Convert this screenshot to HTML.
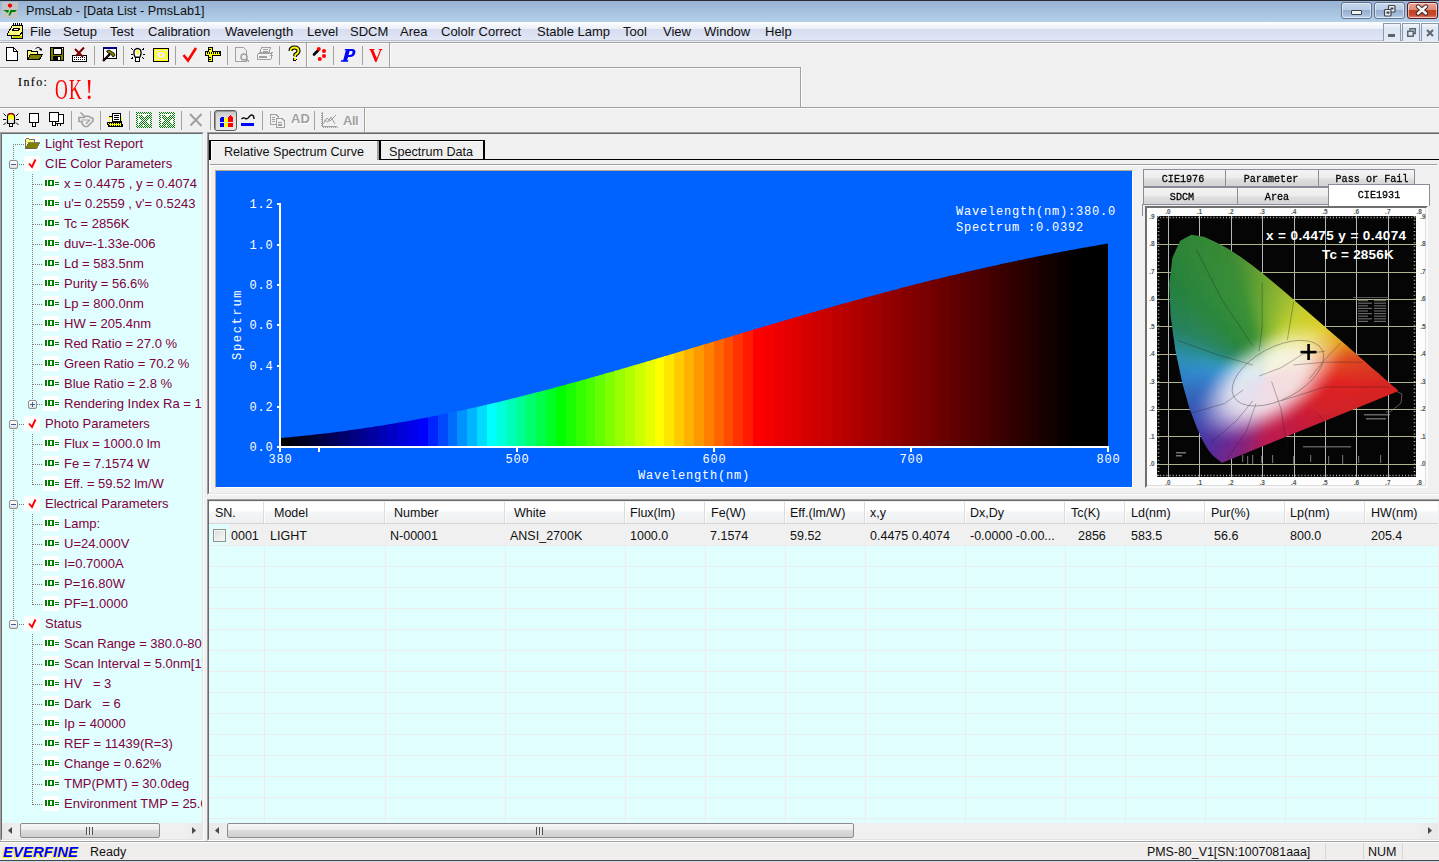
<!DOCTYPE html><html><head><meta charset="utf-8"><title>PmsLab</title><style>
*{box-sizing:border-box}
html,body{margin:0;padding:0}
body{width:1439px;height:862px;position:relative;overflow:hidden;background:#f0f0f0;font-family:"Liberation Sans",sans-serif;color:#000}
.ab{position:absolute}
.t{position:absolute;white-space:pre;line-height:1}
svg{position:absolute;overflow:visible}
</style></head><body>
<div class="ab" style="left:0;top:0;width:1439px;height:1px;background:#2a2e36"></div>
<div class="ab" style="left:0;top:1px;width:1439px;height:21px;background:linear-gradient(#97b2d3,#b5d0e9)"></div>
<svg style="left:2px;top:2px" width="16" height="16" viewBox="0 0 16 16">
<rect x="0" y="0" width="16" height="16" fill="#c4c4c4"/>
<circle cx="8" cy="3.6" r="2.1" fill="#f00000"/>
<path d="M1 8 L7 8 L6 11 Z" fill="#008000"/><path d="M8.5 8 L15 8 L13 10 L10 10 L8 13.5 L6.5 13.5 Z" fill="#008000"/>
</svg>
<div class="t" style="left:26px;top:5px;font-size:12.6px;color:#101010">PmsLab - [Data List - PmsLab1]</div>
<div class="ab" style="left:1341px;top:2px;width:31px;height:17px;border:1px solid #5f7391;border-radius:3px;background:linear-gradient(#c6d7ec 0%,#b9cde6 45%,#95aed0 50%,#a9c0df 85%,#c4d8ef 100%);box-shadow:inset 0 0 0 1px rgba(255,255,255,.55)"></div>
<div class="ab" style="left:1374px;top:2px;width:31px;height:17px;border:1px solid #5f7391;border-radius:3px;background:linear-gradient(#c6d7ec 0%,#b9cde6 45%,#95aed0 50%,#a9c0df 85%,#c4d8ef 100%);box-shadow:inset 0 0 0 1px rgba(255,255,255,.55)"></div>
<div class="ab" style="left:1407px;top:2px;width:31px;height:17px;border:1px solid #5a1a20;border-radius:3px;background:linear-gradient(#eba797 0%,#d98a78 45%,#c2411f 50%,#c94a2b 80%,#e0887a 100%);box-shadow:inset 0 0 0 1px rgba(255,255,255,.55)"></div>
<div class="ab" style="left:1351px;top:10px;width:11px;height:5px;background:#f4f4f0;border:1px solid #3a4250;border-radius:1px"></div>
<svg style="left:1383px;top:5px" width="14" height="12" viewBox="0 0 14 12">
<rect x="5.5" y="0.5" width="6.5" height="6.5" fill="#f4f4f0" stroke="#3a4250" stroke-width="1.2" rx="1"/>
<rect x="7.5" y="2.5" width="3" height="2" fill="#3a4250"/>
<rect x="1.5" y="4.5" width="6.5" height="6.5" fill="#f4f4f0" stroke="#3a4250" stroke-width="1.2" rx="1"/>
<rect x="3.5" y="6.5" width="3" height="2.2" fill="#3a4250"/>
</svg>
<svg style="left:1415px;top:4px" width="14" height="12" viewBox="0 0 14 12">
<path d="M3 2.5 L11 9.5 M11 2.5 L3 9.5" stroke="#40282a" stroke-width="4.4" stroke-linecap="round"/>
<path d="M3 2.5 L11 9.5 M11 2.5 L3 9.5" stroke="#f6f6f6" stroke-width="2.4" stroke-linecap="round"/>
</svg>
<div class="ab" style="left:0;top:22px;width:1439px;height:18px;background:linear-gradient(#ffffff 0%,#f3f5fa 20%,#eceff8 37%,#d6dcef 39%,#e2e7f6 100%)"></div>
<div class="ab" style="left:0;top:40px;width:1439px;height:1px;background:#bcc3d6"></div>
<div class="ab" style="left:0;top:41px;width:1439px;height:1px;background:#ececec"></div>
<div class="ab" style="left:0;top:42px;width:1439px;height:1px;background:#a0a0a0"></div>
<div class="ab" style="left:0;top:43px;width:1439px;height:1px;background:#fdfdfd"></div>
<svg style="left:7px;top:23px" width="17" height="17" viewBox="0 0 17 17" shape-rendering="crispEdges">
<defs><pattern id="mdy" width="2" height="2" patternUnits="userSpaceOnUse"><rect width="2" height="2" fill="#ffff00"/><rect width="1" height="1" fill="#ffffff"/><rect x="1" y="1" width="1" height="1" fill="#ffffff"/></pattern></defs>
<path d="M4.5 10.5 V15.5 H15.5 V8.5 Z" fill="url(#mdy)" stroke="#000"/>
<path d="M0.5 10.5 L5.5 2.5 H15.5 V8.5 L12.5 12.5 H0.5 Z" fill="url(#mdy)" stroke="#000"/>
<path d="M6.5 5.5 H12.5 L11.5 7.5 H5.5 Z" fill="#fff" stroke="#000"/>
<path d="M6 0 V2 M8 0 V2 M10 0 V2 M12 0 V2 M14 0 V2" stroke="#000"/>
<path d="M6 13.5 H15 M6 14.5 H15" stroke="#c8c800"/>
</svg>
<div class="t" style="left:30px;top:25px;font-size:13px;color:#101010">File</div>
<div class="t" style="left:63px;top:25px;font-size:13px;color:#101010">Setup</div>
<div class="t" style="left:110px;top:25px;font-size:13px;color:#101010">Test</div>
<div class="t" style="left:148px;top:25px;font-size:13px;color:#101010">Calibration</div>
<div class="t" style="left:225px;top:25px;font-size:13px;color:#101010">Wavelength</div>
<div class="t" style="left:307px;top:25px;font-size:13px;color:#101010">Level</div>
<div class="t" style="left:350px;top:25px;font-size:13px;color:#101010">SDCM</div>
<div class="t" style="left:400px;top:25px;font-size:13px;color:#101010">Area</div>
<div class="t" style="left:441px;top:25px;font-size:13px;color:#101010">Cololr Correct</div>
<div class="t" style="left:537px;top:25px;font-size:13px;color:#101010">Stable Lamp</div>
<div class="t" style="left:623px;top:25px;font-size:13px;color:#101010">Tool</div>
<div class="t" style="left:663px;top:25px;font-size:13px;color:#101010">View</div>
<div class="t" style="left:704px;top:25px;font-size:13px;color:#101010">Window</div>
<div class="t" style="left:765px;top:25px;font-size:13px;color:#101010">Help</div>
<div class="ab" style="left:1383px;top:23px;width:18px;height:18px;border:1px solid #8a9bb0;border-bottom:none;background:linear-gradient(#f2f6fb 0%,#e8eef7 18%,#dde6f2 22%,#e3ebf6 100%)"></div>
<div class="ab" style="left:1402px;top:23px;width:18px;height:18px;border:1px solid #8a9bb0;border-bottom:none;background:linear-gradient(#f2f6fb 0%,#e8eef7 18%,#dde6f2 22%,#e3ebf6 100%)"></div>
<div class="ab" style="left:1421px;top:23px;width:18px;height:18px;border:1px solid #8a9bb0;border-bottom:none;background:linear-gradient(#f2f6fb 0%,#e8eef7 18%,#dde6f2 22%,#e3ebf6 100%)"></div>
<div class="ab" style="left:1388px;top:34px;width:7px;height:2.5px;background:#5c6470"></div>
<svg style="left:1407px;top:28px" width="9" height="9" viewBox="0 0 9 9">
<path d="M3 2.5 V0.75 H8.25 V5.5 H6.5" fill="none" stroke="#5c6470" stroke-width="1.5"/>
<rect x="0.75" y="3.25" width="5.5" height="5" fill="none" stroke="#5c6470" stroke-width="1.5"/>
</svg>
<svg style="left:1426px;top:29px" width="8" height="8" viewBox="0 0 8 8">
<path d="M1 1 L7 7 M7 1 L1 7" stroke="#5c6470" stroke-width="2"/>
</svg>
<svg style="left:6px;top:47px" width="12" height="14" viewBox="0 0 12 14" shape-rendering="crispEdges"><path d="M0.5 0.5 H7.5 L11.5 4.5 V13.5 H0.5 Z" fill="#fff" stroke="#000"/><path d="M7.5 0.5 V4.5 H11.5" fill="none" stroke="#000"/></svg>
<svg style="left:27px;top:47px" width="16" height="14" viewBox="0 0 16 14" shape-rendering="crispEdges"><defs><pattern id="dy" width="2" height="2" patternUnits="userSpaceOnUse"><rect width="2" height="2" fill="#ffff00"/><rect width="1" height="1" fill="#fff"/><rect x="1" y="1" width="1" height="1" fill="#fff"/></pattern></defs><path d="M0.5 3.5 H4 L5 4.5 H10.5 V7 H4 L0.5 12 Z" fill="url(#dy)" stroke="#000"/><path d="M0.5 12.5 L3.5 7.5 H15.5 L12.5 12.5 Z" fill="#808000" stroke="#000"/><path d="M8.5 1.5 Q10.5 -0.5 13 1 L14 3" fill="none" stroke="#000" shape-rendering="auto"/><path d="M12 2.5 L14.5 4 L15 1.5 Z" fill="#000" shape-rendering="auto"/></svg>
<svg style="left:50px;top:47px" width="15" height="14" viewBox="0 0 15 14" shape-rendering="crispEdges"><rect x="0.5" y="0.5" width="13" height="13" fill="#808000" stroke="#000"/><rect x="3" y="1" width="8" height="6" fill="#fff" stroke="#000" stroke-width="1"/><rect x="3" y="9" width="8" height="4.5" fill="#000"/><rect x="8" y="10" width="2" height="3" fill="#fff"/><rect x="12" y="1" width="1" height="1" fill="#fff"/></svg>
<svg style="left:72px;top:47px" width="16" height="15" viewBox="0 0 16 15" shape-rendering="crispEdges"><rect x="0.5" y="8.5" width="14" height="6" fill="#fff" stroke="#000"/><rect x="2" y="10" width="1" height="1" fill="#000"/><rect x="2" y="12" width="1" height="1" fill="#000"/><rect x="4" y="10" width="1" height="1" fill="#000"/><rect x="4" y="12" width="1" height="1" fill="#000"/><rect x="6" y="10" width="1" height="1" fill="#000"/><rect x="6" y="12" width="1" height="1" fill="#000"/><rect x="8" y="10" width="1" height="1" fill="#000"/><rect x="8" y="12" width="1" height="1" fill="#000"/><rect x="10" y="10" width="1" height="1" fill="#000"/><rect x="10" y="12" width="1" height="1" fill="#000"/><rect x="12" y="10" width="1" height="1" fill="#000"/><rect x="12" y="12" width="1" height="1" fill="#000"/><path d="M3 2 L11 10 M12 0.5 L4 9" stroke="#800000" stroke-width="2" shape-rendering="auto"/></svg>
<div class="ab" style="left:94px;top:46px;width:1px;height:19px;background:#a0a0a0"></div>
<svg style="left:102px;top:47px" width="16" height="15" viewBox="0 0 16 15" shape-rendering="crispEdges"><rect x="1.5" y="0.5" width="13" height="11" fill="#fff" stroke="#000"/><rect x="1" y="0" width="14" height="2" fill="#000080"/><path d="M1 14 L8 7" stroke="#000" stroke-width="2.4" shape-rendering="auto"/><path d="M1 14 L8 7" stroke="#800000" stroke-width="1" stroke-dasharray="1 1" shape-rendering="auto"/><path d="M4.5 4 L7 3 L12 6 L13 8.5 L11 10 L9 7 L6 6 Z" fill="#808000" stroke="#000" stroke-width="0.8" shape-rendering="auto"/></svg>
<div class="ab" style="left:123px;top:46px;width:1px;height:19px;background:#a0a0a0"></div>
<svg style="left:130px;top:47px" width="16" height="15" viewBox="0 0 16 15" shape-rendering="crispEdges"><path d="M5 10 Q3 6 4.5 3 Q7.5 0 10.5 3 Q12 6 10 10 Z" fill="#fff" stroke="#000" stroke-width="1.2" shape-rendering="auto"/><path d="M6.5 4 Q7.5 2 9 4 L8.5 8 L7 8 Z" fill="#ffff00" shape-rendering="auto"/><rect x="5.5" y="10" width="4" height="4" fill="#fff" stroke="#000" stroke-width="1"/><path d="M1 7 H2.5 M13 7 H14.5 M1.5 1.5 L3 3 M14 1.5 L12.5 3 M1.5 12 L3 10.5 M14 12 L12.5 10.5" stroke="#000" stroke-width="1"/></svg>
<svg style="left:153px;top:48px" width="16" height="14" viewBox="0 0 16 14" shape-rendering="crispEdges"><rect x="0" y="0" width="16" height="14" fill="#000"/><rect x="1" y="1" width="14" height="12" fill="#ffff00"/><rect x="2" y="2" width="12" height="10" fill="#ececf4"/><path d="M5 3.5 H11 L13 5.5 V8.5 L11 10.5 H5 L3 8.5 V5.5 Z" fill="none" stroke="#ffff00" stroke-width="1.6" shape-rendering="auto"/><rect x="7" y="6" width="2" height="2" fill="#ffff00"/></svg>
<div class="ab" style="left:175px;top:46px;width:1px;height:19px;background:#a0a0a0"></div>
<svg style="left:183px;top:47px" width="14" height="15" viewBox="0 0 14 15" shape-rendering="crispEdges"><path d="M0.5 8 L5 13.5 L13 1" fill="none" stroke="#ff0000" stroke-width="2.6" shape-rendering="auto"/></svg>
<svg style="left:205px;top:47px" width="16" height="15" viewBox="0 0 16 15" shape-rendering="crispEdges"><path d="M3.5 0.5 H7.5 V4.5 H15.5 V8.5 H7.5 V14.5 H3.5 V8.5 H0.5 V4.5 H3.5 Z" fill="#ffff00" stroke="#000"/><rect x="2" y="5" width="1" height="1.5" fill="#000"/><rect x="4" y="5" width="1" height="1.5" fill="#000"/><rect x="6" y="5" width="1" height="1.5" fill="#000"/><rect x="8" y="5" width="1" height="1.5" fill="#000"/><rect x="10" y="5" width="1" height="1.5" fill="#000"/><rect x="12" y="5" width="1" height="1.5" fill="#000"/><rect x="14" y="5" width="1" height="1.5" fill="#000"/><path d="M4 2 H6 M4 10 H6 M4 12 H6" stroke="#000"/></svg>
<div class="ab" style="left:227px;top:46px;width:1px;height:19px;background:#a0a0a0"></div>
<svg style="left:235px;top:47px" width="15" height="15" viewBox="0 0 15 15" shape-rendering="crispEdges"><path d="M0.5 0.5 H8.5 L11.5 3.5 V14.5 H0.5 Z" fill="none" stroke="#a0a0a0"/><circle cx="9" cy="10" r="3" fill="none" stroke="#a0a0a0" stroke-width="1.5" shape-rendering="auto"/><path d="M11 12 L14 14.5" stroke="#a0a0a0" stroke-width="1.5"/></svg>
<svg style="left:257px;top:47px" width="16" height="14" viewBox="0 0 16 14" shape-rendering="crispEdges"><path d="M4.5 0.5 H13.5 L12 5.5 H3 Z" fill="none" stroke="#a0a0a0"/><path d="M6 2.5 H11 M5.5 4 H10.5" stroke="#a0a0a0"/><rect x="0.5" y="6.5" width="14" height="6" rx="1.5" fill="none" stroke="#a0a0a0"/><rect x="1.5" y="8.5" width="8" height="2" fill="#a0a0a0"/><path d="M13 7 L15.5 5 M13 9 L15.5 8" stroke="#a0a0a0"/></svg>
<div class="ab" style="left:279px;top:46px;width:1px;height:19px;background:#a0a0a0"></div>
<svg style="left:288px;top:46px" width="13" height="16" viewBox="0 0 13 16" shape-rendering="crispEdges"><path d="M2.5 5 Q2.5 1.5 6.5 1.5 Q10.5 1.5 10.5 5 Q10.5 7 7.5 8.5 L7 10.5" fill="none" stroke="#000" stroke-width="4" shape-rendering="auto"/><path d="M2.5 5 Q2.5 1.5 6.5 1.5 Q10.5 1.5 10.5 5 Q10.5 7 7.5 8.5 L7 10.5" fill="none" stroke="#ffff00" stroke-width="1.8" shape-rendering="auto"/><rect x="4.5" y="11.5" width="4" height="3.5" rx="1" fill="#000"/><rect x="5.5" y="12.3" width="2" height="2" fill="#ffff00"/></svg>
<div class="ab" style="left:306px;top:43px;width:1px;height:24px;background:#a0a0a0"></div><div class="ab" style="left:307px;top:43px;width:1px;height:24px;background:#fcfcfc"></div>
<svg style="left:312px;top:46px" width="16" height="16" viewBox="0 0 16 16" shape-rendering="crispEdges"><path d="M2 8.5 L6 4.5" stroke="#000" stroke-width="2.6" stroke-linecap="round" shape-rendering="auto"/><circle cx="6.8" cy="3" r="2" fill="#ff0000" shape-rendering="auto"/><circle cx="12" cy="5" r="2" fill="#ff0000" shape-rendering="auto"/><circle cx="12" cy="10" r="2" fill="#ff0000" shape-rendering="auto"/><circle cx="7.8" cy="13" r="2" fill="#ff0000" shape-rendering="auto"/></svg>
<div class="ab" style="left:333px;top:46px;width:1px;height:19px;background:#a0a0a0"></div>
<svg style="left:340px;top:48px" width="17" height="15" viewBox="0 0 17 15" shape-rendering="crispEdges"><path fill-rule="evenodd" d="M0.8 13.7 H8 L8.4 12.3 H7 L8.1 9 H10 Q14.2 9 15.3 5 Q16 1 12 1 H5 L4.6 2.3 H5.9 L3.2 12.3 H1.2 Z M9.6 3 H11.6 Q13 3 12.5 5 Q11.9 7 9.9 7 H8.5 Z" fill="#0000ff" shape-rendering="auto"/></svg>
<div class="ab" style="left:362px;top:46px;width:1px;height:19px;background:#a0a0a0"></div>
<div class="t" style="left:369px;top:47px;font-family:'Liberation Serif';font-size:18.5px;font-weight:bold;color:#ff0000;transform:scaleX(1.02);transform-origin:0 0">V</div>
<div class="ab" style="left:389px;top:43px;width:1px;height:24px;background:#a0a0a0"></div><div class="ab" style="left:390px;top:43px;width:1px;height:24px;background:#fcfcfc"></div>
<div class="ab" style="left:0;top:67px;width:801px;height:1px;background:#a0a0a0"></div>
<div class="ab" style="left:0;top:68px;width:800px;height:1px;background:#fbfbfb"></div>
<div class="ab" style="left:800px;top:67px;width:1px;height:40px;background:#a0a0a0"></div>
<div class="ab" style="left:801px;top:68px;width:1px;height:39px;background:#fbfbfb"></div>
<div class="t" style="left:18px;top:76px;font-family:'Liberation Serif';font-size:12px;font-weight:normal;letter-spacing:1.4px;color:#000;-webkit-text-stroke:0.15px #000">Info:</div>
<div class="t" style="left:55px;top:75px;font-family:'Liberation Serif';font-size:29.5px;color:#ff0000;transform:scaleX(0.6);transform-origin:0 0;letter-spacing:2px">OK</div>
<div class="t" style="left:85px;top:75px;font-family:'Liberation Serif';font-size:29.5px;color:#ff0000;transform:scaleX(0.85);transform-origin:0 0">!</div>
<div class="ab" style="left:0;top:107px;width:1439px;height:1px;background:#a0a0a0"></div>
<div class="ab" style="left:0;top:108px;width:1439px;height:1px;background:#fbfbfb"></div>
<svg style="left:3px;top:112px" width="17" height="16" viewBox="0 0 17 16" shape-rendering="crispEdges"><path d="M4.5 11.5 V5 Q4.5 1.5 8 1.5 Q11.5 1.5 11.5 5 V11.5 Z" fill="#e8e8f0" stroke="#000" stroke-width="1.2" shape-rendering="auto"/><path d="M5.2 8.5 V5 Q5.2 2.2 8 2.2 Q10.8 2.2 10.8 5 V8.5 L8 6.5 Z" fill="#ffff00" shape-rendering="auto"/><path d="M5 3 Q8 0 11 3" stroke="#a00000" stroke-width="1.2" fill="none" shape-rendering="auto"/><rect x="6.5" y="11.5" width="3" height="3" fill="#fff" stroke="#000"/><path d="M0.5 1.5 L3 4 M15.5 1.5 L13 4 M0 7.5 H3 M13 7.5 H16 M0.5 13 L3 10.5 M15.5 13 L13 10.5" stroke="#000" stroke-width="1" shape-rendering="auto"/></svg>
<svg style="left:29px;top:112px" width="11" height="15" viewBox="0 0 11 15" shape-rendering="crispEdges"><rect x="0.5" y="1.5" width="9" height="9" fill="#fff" stroke="#000"/><rect x="3.5" y="10.5" width="3" height="3.5" fill="#fff" stroke="#000"/></svg>
<svg style="left:49px;top:112px" width="16" height="16" viewBox="0 0 16 16" shape-rendering="crispEdges"><rect x="6.5" y="2.5" width="8" height="9" fill="#fff" stroke="#000"/><rect x="0.5" y="0.5" width="9" height="9" fill="#fff" stroke="#000"/><rect x="3.5" y="9.5" width="3" height="3.5" fill="#fff" stroke="#000"/><rect x="8" y="12" width="1" height="2" fill="#000"/><rect x="11" y="12" width="1" height="2" fill="#000"/></svg>
<div class="ab" style="left:71px;top:111px;width:1px;height:19px;background:#a0a0a0"></div>
<svg style="left:76px;top:110px" width="20" height="20" viewBox="0 0 20 20" shape-rendering="crispEdges"><path d="M4.5 2.5 L9 7" stroke="#a0a0a0" stroke-width="1.6" shape-rendering="auto"/><path d="M3 7.5 H8 L10 6 L13 6.5 L17 8.5 V11 L11.5 16.5 H8.5 L6 13.5 V11.5 H3 Z" fill="none" stroke="#a0a0a0" stroke-width="1.6" shape-rendering="auto"/><path d="M6 10 H13.5 L10 14" fill="none" stroke="#a0a0a0" stroke-width="1.2" shape-rendering="auto"/></svg>
<div class="ab" style="left:100px;top:111px;width:1px;height:19px;background:#a0a0a0"></div>
<svg style="left:107px;top:113px" width="16" height="14" viewBox="0 0 16 14" shape-rendering="crispEdges"><defs><pattern id="dy2" width="2" height="2" patternUnits="userSpaceOnUse"><rect width="2" height="2" fill="#ffff00"/><rect width="1" height="1" fill="#000"/></pattern></defs><rect x="5.5" y="0.5" width="8" height="8" fill="#fff" stroke="#000"/><path d="M7 2.5 H12 M7 4.5 H12 M7 6.5 H12" stroke="#000"/><path d="M1.5 3.5 H5 V8.5 H14.5 V3.5" fill="none" stroke="#000"/><rect x="2" y="4" width="3" height="4.5" fill="#ffff00"/><rect x="3" y="5" width="2" height="3.5" fill="#fff"/><rect x="13.5" y="4" width="1" height="4" fill="#ffff00"/><path d="M0.5 9.5 H14.5 L15.5 13.5 H1.5 Z" fill="url(#dy2)" stroke="#000"/></svg>
<div class="ab" style="left:129px;top:111px;width:1px;height:19px;background:#a0a0a0"></div>
<svg style="left:136px;top:112px" width="16" height="16" viewBox="0 0 16 16" shape-rendering="crispEdges"><defs><pattern id="dgp" width="2" height="2" patternUnits="userSpaceOnUse"><rect width="2" height="2" fill="#ffffff"/><rect width="1" height="1" fill="#008000"/><rect x="1" y="1" width="1" height="1" fill="#008000"/></pattern></defs><rect x="0" y="0" width="16" height="16" fill="url(#dgp)"/><rect x="2" y="2" width="12" height="12" fill="#fff"/><path d="M2.5 3 H6.5 L13 12 V14 H9.5 L2.5 5 Z M10 3 H14 V5 L6 14 H2.5 V12 Z" fill="url(#dgp)"/><rect x="12" y="12" width="2" height="2" fill="url(#dgp)"/></svg>
<svg style="left:159px;top:112px" width="16" height="16" viewBox="0 0 16 16" shape-rendering="crispEdges"><defs><pattern id="dgp" width="2" height="2" patternUnits="userSpaceOnUse"><rect width="2" height="2" fill="#ffffff"/><rect width="1" height="1" fill="#008000"/><rect x="1" y="1" width="1" height="1" fill="#008000"/></pattern></defs><rect x="0" y="0" width="16" height="16" fill="url(#dgp)"/><rect x="2" y="2" width="12" height="12" fill="#fff"/><path d="M2.5 3 H6.5 L13 12 V14 H9.5 L2.5 5 Z M10 3 H14 V5 L6 14 H2.5 V12 Z" fill="url(#dgp)"/><rect x="12" y="12" width="2" height="2" fill="url(#dgp)"/></svg>
<div class="ab" style="left:181px;top:111px;width:1px;height:19px;background:#a0a0a0"></div>
<svg style="left:189px;top:113px" width="14" height="14" viewBox="0 0 14 14" shape-rendering="crispEdges"><path d="M1 1 L12.5 13 M12.5 1 L1.5 12.5" stroke="#a0a0a0" stroke-width="2" shape-rendering="auto"/></svg>
<div class="ab" style="left:210px;top:111px;width:1px;height:19px;background:#a0a0a0"></div>
<div class="ab" style="left:214px;top:110px;width:23px;height:21px;border:1px solid #5c5c5c;border-radius:3px;background:linear-gradient(#c8c8c8,#dedede 40%,#e6e6e6);box-shadow:inset 1px 1px 0 #9a9a9a"></div>
<svg style="left:220px;top:115px" width="13" height="12" viewBox="0 0 13 12" shape-rendering="crispEdges"><path d="M0 3 Q0.5 2 2 2 H4 V7 H0 Z" fill="#0000ff"/><rect x="4" y="3" width="4" height="4" fill="#ffff00"/><path d="M8 2 L10.5 0 L13 2 V7 H8 Z" fill="#ff0000"/><rect x="0" y="8" width="4" height="4" fill="#0000ff"/><rect x="4" y="8" width="4" height="4" fill="#ffff00"/><rect x="8" y="8" width="5" height="4" fill="#ff0000"/></svg>
<svg style="left:241px;top:114px" width="14" height="13" viewBox="0 0 14 13" shape-rendering="crispEdges"><path d="M0.5 5 Q2.5 3 4.5 4.5 Q6.5 5.5 8 3 Q10 0 12 1.5 Q13 2.5 13 5" fill="none" stroke="#000" stroke-width="1.4" shape-rendering="auto"/><rect x="0" y="9" width="13" height="3" fill="#0000ff"/></svg>
<div class="ab" style="left:262px;top:111px;width:1px;height:19px;background:#a0a0a0"></div>
<svg style="left:270px;top:114px" width="16" height="14" viewBox="0 0 16 14" shape-rendering="crispEdges"><path d="M0.5 0.5 H6 L8 2.5 V10.5 H0.5 Z" fill="none" stroke="#a0a0a0"/><path d="M6.5 4.5 H12 L14.5 7 V13.5 H6.5 Z" fill="#f0f0f0" stroke="#a0a0a0"/><path d="M2 3.5 H5 M2 5.5 H5 M2 7.5 H5 M8 8.5 H12 M8 10 H12 M8 11.5 H12" stroke="#a0a0a0"/></svg>
<div class="t" style="left:291px;top:112px;font-size:13px;font-weight:bold;color:#a0a0a0;text-shadow:1px 1px 0 #fff">AD</div>
<div class="ab" style="left:314px;top:111px;width:1px;height:19px;background:#a0a0a0"></div>
<svg style="left:321px;top:112px" width="17" height="16" viewBox="0 0 17 16" shape-rendering="crispEdges"><path d="M1.5 0 V14.5 H16" fill="none" stroke="#a0a0a0"/><rect x="2" y="15" width="1" height="1" fill="#a0a0a0"/><rect x="4" y="15" width="1" height="1" fill="#a0a0a0"/><rect x="6" y="15" width="1" height="1" fill="#a0a0a0"/><rect x="8" y="15" width="1" height="1" fill="#a0a0a0"/><rect x="10" y="15" width="1" height="1" fill="#a0a0a0"/><rect x="12" y="15" width="1" height="1" fill="#a0a0a0"/><rect x="14" y="15" width="1" height="1" fill="#a0a0a0"/><rect x="16" y="15" width="1" height="1" fill="#a0a0a0"/><rect x="0" y="1" width="1" height="1" fill="#a0a0a0"/><rect x="0" y="3" width="1" height="1" fill="#a0a0a0"/><rect x="0" y="5" width="1" height="1" fill="#a0a0a0"/><rect x="0" y="7" width="1" height="1" fill="#a0a0a0"/><rect x="0" y="9" width="1" height="1" fill="#a0a0a0"/><rect x="0" y="11" width="1" height="1" fill="#a0a0a0"/><rect x="0" y="13" width="1" height="1" fill="#a0a0a0"/><path d="M2 12 L6 6 L9 9 L15 3 M3 8 L7 10 L10 5 L14 12" fill="none" stroke="#a0a0a0" shape-rendering="auto"/></svg>
<div class="t" style="left:343px;top:114px;font-size:13px;font-weight:bold;color:#a0a0a0;letter-spacing:-0.5px;text-shadow:1px 1px 0 #fff">All</div>
<div class="ab" style="left:364px;top:108px;width:1px;height:24px;background:#a0a0a0"></div><div class="ab" style="left:365px;top:108px;width:1px;height:24px;background:#fcfcfc"></div>
<div class="ab" style="left:0;top:132px;width:204px;height:709px;border-top:1px solid #a0a0a0;border-left:1px solid #a0a0a0;border-right:1px solid #fdfdfd;border-bottom:1px solid #fdfdfd"></div>
<div class="ab" style="left:1px;top:133px;width:202px;height:707px;border-top:1px solid #696969;border-left:1px solid #696969;border-right:1px solid #e3e3e3;border-bottom:1px solid #e3e3e3"></div>
<div class="ab" style="left:2px;top:134px;width:200px;height:689px;background:#e1fefe;overflow:hidden">
<svg style="left:0;top:0" width="200" height="689" viewBox="2 134 200 689" shape-rendering="crispEdges"><defs><pattern id="fdy" width="2" height="2" patternUnits="userSpaceOnUse"><rect width="2" height="2" fill="#ffff00"/><rect width="1" height="1" fill="#ffffff"/><rect x="1" y="1" width="1" height="1" fill="#ffffff"/></pattern><linearGradient id="expg" x1="0" y1="0" x2="0" y2="1"><stop offset="0" stop-color="#ffffff"/><stop offset="0.5" stop-color="#f4f4f4"/><stop offset="1" stop-color="#d8d8d8"/></linearGradient></defs><rect x="13" y="146" width="1" height="1" fill="#7d7d7d"/><rect x="13" y="148" width="1" height="1" fill="#7d7d7d"/><rect x="13" y="150" width="1" height="1" fill="#7d7d7d"/><rect x="13" y="152" width="1" height="1" fill="#7d7d7d"/><rect x="13" y="154" width="1" height="1" fill="#7d7d7d"/><rect x="13" y="156" width="1" height="1" fill="#7d7d7d"/><rect x="13" y="158" width="1" height="1" fill="#7d7d7d"/><rect x="13" y="170" width="1" height="1" fill="#7d7d7d"/><rect x="13" y="172" width="1" height="1" fill="#7d7d7d"/><rect x="13" y="174" width="1" height="1" fill="#7d7d7d"/><rect x="13" y="176" width="1" height="1" fill="#7d7d7d"/><rect x="13" y="178" width="1" height="1" fill="#7d7d7d"/><rect x="13" y="180" width="1" height="1" fill="#7d7d7d"/><rect x="13" y="182" width="1" height="1" fill="#7d7d7d"/><rect x="13" y="184" width="1" height="1" fill="#7d7d7d"/><rect x="13" y="186" width="1" height="1" fill="#7d7d7d"/><rect x="13" y="188" width="1" height="1" fill="#7d7d7d"/><rect x="13" y="190" width="1" height="1" fill="#7d7d7d"/><rect x="13" y="192" width="1" height="1" fill="#7d7d7d"/><rect x="13" y="194" width="1" height="1" fill="#7d7d7d"/><rect x="13" y="196" width="1" height="1" fill="#7d7d7d"/><rect x="13" y="198" width="1" height="1" fill="#7d7d7d"/><rect x="13" y="200" width="1" height="1" fill="#7d7d7d"/><rect x="13" y="202" width="1" height="1" fill="#7d7d7d"/><rect x="13" y="204" width="1" height="1" fill="#7d7d7d"/><rect x="13" y="206" width="1" height="1" fill="#7d7d7d"/><rect x="13" y="208" width="1" height="1" fill="#7d7d7d"/><rect x="13" y="210" width="1" height="1" fill="#7d7d7d"/><rect x="13" y="212" width="1" height="1" fill="#7d7d7d"/><rect x="13" y="214" width="1" height="1" fill="#7d7d7d"/><rect x="13" y="216" width="1" height="1" fill="#7d7d7d"/><rect x="13" y="218" width="1" height="1" fill="#7d7d7d"/><rect x="13" y="220" width="1" height="1" fill="#7d7d7d"/><rect x="13" y="222" width="1" height="1" fill="#7d7d7d"/><rect x="13" y="224" width="1" height="1" fill="#7d7d7d"/><rect x="13" y="226" width="1" height="1" fill="#7d7d7d"/><rect x="13" y="228" width="1" height="1" fill="#7d7d7d"/><rect x="13" y="230" width="1" height="1" fill="#7d7d7d"/><rect x="13" y="232" width="1" height="1" fill="#7d7d7d"/><rect x="13" y="234" width="1" height="1" fill="#7d7d7d"/><rect x="13" y="236" width="1" height="1" fill="#7d7d7d"/><rect x="13" y="238" width="1" height="1" fill="#7d7d7d"/><rect x="13" y="240" width="1" height="1" fill="#7d7d7d"/><rect x="13" y="242" width="1" height="1" fill="#7d7d7d"/><rect x="13" y="244" width="1" height="1" fill="#7d7d7d"/><rect x="13" y="246" width="1" height="1" fill="#7d7d7d"/><rect x="13" y="248" width="1" height="1" fill="#7d7d7d"/><rect x="13" y="250" width="1" height="1" fill="#7d7d7d"/><rect x="13" y="252" width="1" height="1" fill="#7d7d7d"/><rect x="13" y="254" width="1" height="1" fill="#7d7d7d"/><rect x="13" y="256" width="1" height="1" fill="#7d7d7d"/><rect x="13" y="258" width="1" height="1" fill="#7d7d7d"/><rect x="13" y="260" width="1" height="1" fill="#7d7d7d"/><rect x="13" y="262" width="1" height="1" fill="#7d7d7d"/><rect x="13" y="264" width="1" height="1" fill="#7d7d7d"/><rect x="13" y="266" width="1" height="1" fill="#7d7d7d"/><rect x="13" y="268" width="1" height="1" fill="#7d7d7d"/><rect x="13" y="270" width="1" height="1" fill="#7d7d7d"/><rect x="13" y="272" width="1" height="1" fill="#7d7d7d"/><rect x="13" y="274" width="1" height="1" fill="#7d7d7d"/><rect x="13" y="276" width="1" height="1" fill="#7d7d7d"/><rect x="13" y="278" width="1" height="1" fill="#7d7d7d"/><rect x="13" y="280" width="1" height="1" fill="#7d7d7d"/><rect x="13" y="282" width="1" height="1" fill="#7d7d7d"/><rect x="13" y="284" width="1" height="1" fill="#7d7d7d"/><rect x="13" y="286" width="1" height="1" fill="#7d7d7d"/><rect x="13" y="288" width="1" height="1" fill="#7d7d7d"/><rect x="13" y="290" width="1" height="1" fill="#7d7d7d"/><rect x="13" y="292" width="1" height="1" fill="#7d7d7d"/><rect x="13" y="294" width="1" height="1" fill="#7d7d7d"/><rect x="13" y="296" width="1" height="1" fill="#7d7d7d"/><rect x="13" y="298" width="1" height="1" fill="#7d7d7d"/><rect x="13" y="300" width="1" height="1" fill="#7d7d7d"/><rect x="13" y="302" width="1" height="1" fill="#7d7d7d"/><rect x="13" y="304" width="1" height="1" fill="#7d7d7d"/><rect x="13" y="306" width="1" height="1" fill="#7d7d7d"/><rect x="13" y="308" width="1" height="1" fill="#7d7d7d"/><rect x="13" y="310" width="1" height="1" fill="#7d7d7d"/><rect x="13" y="312" width="1" height="1" fill="#7d7d7d"/><rect x="13" y="314" width="1" height="1" fill="#7d7d7d"/><rect x="13" y="316" width="1" height="1" fill="#7d7d7d"/><rect x="13" y="318" width="1" height="1" fill="#7d7d7d"/><rect x="13" y="320" width="1" height="1" fill="#7d7d7d"/><rect x="13" y="322" width="1" height="1" fill="#7d7d7d"/><rect x="13" y="324" width="1" height="1" fill="#7d7d7d"/><rect x="13" y="326" width="1" height="1" fill="#7d7d7d"/><rect x="13" y="328" width="1" height="1" fill="#7d7d7d"/><rect x="13" y="330" width="1" height="1" fill="#7d7d7d"/><rect x="13" y="332" width="1" height="1" fill="#7d7d7d"/><rect x="13" y="334" width="1" height="1" fill="#7d7d7d"/><rect x="13" y="336" width="1" height="1" fill="#7d7d7d"/><rect x="13" y="338" width="1" height="1" fill="#7d7d7d"/><rect x="13" y="340" width="1" height="1" fill="#7d7d7d"/><rect x="13" y="342" width="1" height="1" fill="#7d7d7d"/><rect x="13" y="344" width="1" height="1" fill="#7d7d7d"/><rect x="13" y="346" width="1" height="1" fill="#7d7d7d"/><rect x="13" y="348" width="1" height="1" fill="#7d7d7d"/><rect x="13" y="350" width="1" height="1" fill="#7d7d7d"/><rect x="13" y="352" width="1" height="1" fill="#7d7d7d"/><rect x="13" y="354" width="1" height="1" fill="#7d7d7d"/><rect x="13" y="356" width="1" height="1" fill="#7d7d7d"/><rect x="13" y="358" width="1" height="1" fill="#7d7d7d"/><rect x="13" y="360" width="1" height="1" fill="#7d7d7d"/><rect x="13" y="362" width="1" height="1" fill="#7d7d7d"/><rect x="13" y="364" width="1" height="1" fill="#7d7d7d"/><rect x="13" y="366" width="1" height="1" fill="#7d7d7d"/><rect x="13" y="368" width="1" height="1" fill="#7d7d7d"/><rect x="13" y="370" width="1" height="1" fill="#7d7d7d"/><rect x="13" y="372" width="1" height="1" fill="#7d7d7d"/><rect x="13" y="374" width="1" height="1" fill="#7d7d7d"/><rect x="13" y="376" width="1" height="1" fill="#7d7d7d"/><rect x="13" y="378" width="1" height="1" fill="#7d7d7d"/><rect x="13" y="380" width="1" height="1" fill="#7d7d7d"/><rect x="13" y="382" width="1" height="1" fill="#7d7d7d"/><rect x="13" y="384" width="1" height="1" fill="#7d7d7d"/><rect x="13" y="386" width="1" height="1" fill="#7d7d7d"/><rect x="13" y="388" width="1" height="1" fill="#7d7d7d"/><rect x="13" y="390" width="1" height="1" fill="#7d7d7d"/><rect x="13" y="392" width="1" height="1" fill="#7d7d7d"/><rect x="13" y="394" width="1" height="1" fill="#7d7d7d"/><rect x="13" y="396" width="1" height="1" fill="#7d7d7d"/><rect x="13" y="398" width="1" height="1" fill="#7d7d7d"/><rect x="13" y="400" width="1" height="1" fill="#7d7d7d"/><rect x="13" y="402" width="1" height="1" fill="#7d7d7d"/><rect x="13" y="404" width="1" height="1" fill="#7d7d7d"/><rect x="13" y="406" width="1" height="1" fill="#7d7d7d"/><rect x="13" y="408" width="1" height="1" fill="#7d7d7d"/><rect x="13" y="410" width="1" height="1" fill="#7d7d7d"/><rect x="13" y="412" width="1" height="1" fill="#7d7d7d"/><rect x="13" y="414" width="1" height="1" fill="#7d7d7d"/><rect x="13" y="416" width="1" height="1" fill="#7d7d7d"/><rect x="13" y="418" width="1" height="1" fill="#7d7d7d"/><rect x="13" y="430" width="1" height="1" fill="#7d7d7d"/><rect x="13" y="432" width="1" height="1" fill="#7d7d7d"/><rect x="13" y="434" width="1" height="1" fill="#7d7d7d"/><rect x="13" y="436" width="1" height="1" fill="#7d7d7d"/><rect x="13" y="438" width="1" height="1" fill="#7d7d7d"/><rect x="13" y="440" width="1" height="1" fill="#7d7d7d"/><rect x="13" y="442" width="1" height="1" fill="#7d7d7d"/><rect x="13" y="444" width="1" height="1" fill="#7d7d7d"/><rect x="13" y="446" width="1" height="1" fill="#7d7d7d"/><rect x="13" y="448" width="1" height="1" fill="#7d7d7d"/><rect x="13" y="450" width="1" height="1" fill="#7d7d7d"/><rect x="13" y="452" width="1" height="1" fill="#7d7d7d"/><rect x="13" y="454" width="1" height="1" fill="#7d7d7d"/><rect x="13" y="456" width="1" height="1" fill="#7d7d7d"/><rect x="13" y="458" width="1" height="1" fill="#7d7d7d"/><rect x="13" y="460" width="1" height="1" fill="#7d7d7d"/><rect x="13" y="462" width="1" height="1" fill="#7d7d7d"/><rect x="13" y="464" width="1" height="1" fill="#7d7d7d"/><rect x="13" y="466" width="1" height="1" fill="#7d7d7d"/><rect x="13" y="468" width="1" height="1" fill="#7d7d7d"/><rect x="13" y="470" width="1" height="1" fill="#7d7d7d"/><rect x="13" y="472" width="1" height="1" fill="#7d7d7d"/><rect x="13" y="474" width="1" height="1" fill="#7d7d7d"/><rect x="13" y="476" width="1" height="1" fill="#7d7d7d"/><rect x="13" y="478" width="1" height="1" fill="#7d7d7d"/><rect x="13" y="480" width="1" height="1" fill="#7d7d7d"/><rect x="13" y="482" width="1" height="1" fill="#7d7d7d"/><rect x="13" y="484" width="1" height="1" fill="#7d7d7d"/><rect x="13" y="486" width="1" height="1" fill="#7d7d7d"/><rect x="13" y="488" width="1" height="1" fill="#7d7d7d"/><rect x="13" y="490" width="1" height="1" fill="#7d7d7d"/><rect x="13" y="492" width="1" height="1" fill="#7d7d7d"/><rect x="13" y="494" width="1" height="1" fill="#7d7d7d"/><rect x="13" y="496" width="1" height="1" fill="#7d7d7d"/><rect x="13" y="498" width="1" height="1" fill="#7d7d7d"/><rect x="13" y="510" width="1" height="1" fill="#7d7d7d"/><rect x="13" y="512" width="1" height="1" fill="#7d7d7d"/><rect x="13" y="514" width="1" height="1" fill="#7d7d7d"/><rect x="13" y="516" width="1" height="1" fill="#7d7d7d"/><rect x="13" y="518" width="1" height="1" fill="#7d7d7d"/><rect x="13" y="520" width="1" height="1" fill="#7d7d7d"/><rect x="13" y="522" width="1" height="1" fill="#7d7d7d"/><rect x="13" y="524" width="1" height="1" fill="#7d7d7d"/><rect x="13" y="526" width="1" height="1" fill="#7d7d7d"/><rect x="13" y="528" width="1" height="1" fill="#7d7d7d"/><rect x="13" y="530" width="1" height="1" fill="#7d7d7d"/><rect x="13" y="532" width="1" height="1" fill="#7d7d7d"/><rect x="13" y="534" width="1" height="1" fill="#7d7d7d"/><rect x="13" y="536" width="1" height="1" fill="#7d7d7d"/><rect x="13" y="538" width="1" height="1" fill="#7d7d7d"/><rect x="13" y="540" width="1" height="1" fill="#7d7d7d"/><rect x="13" y="542" width="1" height="1" fill="#7d7d7d"/><rect x="13" y="544" width="1" height="1" fill="#7d7d7d"/><rect x="13" y="546" width="1" height="1" fill="#7d7d7d"/><rect x="13" y="548" width="1" height="1" fill="#7d7d7d"/><rect x="13" y="550" width="1" height="1" fill="#7d7d7d"/><rect x="13" y="552" width="1" height="1" fill="#7d7d7d"/><rect x="13" y="554" width="1" height="1" fill="#7d7d7d"/><rect x="13" y="556" width="1" height="1" fill="#7d7d7d"/><rect x="13" y="558" width="1" height="1" fill="#7d7d7d"/><rect x="13" y="560" width="1" height="1" fill="#7d7d7d"/><rect x="13" y="562" width="1" height="1" fill="#7d7d7d"/><rect x="13" y="564" width="1" height="1" fill="#7d7d7d"/><rect x="13" y="566" width="1" height="1" fill="#7d7d7d"/><rect x="13" y="568" width="1" height="1" fill="#7d7d7d"/><rect x="13" y="570" width="1" height="1" fill="#7d7d7d"/><rect x="13" y="572" width="1" height="1" fill="#7d7d7d"/><rect x="13" y="574" width="1" height="1" fill="#7d7d7d"/><rect x="13" y="576" width="1" height="1" fill="#7d7d7d"/><rect x="13" y="578" width="1" height="1" fill="#7d7d7d"/><rect x="13" y="580" width="1" height="1" fill="#7d7d7d"/><rect x="13" y="582" width="1" height="1" fill="#7d7d7d"/><rect x="13" y="584" width="1" height="1" fill="#7d7d7d"/><rect x="13" y="586" width="1" height="1" fill="#7d7d7d"/><rect x="13" y="588" width="1" height="1" fill="#7d7d7d"/><rect x="13" y="590" width="1" height="1" fill="#7d7d7d"/><rect x="13" y="592" width="1" height="1" fill="#7d7d7d"/><rect x="13" y="594" width="1" height="1" fill="#7d7d7d"/><rect x="13" y="596" width="1" height="1" fill="#7d7d7d"/><rect x="13" y="598" width="1" height="1" fill="#7d7d7d"/><rect x="13" y="600" width="1" height="1" fill="#7d7d7d"/><rect x="13" y="602" width="1" height="1" fill="#7d7d7d"/><rect x="13" y="604" width="1" height="1" fill="#7d7d7d"/><rect x="13" y="606" width="1" height="1" fill="#7d7d7d"/><rect x="13" y="608" width="1" height="1" fill="#7d7d7d"/><rect x="13" y="610" width="1" height="1" fill="#7d7d7d"/><rect x="13" y="612" width="1" height="1" fill="#7d7d7d"/><rect x="13" y="614" width="1" height="1" fill="#7d7d7d"/><rect x="13" y="616" width="1" height="1" fill="#7d7d7d"/><rect x="13" y="618" width="1" height="1" fill="#7d7d7d"/><rect x="32" y="174" width="1" height="1" fill="#7d7d7d"/><rect x="32" y="176" width="1" height="1" fill="#7d7d7d"/><rect x="32" y="178" width="1" height="1" fill="#7d7d7d"/><rect x="32" y="180" width="1" height="1" fill="#7d7d7d"/><rect x="32" y="182" width="1" height="1" fill="#7d7d7d"/><rect x="32" y="184" width="1" height="1" fill="#7d7d7d"/><rect x="32" y="186" width="1" height="1" fill="#7d7d7d"/><rect x="32" y="188" width="1" height="1" fill="#7d7d7d"/><rect x="32" y="190" width="1" height="1" fill="#7d7d7d"/><rect x="32" y="192" width="1" height="1" fill="#7d7d7d"/><rect x="32" y="194" width="1" height="1" fill="#7d7d7d"/><rect x="32" y="196" width="1" height="1" fill="#7d7d7d"/><rect x="32" y="198" width="1" height="1" fill="#7d7d7d"/><rect x="32" y="200" width="1" height="1" fill="#7d7d7d"/><rect x="32" y="202" width="1" height="1" fill="#7d7d7d"/><rect x="32" y="204" width="1" height="1" fill="#7d7d7d"/><rect x="32" y="206" width="1" height="1" fill="#7d7d7d"/><rect x="32" y="208" width="1" height="1" fill="#7d7d7d"/><rect x="32" y="210" width="1" height="1" fill="#7d7d7d"/><rect x="32" y="212" width="1" height="1" fill="#7d7d7d"/><rect x="32" y="214" width="1" height="1" fill="#7d7d7d"/><rect x="32" y="216" width="1" height="1" fill="#7d7d7d"/><rect x="32" y="218" width="1" height="1" fill="#7d7d7d"/><rect x="32" y="220" width="1" height="1" fill="#7d7d7d"/><rect x="32" y="222" width="1" height="1" fill="#7d7d7d"/><rect x="32" y="224" width="1" height="1" fill="#7d7d7d"/><rect x="32" y="226" width="1" height="1" fill="#7d7d7d"/><rect x="32" y="228" width="1" height="1" fill="#7d7d7d"/><rect x="32" y="230" width="1" height="1" fill="#7d7d7d"/><rect x="32" y="232" width="1" height="1" fill="#7d7d7d"/><rect x="32" y="234" width="1" height="1" fill="#7d7d7d"/><rect x="32" y="236" width="1" height="1" fill="#7d7d7d"/><rect x="32" y="238" width="1" height="1" fill="#7d7d7d"/><rect x="32" y="240" width="1" height="1" fill="#7d7d7d"/><rect x="32" y="242" width="1" height="1" fill="#7d7d7d"/><rect x="32" y="244" width="1" height="1" fill="#7d7d7d"/><rect x="32" y="246" width="1" height="1" fill="#7d7d7d"/><rect x="32" y="248" width="1" height="1" fill="#7d7d7d"/><rect x="32" y="250" width="1" height="1" fill="#7d7d7d"/><rect x="32" y="252" width="1" height="1" fill="#7d7d7d"/><rect x="32" y="254" width="1" height="1" fill="#7d7d7d"/><rect x="32" y="256" width="1" height="1" fill="#7d7d7d"/><rect x="32" y="258" width="1" height="1" fill="#7d7d7d"/><rect x="32" y="260" width="1" height="1" fill="#7d7d7d"/><rect x="32" y="262" width="1" height="1" fill="#7d7d7d"/><rect x="32" y="264" width="1" height="1" fill="#7d7d7d"/><rect x="32" y="266" width="1" height="1" fill="#7d7d7d"/><rect x="32" y="268" width="1" height="1" fill="#7d7d7d"/><rect x="32" y="270" width="1" height="1" fill="#7d7d7d"/><rect x="32" y="272" width="1" height="1" fill="#7d7d7d"/><rect x="32" y="274" width="1" height="1" fill="#7d7d7d"/><rect x="32" y="276" width="1" height="1" fill="#7d7d7d"/><rect x="32" y="278" width="1" height="1" fill="#7d7d7d"/><rect x="32" y="280" width="1" height="1" fill="#7d7d7d"/><rect x="32" y="282" width="1" height="1" fill="#7d7d7d"/><rect x="32" y="284" width="1" height="1" fill="#7d7d7d"/><rect x="32" y="286" width="1" height="1" fill="#7d7d7d"/><rect x="32" y="288" width="1" height="1" fill="#7d7d7d"/><rect x="32" y="290" width="1" height="1" fill="#7d7d7d"/><rect x="32" y="292" width="1" height="1" fill="#7d7d7d"/><rect x="32" y="294" width="1" height="1" fill="#7d7d7d"/><rect x="32" y="296" width="1" height="1" fill="#7d7d7d"/><rect x="32" y="298" width="1" height="1" fill="#7d7d7d"/><rect x="32" y="300" width="1" height="1" fill="#7d7d7d"/><rect x="32" y="302" width="1" height="1" fill="#7d7d7d"/><rect x="32" y="304" width="1" height="1" fill="#7d7d7d"/><rect x="32" y="306" width="1" height="1" fill="#7d7d7d"/><rect x="32" y="308" width="1" height="1" fill="#7d7d7d"/><rect x="32" y="310" width="1" height="1" fill="#7d7d7d"/><rect x="32" y="312" width="1" height="1" fill="#7d7d7d"/><rect x="32" y="314" width="1" height="1" fill="#7d7d7d"/><rect x="32" y="316" width="1" height="1" fill="#7d7d7d"/><rect x="32" y="318" width="1" height="1" fill="#7d7d7d"/><rect x="32" y="320" width="1" height="1" fill="#7d7d7d"/><rect x="32" y="322" width="1" height="1" fill="#7d7d7d"/><rect x="32" y="324" width="1" height="1" fill="#7d7d7d"/><rect x="32" y="326" width="1" height="1" fill="#7d7d7d"/><rect x="32" y="328" width="1" height="1" fill="#7d7d7d"/><rect x="32" y="330" width="1" height="1" fill="#7d7d7d"/><rect x="32" y="332" width="1" height="1" fill="#7d7d7d"/><rect x="32" y="334" width="1" height="1" fill="#7d7d7d"/><rect x="32" y="336" width="1" height="1" fill="#7d7d7d"/><rect x="32" y="338" width="1" height="1" fill="#7d7d7d"/><rect x="32" y="340" width="1" height="1" fill="#7d7d7d"/><rect x="32" y="342" width="1" height="1" fill="#7d7d7d"/><rect x="32" y="344" width="1" height="1" fill="#7d7d7d"/><rect x="32" y="346" width="1" height="1" fill="#7d7d7d"/><rect x="32" y="348" width="1" height="1" fill="#7d7d7d"/><rect x="32" y="350" width="1" height="1" fill="#7d7d7d"/><rect x="32" y="352" width="1" height="1" fill="#7d7d7d"/><rect x="32" y="354" width="1" height="1" fill="#7d7d7d"/><rect x="32" y="356" width="1" height="1" fill="#7d7d7d"/><rect x="32" y="358" width="1" height="1" fill="#7d7d7d"/><rect x="32" y="360" width="1" height="1" fill="#7d7d7d"/><rect x="32" y="362" width="1" height="1" fill="#7d7d7d"/><rect x="32" y="364" width="1" height="1" fill="#7d7d7d"/><rect x="32" y="366" width="1" height="1" fill="#7d7d7d"/><rect x="32" y="368" width="1" height="1" fill="#7d7d7d"/><rect x="32" y="370" width="1" height="1" fill="#7d7d7d"/><rect x="32" y="372" width="1" height="1" fill="#7d7d7d"/><rect x="32" y="374" width="1" height="1" fill="#7d7d7d"/><rect x="32" y="376" width="1" height="1" fill="#7d7d7d"/><rect x="32" y="378" width="1" height="1" fill="#7d7d7d"/><rect x="32" y="380" width="1" height="1" fill="#7d7d7d"/><rect x="32" y="382" width="1" height="1" fill="#7d7d7d"/><rect x="32" y="384" width="1" height="1" fill="#7d7d7d"/><rect x="32" y="386" width="1" height="1" fill="#7d7d7d"/><rect x="32" y="388" width="1" height="1" fill="#7d7d7d"/><rect x="32" y="390" width="1" height="1" fill="#7d7d7d"/><rect x="32" y="392" width="1" height="1" fill="#7d7d7d"/><rect x="32" y="394" width="1" height="1" fill="#7d7d7d"/><rect x="32" y="396" width="1" height="1" fill="#7d7d7d"/><rect x="32" y="398" width="1" height="1" fill="#7d7d7d"/><rect x="32" y="434" width="1" height="1" fill="#7d7d7d"/><rect x="32" y="436" width="1" height="1" fill="#7d7d7d"/><rect x="32" y="438" width="1" height="1" fill="#7d7d7d"/><rect x="32" y="440" width="1" height="1" fill="#7d7d7d"/><rect x="32" y="442" width="1" height="1" fill="#7d7d7d"/><rect x="32" y="444" width="1" height="1" fill="#7d7d7d"/><rect x="32" y="446" width="1" height="1" fill="#7d7d7d"/><rect x="32" y="448" width="1" height="1" fill="#7d7d7d"/><rect x="32" y="450" width="1" height="1" fill="#7d7d7d"/><rect x="32" y="452" width="1" height="1" fill="#7d7d7d"/><rect x="32" y="454" width="1" height="1" fill="#7d7d7d"/><rect x="32" y="456" width="1" height="1" fill="#7d7d7d"/><rect x="32" y="458" width="1" height="1" fill="#7d7d7d"/><rect x="32" y="460" width="1" height="1" fill="#7d7d7d"/><rect x="32" y="462" width="1" height="1" fill="#7d7d7d"/><rect x="32" y="464" width="1" height="1" fill="#7d7d7d"/><rect x="32" y="466" width="1" height="1" fill="#7d7d7d"/><rect x="32" y="468" width="1" height="1" fill="#7d7d7d"/><rect x="32" y="470" width="1" height="1" fill="#7d7d7d"/><rect x="32" y="472" width="1" height="1" fill="#7d7d7d"/><rect x="32" y="474" width="1" height="1" fill="#7d7d7d"/><rect x="32" y="476" width="1" height="1" fill="#7d7d7d"/><rect x="32" y="478" width="1" height="1" fill="#7d7d7d"/><rect x="32" y="480" width="1" height="1" fill="#7d7d7d"/><rect x="32" y="482" width="1" height="1" fill="#7d7d7d"/><rect x="32" y="484" width="1" height="1" fill="#7d7d7d"/><rect x="32" y="514" width="1" height="1" fill="#7d7d7d"/><rect x="32" y="516" width="1" height="1" fill="#7d7d7d"/><rect x="32" y="518" width="1" height="1" fill="#7d7d7d"/><rect x="32" y="520" width="1" height="1" fill="#7d7d7d"/><rect x="32" y="522" width="1" height="1" fill="#7d7d7d"/><rect x="32" y="524" width="1" height="1" fill="#7d7d7d"/><rect x="32" y="526" width="1" height="1" fill="#7d7d7d"/><rect x="32" y="528" width="1" height="1" fill="#7d7d7d"/><rect x="32" y="530" width="1" height="1" fill="#7d7d7d"/><rect x="32" y="532" width="1" height="1" fill="#7d7d7d"/><rect x="32" y="534" width="1" height="1" fill="#7d7d7d"/><rect x="32" y="536" width="1" height="1" fill="#7d7d7d"/><rect x="32" y="538" width="1" height="1" fill="#7d7d7d"/><rect x="32" y="540" width="1" height="1" fill="#7d7d7d"/><rect x="32" y="542" width="1" height="1" fill="#7d7d7d"/><rect x="32" y="544" width="1" height="1" fill="#7d7d7d"/><rect x="32" y="546" width="1" height="1" fill="#7d7d7d"/><rect x="32" y="548" width="1" height="1" fill="#7d7d7d"/><rect x="32" y="550" width="1" height="1" fill="#7d7d7d"/><rect x="32" y="552" width="1" height="1" fill="#7d7d7d"/><rect x="32" y="554" width="1" height="1" fill="#7d7d7d"/><rect x="32" y="556" width="1" height="1" fill="#7d7d7d"/><rect x="32" y="558" width="1" height="1" fill="#7d7d7d"/><rect x="32" y="560" width="1" height="1" fill="#7d7d7d"/><rect x="32" y="562" width="1" height="1" fill="#7d7d7d"/><rect x="32" y="564" width="1" height="1" fill="#7d7d7d"/><rect x="32" y="566" width="1" height="1" fill="#7d7d7d"/><rect x="32" y="568" width="1" height="1" fill="#7d7d7d"/><rect x="32" y="570" width="1" height="1" fill="#7d7d7d"/><rect x="32" y="572" width="1" height="1" fill="#7d7d7d"/><rect x="32" y="574" width="1" height="1" fill="#7d7d7d"/><rect x="32" y="576" width="1" height="1" fill="#7d7d7d"/><rect x="32" y="578" width="1" height="1" fill="#7d7d7d"/><rect x="32" y="580" width="1" height="1" fill="#7d7d7d"/><rect x="32" y="582" width="1" height="1" fill="#7d7d7d"/><rect x="32" y="584" width="1" height="1" fill="#7d7d7d"/><rect x="32" y="586" width="1" height="1" fill="#7d7d7d"/><rect x="32" y="588" width="1" height="1" fill="#7d7d7d"/><rect x="32" y="590" width="1" height="1" fill="#7d7d7d"/><rect x="32" y="592" width="1" height="1" fill="#7d7d7d"/><rect x="32" y="594" width="1" height="1" fill="#7d7d7d"/><rect x="32" y="596" width="1" height="1" fill="#7d7d7d"/><rect x="32" y="598" width="1" height="1" fill="#7d7d7d"/><rect x="32" y="600" width="1" height="1" fill="#7d7d7d"/><rect x="32" y="602" width="1" height="1" fill="#7d7d7d"/><rect x="32" y="604" width="1" height="1" fill="#7d7d7d"/><rect x="32" y="634" width="1" height="1" fill="#7d7d7d"/><rect x="32" y="636" width="1" height="1" fill="#7d7d7d"/><rect x="32" y="638" width="1" height="1" fill="#7d7d7d"/><rect x="32" y="640" width="1" height="1" fill="#7d7d7d"/><rect x="32" y="642" width="1" height="1" fill="#7d7d7d"/><rect x="32" y="644" width="1" height="1" fill="#7d7d7d"/><rect x="32" y="646" width="1" height="1" fill="#7d7d7d"/><rect x="32" y="648" width="1" height="1" fill="#7d7d7d"/><rect x="32" y="650" width="1" height="1" fill="#7d7d7d"/><rect x="32" y="652" width="1" height="1" fill="#7d7d7d"/><rect x="32" y="654" width="1" height="1" fill="#7d7d7d"/><rect x="32" y="656" width="1" height="1" fill="#7d7d7d"/><rect x="32" y="658" width="1" height="1" fill="#7d7d7d"/><rect x="32" y="660" width="1" height="1" fill="#7d7d7d"/><rect x="32" y="662" width="1" height="1" fill="#7d7d7d"/><rect x="32" y="664" width="1" height="1" fill="#7d7d7d"/><rect x="32" y="666" width="1" height="1" fill="#7d7d7d"/><rect x="32" y="668" width="1" height="1" fill="#7d7d7d"/><rect x="32" y="670" width="1" height="1" fill="#7d7d7d"/><rect x="32" y="672" width="1" height="1" fill="#7d7d7d"/><rect x="32" y="674" width="1" height="1" fill="#7d7d7d"/><rect x="32" y="676" width="1" height="1" fill="#7d7d7d"/><rect x="32" y="678" width="1" height="1" fill="#7d7d7d"/><rect x="32" y="680" width="1" height="1" fill="#7d7d7d"/><rect x="32" y="682" width="1" height="1" fill="#7d7d7d"/><rect x="32" y="684" width="1" height="1" fill="#7d7d7d"/><rect x="32" y="686" width="1" height="1" fill="#7d7d7d"/><rect x="32" y="688" width="1" height="1" fill="#7d7d7d"/><rect x="32" y="690" width="1" height="1" fill="#7d7d7d"/><rect x="32" y="692" width="1" height="1" fill="#7d7d7d"/><rect x="32" y="694" width="1" height="1" fill="#7d7d7d"/><rect x="32" y="696" width="1" height="1" fill="#7d7d7d"/><rect x="32" y="698" width="1" height="1" fill="#7d7d7d"/><rect x="32" y="700" width="1" height="1" fill="#7d7d7d"/><rect x="32" y="702" width="1" height="1" fill="#7d7d7d"/><rect x="32" y="704" width="1" height="1" fill="#7d7d7d"/><rect x="32" y="706" width="1" height="1" fill="#7d7d7d"/><rect x="32" y="708" width="1" height="1" fill="#7d7d7d"/><rect x="32" y="710" width="1" height="1" fill="#7d7d7d"/><rect x="32" y="712" width="1" height="1" fill="#7d7d7d"/><rect x="32" y="714" width="1" height="1" fill="#7d7d7d"/><rect x="32" y="716" width="1" height="1" fill="#7d7d7d"/><rect x="32" y="718" width="1" height="1" fill="#7d7d7d"/><rect x="32" y="720" width="1" height="1" fill="#7d7d7d"/><rect x="32" y="722" width="1" height="1" fill="#7d7d7d"/><rect x="32" y="724" width="1" height="1" fill="#7d7d7d"/><rect x="32" y="726" width="1" height="1" fill="#7d7d7d"/><rect x="32" y="728" width="1" height="1" fill="#7d7d7d"/><rect x="32" y="730" width="1" height="1" fill="#7d7d7d"/><rect x="32" y="732" width="1" height="1" fill="#7d7d7d"/><rect x="32" y="734" width="1" height="1" fill="#7d7d7d"/><rect x="32" y="736" width="1" height="1" fill="#7d7d7d"/><rect x="32" y="738" width="1" height="1" fill="#7d7d7d"/><rect x="32" y="740" width="1" height="1" fill="#7d7d7d"/><rect x="32" y="742" width="1" height="1" fill="#7d7d7d"/><rect x="32" y="744" width="1" height="1" fill="#7d7d7d"/><rect x="32" y="746" width="1" height="1" fill="#7d7d7d"/><rect x="32" y="748" width="1" height="1" fill="#7d7d7d"/><rect x="32" y="750" width="1" height="1" fill="#7d7d7d"/><rect x="32" y="752" width="1" height="1" fill="#7d7d7d"/><rect x="32" y="754" width="1" height="1" fill="#7d7d7d"/><rect x="32" y="756" width="1" height="1" fill="#7d7d7d"/><rect x="32" y="758" width="1" height="1" fill="#7d7d7d"/><rect x="32" y="760" width="1" height="1" fill="#7d7d7d"/><rect x="32" y="762" width="1" height="1" fill="#7d7d7d"/><rect x="32" y="764" width="1" height="1" fill="#7d7d7d"/><rect x="32" y="766" width="1" height="1" fill="#7d7d7d"/><rect x="32" y="768" width="1" height="1" fill="#7d7d7d"/><rect x="32" y="770" width="1" height="1" fill="#7d7d7d"/><rect x="32" y="772" width="1" height="1" fill="#7d7d7d"/><rect x="32" y="774" width="1" height="1" fill="#7d7d7d"/><rect x="32" y="776" width="1" height="1" fill="#7d7d7d"/><rect x="32" y="778" width="1" height="1" fill="#7d7d7d"/><rect x="32" y="780" width="1" height="1" fill="#7d7d7d"/><rect x="32" y="782" width="1" height="1" fill="#7d7d7d"/><rect x="32" y="784" width="1" height="1" fill="#7d7d7d"/><rect x="32" y="786" width="1" height="1" fill="#7d7d7d"/><rect x="32" y="788" width="1" height="1" fill="#7d7d7d"/><rect x="32" y="790" width="1" height="1" fill="#7d7d7d"/><rect x="32" y="792" width="1" height="1" fill="#7d7d7d"/><rect x="32" y="794" width="1" height="1" fill="#7d7d7d"/><rect x="32" y="796" width="1" height="1" fill="#7d7d7d"/><rect x="32" y="798" width="1" height="1" fill="#7d7d7d"/><rect x="32" y="800" width="1" height="1" fill="#7d7d7d"/><rect x="32" y="802" width="1" height="1" fill="#7d7d7d"/><rect x="32" y="804" width="1" height="1" fill="#7d7d7d"/><rect x="13" y="144" width="1" height="1" fill="#7d7d7d"/><rect x="15" y="144" width="1" height="1" fill="#7d7d7d"/><rect x="17" y="144" width="1" height="1" fill="#7d7d7d"/><rect x="19" y="144" width="1" height="1" fill="#7d7d7d"/><rect x="21" y="144" width="1" height="1" fill="#7d7d7d"/><rect x="23" y="144" width="1" height="1" fill="#7d7d7d"/><rect x="24" y="136" width="16" height="15" fill="#ffffff"/><path d="M25.5 148 V139.5 L26.5 138.5 H28.5 L29.5 139.5 H34.5 V142" fill="url(#fdy)" stroke="#707070" stroke-width="1"/><path d="M25 148.5 L28 142.5 H39.5 L36 148.5 Z" fill="#808000" stroke="#606060" stroke-width="0.8"/><rect x="19" y="164" width="1" height="1" fill="#7d7d7d"/><rect x="21" y="164" width="1" height="1" fill="#7d7d7d"/><rect x="23" y="164" width="1" height="1" fill="#7d7d7d"/><rect x="9.5" y="160.5" width="8" height="8" rx="1.5" fill="url(#expg)" stroke="#8e8f8f" stroke-width="1" shape-rendering="auto"/><rect x="11" y="164" width="5" height="1" fill="#3d5f9c"/><rect x="24" y="156" width="16" height="15" fill="#ffffff"/><path d="M29 163.5 L32 167 L35.5 159.5" fill="none" stroke="#ff0000" stroke-width="1.9" shape-rendering="auto"/><rect x="33" y="184" width="1" height="1" fill="#7d7d7d"/><rect x="35" y="184" width="1" height="1" fill="#7d7d7d"/><rect x="37" y="184" width="1" height="1" fill="#7d7d7d"/><rect x="39" y="184" width="1" height="1" fill="#7d7d7d"/><rect x="41" y="184" width="1" height="1" fill="#7d7d7d"/><rect x="43" y="176" width="16" height="15" fill="#ffffff"/><path d="M45 180h2v6h-2z M48 180h5l1 1v4l-1 1h-5z M55 182h4v1h-4z M55 184h4v1h-4z" fill="#008000"/><rect x="50" y="181" width="2" height="4" fill="#fff"/><rect x="33" y="204" width="1" height="1" fill="#7d7d7d"/><rect x="35" y="204" width="1" height="1" fill="#7d7d7d"/><rect x="37" y="204" width="1" height="1" fill="#7d7d7d"/><rect x="39" y="204" width="1" height="1" fill="#7d7d7d"/><rect x="41" y="204" width="1" height="1" fill="#7d7d7d"/><rect x="43" y="196" width="16" height="15" fill="#ffffff"/><path d="M45 200h2v6h-2z M48 200h5l1 1v4l-1 1h-5z M55 202h4v1h-4z M55 204h4v1h-4z" fill="#008000"/><rect x="50" y="201" width="2" height="4" fill="#fff"/><rect x="33" y="224" width="1" height="1" fill="#7d7d7d"/><rect x="35" y="224" width="1" height="1" fill="#7d7d7d"/><rect x="37" y="224" width="1" height="1" fill="#7d7d7d"/><rect x="39" y="224" width="1" height="1" fill="#7d7d7d"/><rect x="41" y="224" width="1" height="1" fill="#7d7d7d"/><rect x="43" y="216" width="16" height="15" fill="#ffffff"/><path d="M45 220h2v6h-2z M48 220h5l1 1v4l-1 1h-5z M55 222h4v1h-4z M55 224h4v1h-4z" fill="#008000"/><rect x="50" y="221" width="2" height="4" fill="#fff"/><rect x="33" y="244" width="1" height="1" fill="#7d7d7d"/><rect x="35" y="244" width="1" height="1" fill="#7d7d7d"/><rect x="37" y="244" width="1" height="1" fill="#7d7d7d"/><rect x="39" y="244" width="1" height="1" fill="#7d7d7d"/><rect x="41" y="244" width="1" height="1" fill="#7d7d7d"/><rect x="43" y="236" width="16" height="15" fill="#ffffff"/><path d="M45 240h2v6h-2z M48 240h5l1 1v4l-1 1h-5z M55 242h4v1h-4z M55 244h4v1h-4z" fill="#008000"/><rect x="50" y="241" width="2" height="4" fill="#fff"/><rect x="33" y="264" width="1" height="1" fill="#7d7d7d"/><rect x="35" y="264" width="1" height="1" fill="#7d7d7d"/><rect x="37" y="264" width="1" height="1" fill="#7d7d7d"/><rect x="39" y="264" width="1" height="1" fill="#7d7d7d"/><rect x="41" y="264" width="1" height="1" fill="#7d7d7d"/><rect x="43" y="256" width="16" height="15" fill="#ffffff"/><path d="M45 260h2v6h-2z M48 260h5l1 1v4l-1 1h-5z M55 262h4v1h-4z M55 264h4v1h-4z" fill="#008000"/><rect x="50" y="261" width="2" height="4" fill="#fff"/><rect x="33" y="284" width="1" height="1" fill="#7d7d7d"/><rect x="35" y="284" width="1" height="1" fill="#7d7d7d"/><rect x="37" y="284" width="1" height="1" fill="#7d7d7d"/><rect x="39" y="284" width="1" height="1" fill="#7d7d7d"/><rect x="41" y="284" width="1" height="1" fill="#7d7d7d"/><rect x="43" y="276" width="16" height="15" fill="#ffffff"/><path d="M45 280h2v6h-2z M48 280h5l1 1v4l-1 1h-5z M55 282h4v1h-4z M55 284h4v1h-4z" fill="#008000"/><rect x="50" y="281" width="2" height="4" fill="#fff"/><rect x="33" y="304" width="1" height="1" fill="#7d7d7d"/><rect x="35" y="304" width="1" height="1" fill="#7d7d7d"/><rect x="37" y="304" width="1" height="1" fill="#7d7d7d"/><rect x="39" y="304" width="1" height="1" fill="#7d7d7d"/><rect x="41" y="304" width="1" height="1" fill="#7d7d7d"/><rect x="43" y="296" width="16" height="15" fill="#ffffff"/><path d="M45 300h2v6h-2z M48 300h5l1 1v4l-1 1h-5z M55 302h4v1h-4z M55 304h4v1h-4z" fill="#008000"/><rect x="50" y="301" width="2" height="4" fill="#fff"/><rect x="33" y="324" width="1" height="1" fill="#7d7d7d"/><rect x="35" y="324" width="1" height="1" fill="#7d7d7d"/><rect x="37" y="324" width="1" height="1" fill="#7d7d7d"/><rect x="39" y="324" width="1" height="1" fill="#7d7d7d"/><rect x="41" y="324" width="1" height="1" fill="#7d7d7d"/><rect x="43" y="316" width="16" height="15" fill="#ffffff"/><path d="M45 320h2v6h-2z M48 320h5l1 1v4l-1 1h-5z M55 322h4v1h-4z M55 324h4v1h-4z" fill="#008000"/><rect x="50" y="321" width="2" height="4" fill="#fff"/><rect x="33" y="344" width="1" height="1" fill="#7d7d7d"/><rect x="35" y="344" width="1" height="1" fill="#7d7d7d"/><rect x="37" y="344" width="1" height="1" fill="#7d7d7d"/><rect x="39" y="344" width="1" height="1" fill="#7d7d7d"/><rect x="41" y="344" width="1" height="1" fill="#7d7d7d"/><rect x="43" y="336" width="16" height="15" fill="#ffffff"/><path d="M45 340h2v6h-2z M48 340h5l1 1v4l-1 1h-5z M55 342h4v1h-4z M55 344h4v1h-4z" fill="#008000"/><rect x="50" y="341" width="2" height="4" fill="#fff"/><rect x="33" y="364" width="1" height="1" fill="#7d7d7d"/><rect x="35" y="364" width="1" height="1" fill="#7d7d7d"/><rect x="37" y="364" width="1" height="1" fill="#7d7d7d"/><rect x="39" y="364" width="1" height="1" fill="#7d7d7d"/><rect x="41" y="364" width="1" height="1" fill="#7d7d7d"/><rect x="43" y="356" width="16" height="15" fill="#ffffff"/><path d="M45 360h2v6h-2z M48 360h5l1 1v4l-1 1h-5z M55 362h4v1h-4z M55 364h4v1h-4z" fill="#008000"/><rect x="50" y="361" width="2" height="4" fill="#fff"/><rect x="33" y="384" width="1" height="1" fill="#7d7d7d"/><rect x="35" y="384" width="1" height="1" fill="#7d7d7d"/><rect x="37" y="384" width="1" height="1" fill="#7d7d7d"/><rect x="39" y="384" width="1" height="1" fill="#7d7d7d"/><rect x="41" y="384" width="1" height="1" fill="#7d7d7d"/><rect x="43" y="376" width="16" height="15" fill="#ffffff"/><path d="M45 380h2v6h-2z M48 380h5l1 1v4l-1 1h-5z M55 382h4v1h-4z M55 384h4v1h-4z" fill="#008000"/><rect x="50" y="381" width="2" height="4" fill="#fff"/><rect x="37" y="404" width="1" height="1" fill="#7d7d7d"/><rect x="39" y="404" width="1" height="1" fill="#7d7d7d"/><rect x="41" y="404" width="1" height="1" fill="#7d7d7d"/><rect x="28.5" y="400.5" width="8" height="8" rx="1.5" fill="url(#expg)" stroke="#8e8f8f" stroke-width="1" shape-rendering="auto"/><rect x="30" y="404" width="5" height="1" fill="#3d5f9c"/><rect x="32" y="402" width="1" height="5" fill="#3d5f9c"/><rect x="43" y="396" width="16" height="15" fill="#ffffff"/><path d="M45 400h2v6h-2z M48 400h5l1 1v4l-1 1h-5z M55 402h4v1h-4z M55 404h4v1h-4z" fill="#008000"/><rect x="50" y="401" width="2" height="4" fill="#fff"/><rect x="19" y="424" width="1" height="1" fill="#7d7d7d"/><rect x="21" y="424" width="1" height="1" fill="#7d7d7d"/><rect x="23" y="424" width="1" height="1" fill="#7d7d7d"/><rect x="9.5" y="420.5" width="8" height="8" rx="1.5" fill="url(#expg)" stroke="#8e8f8f" stroke-width="1" shape-rendering="auto"/><rect x="11" y="424" width="5" height="1" fill="#3d5f9c"/><rect x="24" y="416" width="16" height="15" fill="#ffffff"/><path d="M29 423.5 L32 427 L35.5 419.5" fill="none" stroke="#ff0000" stroke-width="1.9" shape-rendering="auto"/><rect x="33" y="444" width="1" height="1" fill="#7d7d7d"/><rect x="35" y="444" width="1" height="1" fill="#7d7d7d"/><rect x="37" y="444" width="1" height="1" fill="#7d7d7d"/><rect x="39" y="444" width="1" height="1" fill="#7d7d7d"/><rect x="41" y="444" width="1" height="1" fill="#7d7d7d"/><rect x="43" y="436" width="16" height="15" fill="#ffffff"/><path d="M45 440h2v6h-2z M48 440h5l1 1v4l-1 1h-5z M55 442h4v1h-4z M55 444h4v1h-4z" fill="#008000"/><rect x="50" y="441" width="2" height="4" fill="#fff"/><rect x="33" y="464" width="1" height="1" fill="#7d7d7d"/><rect x="35" y="464" width="1" height="1" fill="#7d7d7d"/><rect x="37" y="464" width="1" height="1" fill="#7d7d7d"/><rect x="39" y="464" width="1" height="1" fill="#7d7d7d"/><rect x="41" y="464" width="1" height="1" fill="#7d7d7d"/><rect x="43" y="456" width="16" height="15" fill="#ffffff"/><path d="M45 460h2v6h-2z M48 460h5l1 1v4l-1 1h-5z M55 462h4v1h-4z M55 464h4v1h-4z" fill="#008000"/><rect x="50" y="461" width="2" height="4" fill="#fff"/><rect x="33" y="484" width="1" height="1" fill="#7d7d7d"/><rect x="35" y="484" width="1" height="1" fill="#7d7d7d"/><rect x="37" y="484" width="1" height="1" fill="#7d7d7d"/><rect x="39" y="484" width="1" height="1" fill="#7d7d7d"/><rect x="41" y="484" width="1" height="1" fill="#7d7d7d"/><rect x="43" y="476" width="16" height="15" fill="#ffffff"/><path d="M45 480h2v6h-2z M48 480h5l1 1v4l-1 1h-5z M55 482h4v1h-4z M55 484h4v1h-4z" fill="#008000"/><rect x="50" y="481" width="2" height="4" fill="#fff"/><rect x="19" y="504" width="1" height="1" fill="#7d7d7d"/><rect x="21" y="504" width="1" height="1" fill="#7d7d7d"/><rect x="23" y="504" width="1" height="1" fill="#7d7d7d"/><rect x="9.5" y="500.5" width="8" height="8" rx="1.5" fill="url(#expg)" stroke="#8e8f8f" stroke-width="1" shape-rendering="auto"/><rect x="11" y="504" width="5" height="1" fill="#3d5f9c"/><rect x="24" y="496" width="16" height="15" fill="#ffffff"/><path d="M29 503.5 L32 507 L35.5 499.5" fill="none" stroke="#ff0000" stroke-width="1.9" shape-rendering="auto"/><rect x="33" y="524" width="1" height="1" fill="#7d7d7d"/><rect x="35" y="524" width="1" height="1" fill="#7d7d7d"/><rect x="37" y="524" width="1" height="1" fill="#7d7d7d"/><rect x="39" y="524" width="1" height="1" fill="#7d7d7d"/><rect x="41" y="524" width="1" height="1" fill="#7d7d7d"/><rect x="43" y="516" width="16" height="15" fill="#ffffff"/><path d="M45 520h2v6h-2z M48 520h5l1 1v4l-1 1h-5z M55 522h4v1h-4z M55 524h4v1h-4z" fill="#008000"/><rect x="50" y="521" width="2" height="4" fill="#fff"/><rect x="33" y="544" width="1" height="1" fill="#7d7d7d"/><rect x="35" y="544" width="1" height="1" fill="#7d7d7d"/><rect x="37" y="544" width="1" height="1" fill="#7d7d7d"/><rect x="39" y="544" width="1" height="1" fill="#7d7d7d"/><rect x="41" y="544" width="1" height="1" fill="#7d7d7d"/><rect x="43" y="536" width="16" height="15" fill="#ffffff"/><path d="M45 540h2v6h-2z M48 540h5l1 1v4l-1 1h-5z M55 542h4v1h-4z M55 544h4v1h-4z" fill="#008000"/><rect x="50" y="541" width="2" height="4" fill="#fff"/><rect x="33" y="564" width="1" height="1" fill="#7d7d7d"/><rect x="35" y="564" width="1" height="1" fill="#7d7d7d"/><rect x="37" y="564" width="1" height="1" fill="#7d7d7d"/><rect x="39" y="564" width="1" height="1" fill="#7d7d7d"/><rect x="41" y="564" width="1" height="1" fill="#7d7d7d"/><rect x="43" y="556" width="16" height="15" fill="#ffffff"/><path d="M45 560h2v6h-2z M48 560h5l1 1v4l-1 1h-5z M55 562h4v1h-4z M55 564h4v1h-4z" fill="#008000"/><rect x="50" y="561" width="2" height="4" fill="#fff"/><rect x="33" y="584" width="1" height="1" fill="#7d7d7d"/><rect x="35" y="584" width="1" height="1" fill="#7d7d7d"/><rect x="37" y="584" width="1" height="1" fill="#7d7d7d"/><rect x="39" y="584" width="1" height="1" fill="#7d7d7d"/><rect x="41" y="584" width="1" height="1" fill="#7d7d7d"/><rect x="43" y="576" width="16" height="15" fill="#ffffff"/><path d="M45 580h2v6h-2z M48 580h5l1 1v4l-1 1h-5z M55 582h4v1h-4z M55 584h4v1h-4z" fill="#008000"/><rect x="50" y="581" width="2" height="4" fill="#fff"/><rect x="33" y="604" width="1" height="1" fill="#7d7d7d"/><rect x="35" y="604" width="1" height="1" fill="#7d7d7d"/><rect x="37" y="604" width="1" height="1" fill="#7d7d7d"/><rect x="39" y="604" width="1" height="1" fill="#7d7d7d"/><rect x="41" y="604" width="1" height="1" fill="#7d7d7d"/><rect x="43" y="596" width="16" height="15" fill="#ffffff"/><path d="M45 600h2v6h-2z M48 600h5l1 1v4l-1 1h-5z M55 602h4v1h-4z M55 604h4v1h-4z" fill="#008000"/><rect x="50" y="601" width="2" height="4" fill="#fff"/><rect x="19" y="624" width="1" height="1" fill="#7d7d7d"/><rect x="21" y="624" width="1" height="1" fill="#7d7d7d"/><rect x="23" y="624" width="1" height="1" fill="#7d7d7d"/><rect x="9.5" y="620.5" width="8" height="8" rx="1.5" fill="url(#expg)" stroke="#8e8f8f" stroke-width="1" shape-rendering="auto"/><rect x="11" y="624" width="5" height="1" fill="#3d5f9c"/><rect x="24" y="616" width="16" height="15" fill="#ffffff"/><path d="M29 623.5 L32 627 L35.5 619.5" fill="none" stroke="#ff0000" stroke-width="1.9" shape-rendering="auto"/><rect x="33" y="644" width="1" height="1" fill="#7d7d7d"/><rect x="35" y="644" width="1" height="1" fill="#7d7d7d"/><rect x="37" y="644" width="1" height="1" fill="#7d7d7d"/><rect x="39" y="644" width="1" height="1" fill="#7d7d7d"/><rect x="41" y="644" width="1" height="1" fill="#7d7d7d"/><rect x="43" y="636" width="16" height="15" fill="#ffffff"/><path d="M45 640h2v6h-2z M48 640h5l1 1v4l-1 1h-5z M55 642h4v1h-4z M55 644h4v1h-4z" fill="#008000"/><rect x="50" y="641" width="2" height="4" fill="#fff"/><rect x="33" y="664" width="1" height="1" fill="#7d7d7d"/><rect x="35" y="664" width="1" height="1" fill="#7d7d7d"/><rect x="37" y="664" width="1" height="1" fill="#7d7d7d"/><rect x="39" y="664" width="1" height="1" fill="#7d7d7d"/><rect x="41" y="664" width="1" height="1" fill="#7d7d7d"/><rect x="43" y="656" width="16" height="15" fill="#ffffff"/><path d="M45 660h2v6h-2z M48 660h5l1 1v4l-1 1h-5z M55 662h4v1h-4z M55 664h4v1h-4z" fill="#008000"/><rect x="50" y="661" width="2" height="4" fill="#fff"/><rect x="33" y="684" width="1" height="1" fill="#7d7d7d"/><rect x="35" y="684" width="1" height="1" fill="#7d7d7d"/><rect x="37" y="684" width="1" height="1" fill="#7d7d7d"/><rect x="39" y="684" width="1" height="1" fill="#7d7d7d"/><rect x="41" y="684" width="1" height="1" fill="#7d7d7d"/><rect x="43" y="676" width="16" height="15" fill="#ffffff"/><path d="M45 680h2v6h-2z M48 680h5l1 1v4l-1 1h-5z M55 682h4v1h-4z M55 684h4v1h-4z" fill="#008000"/><rect x="50" y="681" width="2" height="4" fill="#fff"/><rect x="33" y="704" width="1" height="1" fill="#7d7d7d"/><rect x="35" y="704" width="1" height="1" fill="#7d7d7d"/><rect x="37" y="704" width="1" height="1" fill="#7d7d7d"/><rect x="39" y="704" width="1" height="1" fill="#7d7d7d"/><rect x="41" y="704" width="1" height="1" fill="#7d7d7d"/><rect x="43" y="696" width="16" height="15" fill="#ffffff"/><path d="M45 700h2v6h-2z M48 700h5l1 1v4l-1 1h-5z M55 702h4v1h-4z M55 704h4v1h-4z" fill="#008000"/><rect x="50" y="701" width="2" height="4" fill="#fff"/><rect x="33" y="724" width="1" height="1" fill="#7d7d7d"/><rect x="35" y="724" width="1" height="1" fill="#7d7d7d"/><rect x="37" y="724" width="1" height="1" fill="#7d7d7d"/><rect x="39" y="724" width="1" height="1" fill="#7d7d7d"/><rect x="41" y="724" width="1" height="1" fill="#7d7d7d"/><rect x="43" y="716" width="16" height="15" fill="#ffffff"/><path d="M45 720h2v6h-2z M48 720h5l1 1v4l-1 1h-5z M55 722h4v1h-4z M55 724h4v1h-4z" fill="#008000"/><rect x="50" y="721" width="2" height="4" fill="#fff"/><rect x="33" y="744" width="1" height="1" fill="#7d7d7d"/><rect x="35" y="744" width="1" height="1" fill="#7d7d7d"/><rect x="37" y="744" width="1" height="1" fill="#7d7d7d"/><rect x="39" y="744" width="1" height="1" fill="#7d7d7d"/><rect x="41" y="744" width="1" height="1" fill="#7d7d7d"/><rect x="43" y="736" width="16" height="15" fill="#ffffff"/><path d="M45 740h2v6h-2z M48 740h5l1 1v4l-1 1h-5z M55 742h4v1h-4z M55 744h4v1h-4z" fill="#008000"/><rect x="50" y="741" width="2" height="4" fill="#fff"/><rect x="33" y="764" width="1" height="1" fill="#7d7d7d"/><rect x="35" y="764" width="1" height="1" fill="#7d7d7d"/><rect x="37" y="764" width="1" height="1" fill="#7d7d7d"/><rect x="39" y="764" width="1" height="1" fill="#7d7d7d"/><rect x="41" y="764" width="1" height="1" fill="#7d7d7d"/><rect x="43" y="756" width="16" height="15" fill="#ffffff"/><path d="M45 760h2v6h-2z M48 760h5l1 1v4l-1 1h-5z M55 762h4v1h-4z M55 764h4v1h-4z" fill="#008000"/><rect x="50" y="761" width="2" height="4" fill="#fff"/><rect x="33" y="784" width="1" height="1" fill="#7d7d7d"/><rect x="35" y="784" width="1" height="1" fill="#7d7d7d"/><rect x="37" y="784" width="1" height="1" fill="#7d7d7d"/><rect x="39" y="784" width="1" height="1" fill="#7d7d7d"/><rect x="41" y="784" width="1" height="1" fill="#7d7d7d"/><rect x="43" y="776" width="16" height="15" fill="#ffffff"/><path d="M45 780h2v6h-2z M48 780h5l1 1v4l-1 1h-5z M55 782h4v1h-4z M55 784h4v1h-4z" fill="#008000"/><rect x="50" y="781" width="2" height="4" fill="#fff"/><rect x="33" y="804" width="1" height="1" fill="#7d7d7d"/><rect x="35" y="804" width="1" height="1" fill="#7d7d7d"/><rect x="37" y="804" width="1" height="1" fill="#7d7d7d"/><rect x="39" y="804" width="1" height="1" fill="#7d7d7d"/><rect x="41" y="804" width="1" height="1" fill="#7d7d7d"/><rect x="43" y="796" width="16" height="15" fill="#ffffff"/><path d="M45 800h2v6h-2z M48 800h5l1 1v4l-1 1h-5z M55 802h4v1h-4z M55 804h4v1h-4z" fill="#008000"/><rect x="50" y="801" width="2" height="4" fill="#fff"/></svg>
<div class="t" style="left:43px;top:3px;font-size:13px;color:#800040">Light Test Report</div>
<div class="t" style="left:43px;top:23px;font-size:13px;color:#800040">CIE Color Parameters</div>
<div class="t" style="left:62px;top:43px;font-size:13px;color:#800040">x = 0.4475 , y = 0.4074</div>
<div class="t" style="left:62px;top:63px;font-size:13px;color:#800040">u'= 0.2559 , v'= 0.5243</div>
<div class="t" style="left:62px;top:83px;font-size:13px;color:#800040">Tc = 2856K</div>
<div class="t" style="left:62px;top:103px;font-size:13px;color:#800040">duv=-1.33e-006</div>
<div class="t" style="left:62px;top:123px;font-size:13px;color:#800040">Ld = 583.5nm</div>
<div class="t" style="left:62px;top:143px;font-size:13px;color:#800040">Purity = 56.6%</div>
<div class="t" style="left:62px;top:163px;font-size:13px;color:#800040">Lp = 800.0nm</div>
<div class="t" style="left:62px;top:183px;font-size:13px;color:#800040">HW = 205.4nm</div>
<div class="t" style="left:62px;top:203px;font-size:13px;color:#800040">Red Ratio = 27.0 %</div>
<div class="t" style="left:62px;top:223px;font-size:13px;color:#800040">Green Ratio = 70.2 %</div>
<div class="t" style="left:62px;top:243px;font-size:13px;color:#800040">Blue Ratio = 2.8 %</div>
<div class="t" style="left:62px;top:263px;font-size:13px;color:#800040">Rendering Index Ra = 100</div>
<div class="t" style="left:43px;top:283px;font-size:13px;color:#800040">Photo Parameters</div>
<div class="t" style="left:62px;top:303px;font-size:13px;color:#800040">Flux = 1000.0 lm</div>
<div class="t" style="left:62px;top:323px;font-size:13px;color:#800040">Fe = 7.1574 W</div>
<div class="t" style="left:62px;top:343px;font-size:13px;color:#800040">Eff. = 59.52 lm/W</div>
<div class="t" style="left:43px;top:363px;font-size:13px;color:#800040">Electrical Parameters</div>
<div class="t" style="left:62px;top:383px;font-size:13px;color:#800040">Lamp:</div>
<div class="t" style="left:62px;top:403px;font-size:13px;color:#800040">U=24.000V</div>
<div class="t" style="left:62px;top:423px;font-size:13px;color:#800040">I=0.7000A</div>
<div class="t" style="left:62px;top:443px;font-size:13px;color:#800040">P=16.80W</div>
<div class="t" style="left:62px;top:463px;font-size:13px;color:#800040">PF=1.0000</div>
<div class="t" style="left:43px;top:483px;font-size:13px;color:#800040">Status</div>
<div class="t" style="left:62px;top:503px;font-size:13px;color:#800040">Scan Range = 380.0-800.0nm</div>
<div class="t" style="left:62px;top:523px;font-size:13px;color:#800040">Scan Interval = 5.0nm[1]</div>
<div class="t" style="left:62px;top:543px;font-size:13px;color:#800040">HV   = 3</div>
<div class="t" style="left:62px;top:563px;font-size:13px;color:#800040">Dark   = 6</div>
<div class="t" style="left:62px;top:583px;font-size:13px;color:#800040">Ip = 40000</div>
<div class="t" style="left:62px;top:603px;font-size:13px;color:#800040">REF = 11439(R=3)</div>
<div class="t" style="left:62px;top:623px;font-size:13px;color:#800040">Change = 0.62%</div>
<div class="t" style="left:62px;top:643px;font-size:13px;color:#800040">TMP(PMT) = 30.0deg</div>
<div class="t" style="left:62px;top:663px;font-size:13px;color:#800040">Environment TMP = 25.0deg</div>
</div>
<div class="ab" style="left:2px;top:823px;width:200px;height:16px;background:linear-gradient(90deg,#e8e8e8,#f0f0f0 10%,#f0f0f0 90%,#e8e8e8)"></div>
<svg style="left:8px;top:827px" width="4" height="7" viewBox="0 0 4 7"><path d="M4 0 L0 3.5 L4 7 Z" fill="#4a4a4a"/></svg>
<svg style="left:192px;top:827px" width="4" height="7" viewBox="0 0 4 7"><path d="M0 0 L4 3.5 L0 7 Z" fill="#4a4a4a"/></svg>
<div class="ab" style="left:20px;top:823px;width:140px;height:15px;border:1px solid #8c8c8c;border-radius:2px;background:linear-gradient(#f7f7f7 0%,#ececec 45%,#dcdcdc 50%,#cfcfcf 100%)"></div>
<div class="ab" style="left:86px;top:827px;width:7px;height:8px;background:repeating-linear-gradient(90deg,#505050 0 1px,#e8e8e8 1px 3px)"></div>
<div class="ab" style="left:207px;top:132px;width:1232px;height:363px;border-top:1px solid #a0a0a0;border-left:1px solid #a0a0a0;border-bottom:1px solid #fdfdfd"></div>
<div class="ab" style="left:208px;top:133px;width:1231px;height:361px;border-top:1px solid #696969;border-left:1px solid #696969;border-bottom:1px solid #e3e3e3"></div>
<div class="ab" style="left:209px;top:134px;width:1230px;height:358px;background:#f0f0f0"></div>
<div class="ab" style="left:209px;top:140px;width:170px;height:20px;border-top:1px solid #000;border-left:2px solid #000;background:#f0f0f0"></div>
<div class="ab" style="left:211px;top:141px;width:166px;height:1px;background:#fff"></div>
<div class="ab" style="left:211px;top:141px;width:1px;height:19px;background:#fff"></div>
<div class="ab" style="left:377px;top:141px;width:2px;height:19px;background:#a0a0a0"></div>
<div class="t" style="left:224px;top:146px;font-size:12.6px;color:#101010">Relative Spectrum Curve</div>
<div class="ab" style="left:379px;top:140px;width:106px;height:20px;border:1px solid #000;border-left:2px solid #000;border-right:2px solid #000;border-bottom:none;background:#f0f0f0"></div>
<div class="ab" style="left:381px;top:141px;width:102px;height:1px;background:#fff"></div>
<div class="t" style="left:389px;top:146px;font-size:12.6px;color:#101010">Spectrum Data</div>
<div class="ab" style="left:379px;top:159px;width:1060px;height:1px;background:#000"></div>
<div class="ab" style="left:209px;top:164px;width:1228px;height:1px;background:#a0a0a0"></div>
<div class="ab" style="left:210px;top:165px;width:1227px;height:1px;background:#fafafa"></div>
<div class="ab" style="left:209px;top:160px;width:1px;height:332px;background:#fcfcfc"></div>
<div class="ab" style="left:210px;top:165px;width:1px;height:327px;background:#fafafa"></div>
<div class="ab" style="left:215px;top:170px;width:918px;height:318px;border-left:1px solid #b4a890;border-top:1px solid #b4a890;border-right:1px solid #ffffff;border-bottom:1px solid #ffffff;background:#0062ff"></div>
<svg style="left:216px;top:171px" width="916" height="316" viewBox="216 171 916 316"><defs><clipPath id="spc"><path d="M281,446 L281.0,438.1 L282.0,437.9 L283.9,437.7 L285.9,437.5 L287.9,437.4 L289.9,437.2 L291.8,437.0 L293.8,436.8 L295.8,436.6 L297.7,436.4 L299.7,436.2 L301.7,436.0 L303.7,435.8 L305.6,435.6 L307.6,435.4 L309.6,435.2 L311.5,435.0 L313.5,434.8 L315.5,434.5 L317.5,434.3 L319.4,434.1 L321.4,433.9 L323.4,433.6 L325.3,433.4 L327.3,433.2 L329.3,432.9 L331.3,432.7 L333.2,432.4 L335.2,432.2 L337.2,431.9 L339.1,431.7 L341.1,431.4 L343.1,431.2 L345.1,430.9 L347.0,430.6 L349.0,430.4 L351.0,430.1 L352.9,429.8 L354.9,429.6 L356.9,429.3 L358.9,429.0 L360.8,428.7 L362.8,428.4 L364.8,428.1 L366.7,427.8 L368.7,427.5 L370.7,427.3 L372.7,426.9 L374.6,426.6 L376.6,426.3 L378.6,426.0 L380.5,425.7 L382.5,425.4 L384.5,425.1 L386.5,424.8 L388.4,424.4 L390.4,424.1 L392.4,423.8 L394.3,423.4 L396.3,423.1 L398.3,422.8 L400.3,422.4 L402.2,422.1 L404.2,421.7 L406.2,421.4 L408.1,421.0 L410.1,420.7 L412.1,420.3 L414.1,419.9 L416.0,419.6 L418.0,419.2 L420.0,418.8 L421.9,418.5 L423.9,418.1 L425.9,417.7 L427.9,417.3 L429.8,417.0 L431.8,416.6 L433.8,416.2 L435.7,415.8 L437.7,415.4 L439.7,415.0 L441.7,414.6 L443.6,414.2 L445.6,413.8 L447.6,413.4 L449.5,413.0 L451.5,412.6 L453.5,412.1 L455.5,411.7 L457.4,411.3 L459.4,410.9 L461.4,410.4 L463.3,410.0 L465.3,409.6 L467.3,409.2 L469.3,408.7 L471.2,408.3 L473.2,407.8 L475.2,407.4 L477.1,406.9 L479.1,406.5 L481.1,406.0 L483.1,405.6 L485.0,405.1 L487.0,404.7 L489.0,404.2 L490.9,403.8 L492.9,403.3 L494.9,402.8 L496.9,402.4 L498.8,401.9 L500.8,401.4 L502.8,400.9 L504.7,400.5 L506.7,400.0 L508.7,399.5 L510.7,399.0 L512.6,398.5 L514.6,398.0 L516.6,397.5 L518.5,397.1 L520.5,396.6 L522.5,396.1 L524.5,395.6 L526.4,395.1 L528.4,394.6 L530.4,394.1 L532.3,393.5 L534.3,393.0 L536.3,392.5 L538.3,392.0 L540.2,391.5 L542.2,391.0 L544.2,390.5 L546.1,389.9 L548.1,389.4 L550.1,388.9 L552.1,388.4 L554.0,387.9 L556.0,387.3 L558.0,386.8 L559.9,386.3 L561.9,385.7 L563.9,385.2 L565.9,384.7 L567.8,384.1 L569.8,383.6 L571.8,383.0 L573.7,382.5 L575.7,382.0 L577.7,381.4 L579.7,380.9 L581.6,380.3 L583.6,379.8 L585.6,379.2 L587.5,378.7 L589.5,378.1 L591.5,377.6 L593.5,377.0 L595.4,376.4 L597.4,375.9 L599.4,375.3 L601.3,374.8 L603.3,374.2 L605.3,373.6 L607.3,373.1 L609.2,372.5 L611.2,371.9 L613.2,371.4 L615.1,370.8 L617.1,370.2 L619.1,369.7 L621.1,369.1 L623.0,368.5 L625.0,367.9 L627.0,367.4 L628.9,366.8 L630.9,366.2 L632.9,365.6 L634.9,365.1 L636.8,364.5 L638.8,363.9 L640.8,363.3 L642.7,362.8 L644.7,362.2 L646.7,361.6 L648.7,361.0 L650.6,360.4 L652.6,359.8 L654.6,359.3 L656.5,358.7 L658.5,358.1 L660.5,357.5 L662.5,356.9 L664.4,356.3 L666.4,355.7 L668.4,355.2 L670.3,354.6 L672.3,354.0 L674.3,353.4 L676.3,352.8 L678.2,352.2 L680.2,351.6 L682.2,351.0 L684.1,350.4 L686.1,349.9 L688.1,349.3 L690.1,348.7 L692.0,348.1 L694.0,347.5 L696.0,346.9 L697.9,346.3 L699.9,345.7 L701.9,345.1 L703.9,344.5 L705.8,343.9 L707.8,343.4 L709.8,342.8 L711.7,342.2 L713.7,341.6 L715.7,341.0 L717.7,340.4 L719.6,339.8 L721.6,339.2 L723.6,338.6 L725.5,338.0 L727.5,337.4 L729.5,336.9 L731.5,336.3 L733.4,335.7 L735.4,335.1 L737.4,334.5 L739.3,333.9 L741.3,333.3 L743.3,332.7 L745.3,332.1 L747.2,331.5 L749.2,331.0 L751.2,330.4 L753.1,329.8 L755.1,329.2 L757.1,328.6 L759.1,328.0 L761.0,327.4 L763.0,326.9 L765.0,326.3 L766.9,325.7 L768.9,325.1 L770.9,324.5 L772.9,324.0 L774.8,323.4 L776.8,322.8 L778.8,322.2 L780.7,321.6 L782.7,321.1 L784.7,320.5 L786.7,319.9 L788.6,319.3 L790.6,318.7 L792.6,318.2 L794.5,317.6 L796.5,317.0 L798.5,316.5 L800.5,315.9 L802.4,315.3 L804.4,314.7 L806.4,314.2 L808.3,313.6 L810.3,313.0 L812.3,312.5 L814.3,311.9 L816.2,311.3 L818.2,310.8 L820.2,310.2 L822.1,309.7 L824.1,309.1 L826.1,308.5 L828.1,308.0 L830.0,307.4 L832.0,306.9 L834.0,306.3 L835.9,305.8 L837.9,305.2 L839.9,304.6 L841.9,304.1 L843.8,303.5 L845.8,303.0 L847.8,302.5 L849.7,301.9 L851.7,301.4 L853.7,300.8 L855.7,300.3 L857.6,299.7 L859.6,299.2 L861.6,298.7 L863.5,298.1 L865.5,297.6 L867.5,297.0 L869.5,296.5 L871.4,296.0 L873.4,295.4 L875.4,294.9 L877.3,294.4 L879.3,293.9 L881.3,293.3 L883.3,292.8 L885.2,292.3 L887.2,291.8 L889.2,291.2 L891.1,290.7 L893.1,290.2 L895.1,289.7 L897.1,289.2 L899.0,288.7 L901.0,288.1 L903.0,287.6 L904.9,287.1 L906.9,286.6 L908.9,286.1 L910.9,285.6 L912.8,285.1 L914.8,284.6 L916.8,284.1 L918.7,283.6 L920.7,283.1 L922.7,282.6 L924.7,282.1 L926.6,281.6 L928.6,281.1 L930.6,280.6 L932.5,280.1 L934.5,279.6 L936.5,279.2 L938.5,278.7 L940.4,278.2 L942.4,277.7 L944.4,277.2 L946.3,276.8 L948.3,276.3 L950.3,275.8 L952.3,275.3 L954.2,274.9 L956.2,274.4 L958.2,273.9 L960.1,273.5 L962.1,273.0 L964.1,272.5 L966.1,272.1 L968.0,271.6 L970.0,271.2 L972.0,270.7 L973.9,270.2 L975.9,269.8 L977.9,269.3 L979.9,268.9 L981.8,268.4 L983.8,268.0 L985.8,267.6 L987.7,267.1 L989.7,266.7 L991.7,266.2 L993.7,265.8 L995.6,265.4 L997.6,264.9 L999.6,264.5 L1001.5,264.1 L1003.5,263.6 L1005.5,263.2 L1007.5,262.8 L1009.4,262.4 L1011.4,261.9 L1013.4,261.5 L1015.3,261.1 L1017.3,260.7 L1019.3,260.3 L1021.3,259.9 L1023.2,259.4 L1025.2,259.0 L1027.2,258.6 L1029.1,258.2 L1031.1,257.8 L1033.1,257.4 L1035.1,257.0 L1037.0,256.6 L1039.0,256.2 L1041.0,255.8 L1042.9,255.4 L1044.9,255.0 L1046.9,254.7 L1048.9,254.3 L1050.8,253.9 L1052.8,253.5 L1054.8,253.1 L1056.7,252.7 L1058.7,252.4 L1060.7,252.0 L1062.7,251.6 L1064.6,251.2 L1066.6,250.9 L1068.6,250.5 L1070.5,250.1 L1072.5,249.8 L1074.5,249.4 L1076.5,249.0 L1078.4,248.7 L1080.4,248.3 L1082.4,248.0 L1084.3,247.6 L1086.3,247.3 L1088.3,246.9 L1090.3,246.6 L1092.2,246.2 L1094.2,245.9 L1096.2,245.5 L1098.1,245.2 L1100.1,244.8 L1102.1,244.5 L1104.1,244.2 L1106.0,243.8 L1108.0,243.5 L1108,446 Z"/></clipPath></defs><g clip-path="url(#spc)" shape-rendering="crispEdges"><rect x="280.00" y="240" width="10.46" height="207" fill="#000000"/><rect x="289.86" y="240" width="10.46" height="207" fill="#000012"/><rect x="299.71" y="240" width="10.46" height="207" fill="#000024"/><rect x="309.57" y="240" width="10.46" height="207" fill="#000037"/><rect x="319.43" y="240" width="10.46" height="207" fill="#000049"/><rect x="329.29" y="240" width="10.46" height="207" fill="#00005b"/><rect x="339.14" y="240" width="10.46" height="207" fill="#00006d"/><rect x="349.00" y="240" width="10.46" height="207" fill="#000080"/><rect x="358.86" y="240" width="10.46" height="207" fill="#000092"/><rect x="368.71" y="240" width="10.46" height="207" fill="#0000a4"/><rect x="378.57" y="240" width="10.46" height="207" fill="#0000b6"/><rect x="388.43" y="240" width="10.46" height="207" fill="#0000c8"/><rect x="398.29" y="240" width="10.46" height="207" fill="#0000db"/><rect x="408.14" y="240" width="10.46" height="207" fill="#0000ed"/><rect x="418.00" y="240" width="10.46" height="207" fill="#0000ff"/><rect x="427.86" y="240" width="10.46" height="207" fill="#0024ff"/><rect x="437.71" y="240" width="10.46" height="207" fill="#0049ff"/><rect x="447.57" y="240" width="10.46" height="207" fill="#006dff"/><rect x="457.43" y="240" width="10.46" height="207" fill="#0092ff"/><rect x="467.29" y="240" width="10.46" height="207" fill="#00b6ff"/><rect x="477.14" y="240" width="10.46" height="207" fill="#00dbff"/><rect x="487.00" y="240" width="10.46" height="207" fill="#00ffff"/><rect x="496.86" y="240" width="10.46" height="207" fill="#00ffdb"/><rect x="506.71" y="240" width="10.46" height="207" fill="#00ffb6"/><rect x="516.57" y="240" width="10.46" height="207" fill="#00ff92"/><rect x="526.43" y="240" width="10.46" height="207" fill="#00ff6d"/><rect x="536.29" y="240" width="10.46" height="207" fill="#00ff49"/><rect x="546.14" y="240" width="10.46" height="207" fill="#00ff24"/><rect x="556.00" y="240" width="10.46" height="207" fill="#00ff00"/><rect x="565.86" y="240" width="10.46" height="207" fill="#1aff00"/><rect x="575.71" y="240" width="10.46" height="207" fill="#33ff00"/><rect x="585.57" y="240" width="10.46" height="207" fill="#4cff00"/><rect x="595.43" y="240" width="10.46" height="207" fill="#66ff00"/><rect x="605.29" y="240" width="10.46" height="207" fill="#80ff00"/><rect x="615.14" y="240" width="10.46" height="207" fill="#99ff00"/><rect x="625.00" y="240" width="10.46" height="207" fill="#b2ff00"/><rect x="634.86" y="240" width="10.46" height="207" fill="#ccff00"/><rect x="644.71" y="240" width="10.46" height="207" fill="#e6ff00"/><rect x="654.57" y="240" width="10.46" height="207" fill="#ffff00"/><rect x="664.43" y="240" width="10.46" height="207" fill="#ffe600"/><rect x="674.29" y="240" width="10.46" height="207" fill="#ffcc00"/><rect x="684.14" y="240" width="10.46" height="207" fill="#ffb200"/><rect x="694.00" y="240" width="10.46" height="207" fill="#ff9900"/><rect x="703.86" y="240" width="10.46" height="207" fill="#ff8000"/><rect x="713.71" y="240" width="10.46" height="207" fill="#ff6600"/><rect x="723.57" y="240" width="10.46" height="207" fill="#ff4c00"/><rect x="733.43" y="240" width="10.46" height="207" fill="#ff3300"/><rect x="743.29" y="240" width="10.46" height="207" fill="#ff1a00"/><rect x="753.14" y="240" width="10.46" height="207" fill="#ff0000"/><rect x="763.00" y="240" width="10.46" height="207" fill="#f70000"/><rect x="772.86" y="240" width="10.46" height="207" fill="#ef0000"/><rect x="782.71" y="240" width="10.46" height="207" fill="#e70000"/><rect x="792.57" y="240" width="10.46" height="207" fill="#df0000"/><rect x="802.43" y="240" width="10.46" height="207" fill="#d70000"/><rect x="812.29" y="240" width="10.46" height="207" fill="#cf0000"/><rect x="822.14" y="240" width="10.46" height="207" fill="#c70000"/><rect x="832.00" y="240" width="10.46" height="207" fill="#bf0000"/><rect x="841.86" y="240" width="10.46" height="207" fill="#b70000"/><rect x="851.71" y="240" width="10.46" height="207" fill="#af0000"/><rect x="861.57" y="240" width="10.46" height="207" fill="#a70000"/><rect x="871.43" y="240" width="10.46" height="207" fill="#9f0000"/><rect x="881.29" y="240" width="10.46" height="207" fill="#970000"/><rect x="891.14" y="240" width="10.46" height="207" fill="#8f0000"/><rect x="901.00" y="240" width="10.46" height="207" fill="#870000"/><rect x="910.86" y="240" width="10.46" height="207" fill="#800000"/><rect x="920.71" y="240" width="10.46" height="207" fill="#780000"/><rect x="930.57" y="240" width="10.46" height="207" fill="#700000"/><rect x="940.43" y="240" width="10.46" height="207" fill="#680000"/><rect x="950.29" y="240" width="10.46" height="207" fill="#600000"/><rect x="960.14" y="240" width="10.46" height="207" fill="#580000"/><rect x="970.00" y="240" width="10.46" height="207" fill="#500000"/><rect x="979.86" y="240" width="10.46" height="207" fill="#480000"/><rect x="989.71" y="240" width="10.46" height="207" fill="#400000"/><rect x="999.57" y="240" width="10.46" height="207" fill="#380000"/><rect x="1009.43" y="240" width="10.46" height="207" fill="#300000"/><rect x="1019.29" y="240" width="10.46" height="207" fill="#280000"/><rect x="1029.14" y="240" width="10.46" height="207" fill="#200000"/><rect x="1039.00" y="240" width="10.46" height="207" fill="#180000"/><rect x="1048.86" y="240" width="10.46" height="207" fill="#100000"/><rect x="1058.71" y="240" width="10.46" height="207" fill="#080000"/><rect x="1068.57" y="240" width="10.46" height="207" fill="#000000"/><rect x="1078.43" y="240" width="10.46" height="207" fill="#000000"/><rect x="1088.29" y="240" width="10.46" height="207" fill="#000000"/><rect x="1098.14" y="240" width="10.46" height="207" fill="#000000"/></g><rect x="279" y="203" width="2" height="245" fill="#ffffff"/><rect x="279" y="446" width="830" height="2" fill="#ffffff"/><rect x="277" y="203" width="2" height="2" fill="#ffffff"/><text x="273.5" y="208" text-anchor="end" font-family="Liberation Mono" font-size="12" letter-spacing="0.8" fill="#ffffff">1.2</text><rect x="277" y="244" width="2" height="2" fill="#ffffff"/><text x="273.5" y="249" text-anchor="end" font-family="Liberation Mono" font-size="12" letter-spacing="0.8" fill="#ffffff">1.0</text><rect x="277" y="284" width="2" height="2" fill="#ffffff"/><text x="273.5" y="289" text-anchor="end" font-family="Liberation Mono" font-size="12" letter-spacing="0.8" fill="#ffffff">0.8</text><rect x="277" y="324" width="2" height="2" fill="#ffffff"/><text x="273.5" y="329" text-anchor="end" font-family="Liberation Mono" font-size="12" letter-spacing="0.8" fill="#ffffff">0.6</text><rect x="277" y="365" width="2" height="2" fill="#ffffff"/><text x="273.5" y="370" text-anchor="end" font-family="Liberation Mono" font-size="12" letter-spacing="0.8" fill="#ffffff">0.4</text><rect x="277" y="406" width="2" height="2" fill="#ffffff"/><text x="273.5" y="411" text-anchor="end" font-family="Liberation Mono" font-size="12" letter-spacing="0.8" fill="#ffffff">0.2</text><rect x="277" y="446" width="2" height="2" fill="#ffffff"/><text x="273.5" y="451" text-anchor="end" font-family="Liberation Mono" font-size="12" letter-spacing="0.8" fill="#ffffff">0.0</text><rect x="279" y="448" width="2" height="4" fill="#ffffff"/><text x="280.5" y="463" text-anchor="middle" font-family="Liberation Mono" font-size="12" letter-spacing="0.8" fill="#ffffff">380</text><rect x="318" y="448" width="2" height="4" fill="#ffffff"/><rect x="516" y="448" width="2" height="4" fill="#ffffff"/><text x="517.5" y="463" text-anchor="middle" font-family="Liberation Mono" font-size="12" letter-spacing="0.8" fill="#ffffff">500</text><rect x="713" y="448" width="2" height="4" fill="#ffffff"/><text x="714.5" y="463" text-anchor="middle" font-family="Liberation Mono" font-size="12" letter-spacing="0.8" fill="#ffffff">600</text><rect x="910" y="448" width="2" height="4" fill="#ffffff"/><text x="911.5" y="463" text-anchor="middle" font-family="Liberation Mono" font-size="12" letter-spacing="0.8" fill="#ffffff">700</text><rect x="1107" y="448" width="2" height="4" fill="#ffffff"/><text x="1108.5" y="463" text-anchor="middle" font-family="Liberation Mono" font-size="12" letter-spacing="0.8" fill="#ffffff">800</text><text x="638" y="479" font-family="Liberation Mono" font-size="12" letter-spacing="0.8" fill="#ffffff">Wavelength(nm)</text><text x="0" y="0" transform="translate(240.5,360) rotate(-90)" font-family="Liberation Mono" font-size="12" letter-spacing="1.7" fill="#ffffff">Spectrum</text><text x="956" y="215" font-family="Liberation Mono" font-size="12" letter-spacing="0.8" fill="#ffffff">Wavelength(nm):380.0</text><text x="956" y="231" font-family="Liberation Mono" font-size="12" letter-spacing="0.8" fill="#ffffff">Spectrum :0.0392</text></svg>
<div class="ab" style="left:1143px;top:169px;width:83px;height:18px;border-left:1px solid #8a8d99;border-top:1px solid #8a8d99;border-right:1px solid #8a8d99;background:linear-gradient(#f4f4f4 0%,#ececec 45%,#dedede 55%,#d2d2d2 100%)"></div>
<div class="t" style="left:1122.5px;top:173px;width:120px;text-align:center;font-family:'Liberation Mono';font-size:11.5px;color:#000;-webkit-text-stroke:0.3px #000;transform:scaleX(0.88);transform-origin:50% 0">CIE1976</div>
<div class="ab" style="left:1225px;top:169px;width:94px;height:18px;border-left:1px solid #8a8d99;border-top:1px solid #8a8d99;border-right:1px solid #8a8d99;background:linear-gradient(#f4f4f4 0%,#ececec 45%,#dedede 55%,#d2d2d2 100%)"></div>
<div class="t" style="left:1210.5px;top:173px;width:120px;text-align:center;font-family:'Liberation Mono';font-size:11.5px;color:#000;-webkit-text-stroke:0.3px #000;transform:scaleX(0.88);transform-origin:50% 0">Parameter</div>
<div class="ab" style="left:1318px;top:169px;width:97px;height:18px;border-left:1px solid #8a8d99;border-top:1px solid #8a8d99;border-right:1px solid #8a8d99;background:linear-gradient(#f4f4f4 0%,#ececec 45%,#dedede 55%,#d2d2d2 100%)"></div>
<div class="t" style="left:1312px;top:173px;width:120px;text-align:center;font-family:'Liberation Mono';font-size:11.5px;color:#000;-webkit-text-stroke:0.3px #000;transform:scaleX(0.88);transform-origin:50% 0">Pass or Fail</div>
<div class="ab" style="left:1143px;top:186px;width:272px;height:1px;background:#8a8d99"></div>
<div class="ab" style="left:1143px;top:187px;width:95px;height:18px;border-left:1px solid #8a8d99;border-top:1px solid #8a8d99;border-right:1px solid #8a8d99;background:linear-gradient(#f4f4f4 0%,#ececec 45%,#dedede 55%,#d2d2d2 100%)"></div>
<div class="t" style="left:1122px;top:191px;width:120px;text-align:center;font-family:'Liberation Mono';font-size:11.5px;color:#000;-webkit-text-stroke:0.3px #000;transform:scaleX(0.88);transform-origin:50% 0">SDCM</div>
<div class="ab" style="left:1237px;top:187px;width:92px;height:18px;border-left:1px solid #8a8d99;border-top:1px solid #8a8d99;border-right:1px solid #8a8d99;background:linear-gradient(#f4f4f4 0%,#ececec 45%,#dedede 55%,#d2d2d2 100%)"></div>
<div class="t" style="left:1217px;top:191px;width:120px;text-align:center;font-family:'Liberation Mono';font-size:11.5px;color:#000;-webkit-text-stroke:0.3px #000;transform:scaleX(0.88);transform-origin:50% 0">Area</div>
<div class="ab" style="left:1142px;top:204px;width:187px;height:1px;background:#8a8d99"></div>
<div class="ab" style="left:1142px;top:204px;width:1px;height:12px;background:#8a8d99"></div>
<div class="ab" style="left:1328px;top:184px;width:102px;height:22px;border-left:1px solid #8a8d99;border-top:1px solid #8a8d99;border-right:1px solid #8a8d99;background:#ffffff"></div>
<div class="t" style="left:1318.5px;top:189px;width:120px;text-align:center;font-family:'Liberation Mono';font-size:11.5px;color:#000;-webkit-text-stroke:0.3px #000;transform:scaleX(0.88);transform-origin:50% 0">CIE1931</div>
<div class="ab" style="left:1145px;top:206px;width:283px;height:282px;border-left:2px solid #6f6f6f;border-top:2px solid #6f6f6f;border-right:2px solid #fafafa;border-bottom:2px solid #fafafa;background:#fdfdfd;box-shadow:inset -1px -1px 0 #dcdcdc"></div>
<svg style="left:1147px;top:208px" width="278" height="278" viewBox="1147 208 278 278"><rect x="1157" y="216" width="259" height="261" fill="#050505"/><rect x="1168" y="216" width="1" height="261" fill="#b4b8b8"/><rect x="1199" y="216" width="1" height="261" fill="#b4b8b8"/><rect x="1231" y="216" width="1" height="261" fill="#b4b8b8"/><rect x="1262" y="216" width="1" height="261" fill="#b4b8b8"/><rect x="1294" y="216" width="1" height="261" fill="#b4b8b8"/><rect x="1325" y="216" width="1" height="261" fill="#b4b8b8"/><rect x="1356" y="216" width="1" height="261" fill="#b4b8b8"/><rect x="1388" y="216" width="1" height="261" fill="#b4b8b8"/><rect x="1157" y="464" width="259" height="1" fill="#b0b48c"/><rect x="1157" y="436" width="259" height="1" fill="#b0b48c"/><rect x="1157" y="409" width="259" height="1" fill="#b0b48c"/><rect x="1157" y="382" width="259" height="1" fill="#b0b48c"/><rect x="1157" y="354" width="259" height="1" fill="#b0b48c"/><rect x="1157" y="326" width="259" height="1" fill="#b0b48c"/><rect x="1157" y="299" width="259" height="1" fill="#b0b48c"/><rect x="1157" y="272" width="259" height="1" fill="#b0b48c"/><rect x="1157" y="244" width="259" height="1" fill="#b0b48c"/><g opacity="0.65"><rect x="1358" y="300.0" width="10" height="1.2" fill="#9a9a9a"/><rect x="1374" y="300.0" width="12" height="1.2" fill="#9a9a9a"/><rect x="1358" y="302.6" width="14" height="1.2" fill="#9a9a9a"/><rect x="1374" y="302.6" width="12" height="1.2" fill="#9a9a9a"/><rect x="1358" y="305.2" width="10" height="1.2" fill="#9a9a9a"/><rect x="1374" y="305.2" width="12" height="1.2" fill="#9a9a9a"/><rect x="1358" y="307.8" width="14" height="1.2" fill="#9a9a9a"/><rect x="1374" y="307.8" width="12" height="1.2" fill="#9a9a9a"/><rect x="1358" y="310.4" width="10" height="1.2" fill="#9a9a9a"/><rect x="1374" y="310.4" width="12" height="1.2" fill="#9a9a9a"/><rect x="1358" y="313.0" width="14" height="1.2" fill="#9a9a9a"/><rect x="1374" y="313.0" width="12" height="1.2" fill="#9a9a9a"/><rect x="1358" y="315.6" width="10" height="1.2" fill="#9a9a9a"/><rect x="1374" y="315.6" width="12" height="1.2" fill="#9a9a9a"/><rect x="1358" y="318.2" width="14" height="1.2" fill="#9a9a9a"/><rect x="1374" y="318.2" width="12" height="1.2" fill="#9a9a9a"/><rect x="1358" y="320.8" width="10" height="1.2" fill="#9a9a9a"/><rect x="1374" y="320.8" width="12" height="1.2" fill="#9a9a9a"/><rect x="1353" y="297" width="36" height="1" fill="#808080"/><rect x="1364" y="414" width="26" height="1.5" fill="#9a9a9a"/><rect x="1366" y="418" width="20" height="1.5" fill="#9a9a9a"/><path d="M1393 390 L1402 394 L1401 403 L1390 412 L1386 412" fill="none" stroke="#a0a0a0" stroke-width="0.8"/><rect x="1303" y="446" width="48" height="1.5" fill="#8a8a8a"/><rect x="1242" y="455" width="1.2" height="7" fill="#9a9a9a"/><rect x="1247" y="456" width="1.2" height="8" fill="#9a9a9a"/><rect x="1252" y="455" width="1.2" height="9" fill="#9a9a9a"/><rect x="1261" y="456" width="1.2" height="7" fill="#9a9a9a"/><rect x="1272" y="455" width="1.2" height="8" fill="#9a9a9a"/><rect x="1293" y="456" width="1.2" height="9" fill="#9a9a9a"/><rect x="1310" y="455" width="1.2" height="7" fill="#9a9a9a"/><rect x="1328" y="456" width="1.2" height="8" fill="#9a9a9a"/><rect x="1342" y="455" width="1.2" height="9" fill="#9a9a9a"/><rect x="1358" y="456" width="1.2" height="7" fill="#9a9a9a"/><rect x="1380" y="455" width="1.2" height="8" fill="#9a9a9a"/><rect x="1176" y="452" width="10" height="1.5" fill="#b0b0b0"/><rect x="1176" y="455" width="6" height="1.5" fill="#b0b0b0"/><rect x="1355" y="248" width="0" height="0" fill="none"/></g><defs><clipPath id="loc"><path d="M1222.7,462.6 L1222.6,462.7 L1222.4,462.7 L1222.2,462.7 L1221.8,462.6 L1221.5,462.4 L1221.0,462.1 L1220.4,461.6 L1219.6,461.0 L1218.6,460.2 L1217.2,459.1 L1215.4,457.8 L1213.2,455.8 L1210.5,453.0 L1207.0,448.1 L1202.4,440.1 L1196.7,427.5 L1189.6,408.8 L1182.3,382.9 L1175.4,350.5 L1170.6,315.9 L1169.2,283.9 L1172.4,257.7 L1180.2,240.7 L1191.3,234.7 L1203.9,236.8 L1216.6,242.4 L1228.6,249.1 L1240.1,256.6 L1251.5,264.8 L1262.7,273.6 L1273.9,282.8 L1285.2,292.3 L1296.3,301.9 L1307.4,311.5 L1318.3,320.9 L1328.9,330.2 L1339.1,339.0 L1348.6,347.3 L1357.3,355.0 L1364.9,361.6 L1371.5,367.4 L1377.1,372.1 L1381.6,376.1 L1385.1,379.2 L1388.0,381.7 L1390.3,383.7 L1392.2,385.4 L1393.8,386.8 L1396.0,388.6 L1398.7,391.0 Z"/></clipPath><filter id="bl" x="-5%" y="-5%" width="110%" height="110%"><feGaussianBlur stdDeviation="2.2"/></filter></defs><g clip-path="url(#loc)"><g filter="url(#bl)"><rect x="1175" y="230" width="5" height="5" fill="#2f8337"/><rect x="1180" y="230" width="5" height="5" fill="#308437"/><rect x="1185" y="230" width="5" height="5" fill="#318537"/><rect x="1190" y="230" width="5" height="5" fill="#328636"/><rect x="1195" y="230" width="5" height="5" fill="#338636"/><rect x="1200" y="230" width="5" height="5" fill="#348635"/><rect x="1205" y="230" width="5" height="5" fill="#358735"/><rect x="1210" y="230" width="5" height="5" fill="#368734"/><rect x="1170" y="235" width="5" height="5" fill="#2d8238"/><rect x="1175" y="235" width="5" height="5" fill="#2e8338"/><rect x="1180" y="235" width="5" height="5" fill="#2f8437"/><rect x="1185" y="235" width="5" height="5" fill="#318537"/><rect x="1190" y="235" width="5" height="5" fill="#328637"/><rect x="1195" y="235" width="5" height="5" fill="#338636"/><rect x="1200" y="235" width="5" height="5" fill="#348736"/><rect x="1205" y="235" width="5" height="5" fill="#358735"/><rect x="1210" y="235" width="5" height="5" fill="#368835"/><rect x="1215" y="235" width="5" height="5" fill="#378834"/><rect x="1220" y="235" width="5" height="5" fill="#388834"/><rect x="1170" y="240" width="5" height="5" fill="#2d8238"/><rect x="1175" y="240" width="5" height="5" fill="#2e8338"/><rect x="1180" y="240" width="5" height="5" fill="#2f8438"/><rect x="1185" y="240" width="5" height="5" fill="#308537"/><rect x="1190" y="240" width="5" height="5" fill="#318637"/><rect x="1195" y="240" width="5" height="5" fill="#328737"/><rect x="1200" y="240" width="5" height="5" fill="#338736"/><rect x="1205" y="240" width="5" height="5" fill="#348836"/><rect x="1210" y="240" width="5" height="5" fill="#358835"/><rect x="1215" y="240" width="5" height="5" fill="#378835"/><rect x="1220" y="240" width="5" height="5" fill="#388934"/><rect x="1225" y="240" width="5" height="5" fill="#3a8933"/><rect x="1230" y="240" width="5" height="5" fill="#418c33"/><rect x="1170" y="245" width="5" height="5" fill="#2c8238"/><rect x="1175" y="245" width="5" height="5" fill="#2d8338"/><rect x="1180" y="245" width="5" height="5" fill="#2e8438"/><rect x="1185" y="245" width="5" height="5" fill="#308538"/><rect x="1190" y="245" width="5" height="5" fill="#318638"/><rect x="1195" y="245" width="5" height="5" fill="#328737"/><rect x="1200" y="245" width="5" height="5" fill="#338837"/><rect x="1205" y="245" width="5" height="5" fill="#348836"/><rect x="1210" y="245" width="5" height="5" fill="#358936"/><rect x="1215" y="245" width="5" height="5" fill="#368935"/><rect x="1220" y="245" width="5" height="5" fill="#378934"/><rect x="1225" y="245" width="5" height="5" fill="#398934"/><rect x="1230" y="245" width="5" height="5" fill="#3f8c33"/><rect x="1235" y="245" width="5" height="5" fill="#478f32"/><rect x="1240" y="245" width="5" height="5" fill="#4e9332"/><rect x="1165" y="250" width="5" height="5" fill="#2a8139"/><rect x="1170" y="250" width="5" height="5" fill="#2b8239"/><rect x="1175" y="250" width="5" height="5" fill="#2d8339"/><rect x="1180" y="250" width="5" height="5" fill="#2e8439"/><rect x="1185" y="250" width="5" height="5" fill="#2f8538"/><rect x="1190" y="250" width="5" height="5" fill="#308638"/><rect x="1195" y="250" width="5" height="5" fill="#328738"/><rect x="1200" y="250" width="5" height="5" fill="#338837"/><rect x="1205" y="250" width="5" height="5" fill="#348937"/><rect x="1210" y="250" width="5" height="5" fill="#358936"/><rect x="1215" y="250" width="5" height="5" fill="#368936"/><rect x="1220" y="250" width="5" height="5" fill="#378a35"/><rect x="1225" y="250" width="5" height="5" fill="#388a34"/><rect x="1230" y="250" width="5" height="5" fill="#3e8c34"/><rect x="1235" y="250" width="5" height="5" fill="#459033"/><rect x="1240" y="250" width="5" height="5" fill="#4d9332"/><rect x="1245" y="250" width="5" height="5" fill="#549631"/><rect x="1165" y="255" width="5" height="5" fill="#2a8139"/><rect x="1170" y="255" width="5" height="5" fill="#2b8239"/><rect x="1175" y="255" width="5" height="5" fill="#2c8339"/><rect x="1180" y="255" width="5" height="5" fill="#2d8439"/><rect x="1185" y="255" width="5" height="5" fill="#2e8539"/><rect x="1190" y="255" width="5" height="5" fill="#308639"/><rect x="1195" y="255" width="5" height="5" fill="#318738"/><rect x="1200" y="255" width="5" height="5" fill="#328838"/><rect x="1205" y="255" width="5" height="5" fill="#348937"/><rect x="1210" y="255" width="5" height="5" fill="#358937"/><rect x="1215" y="255" width="5" height="5" fill="#368a36"/><rect x="1220" y="255" width="5" height="5" fill="#378a35"/><rect x="1225" y="255" width="5" height="5" fill="#388b35"/><rect x="1230" y="255" width="5" height="5" fill="#3c8c34"/><rect x="1235" y="255" width="5" height="5" fill="#448f33"/><rect x="1240" y="255" width="5" height="5" fill="#4c9332"/><rect x="1245" y="255" width="5" height="5" fill="#539632"/><rect x="1250" y="255" width="5" height="5" fill="#5b9a31"/><rect x="1165" y="260" width="5" height="5" fill="#29803a"/><rect x="1170" y="260" width="5" height="5" fill="#2a813a"/><rect x="1175" y="260" width="5" height="5" fill="#2b833a"/><rect x="1180" y="260" width="5" height="5" fill="#2c8439"/><rect x="1185" y="260" width="5" height="5" fill="#2e8539"/><rect x="1190" y="260" width="5" height="5" fill="#2f8639"/><rect x="1195" y="260" width="5" height="5" fill="#308739"/><rect x="1200" y="260" width="5" height="5" fill="#328838"/><rect x="1205" y="260" width="5" height="5" fill="#338938"/><rect x="1210" y="260" width="5" height="5" fill="#348a37"/><rect x="1215" y="260" width="5" height="5" fill="#368a37"/><rect x="1220" y="260" width="5" height="5" fill="#378b36"/><rect x="1225" y="260" width="5" height="5" fill="#388b35"/><rect x="1230" y="260" width="5" height="5" fill="#3a8c35"/><rect x="1235" y="260" width="5" height="5" fill="#428f34"/><rect x="1240" y="260" width="5" height="5" fill="#4a9333"/><rect x="1245" y="260" width="5" height="5" fill="#539732"/><rect x="1250" y="260" width="5" height="5" fill="#5b9a31"/><rect x="1255" y="260" width="5" height="5" fill="#639e30"/><rect x="1260" y="260" width="5" height="5" fill="#6ba12f"/><rect x="1165" y="265" width="5" height="5" fill="#28803a"/><rect x="1170" y="265" width="5" height="5" fill="#29813a"/><rect x="1175" y="265" width="5" height="5" fill="#2a823a"/><rect x="1180" y="265" width="5" height="5" fill="#2c843a"/><rect x="1185" y="265" width="5" height="5" fill="#2d853a"/><rect x="1190" y="265" width="5" height="5" fill="#2e8639"/><rect x="1195" y="265" width="5" height="5" fill="#308739"/><rect x="1200" y="265" width="5" height="5" fill="#318839"/><rect x="1205" y="265" width="5" height="5" fill="#338938"/><rect x="1210" y="265" width="5" height="5" fill="#348a38"/><rect x="1215" y="265" width="5" height="5" fill="#358b37"/><rect x="1220" y="265" width="5" height="5" fill="#378b37"/><rect x="1225" y="265" width="5" height="5" fill="#388c36"/><rect x="1230" y="265" width="5" height="5" fill="#398c35"/><rect x="1235" y="265" width="5" height="5" fill="#408f34"/><rect x="1240" y="265" width="5" height="5" fill="#499333"/><rect x="1245" y="265" width="5" height="5" fill="#529732"/><rect x="1250" y="265" width="5" height="5" fill="#5a9b32"/><rect x="1255" y="265" width="5" height="5" fill="#639e31"/><rect x="1260" y="265" width="5" height="5" fill="#6ca230"/><rect x="1265" y="265" width="5" height="5" fill="#74a62f"/><rect x="1165" y="270" width="5" height="5" fill="#27803b"/><rect x="1170" y="270" width="5" height="5" fill="#28813a"/><rect x="1175" y="270" width="5" height="5" fill="#29823a"/><rect x="1180" y="270" width="5" height="5" fill="#2b833a"/><rect x="1185" y="270" width="5" height="5" fill="#2c853a"/><rect x="1190" y="270" width="5" height="5" fill="#2e863a"/><rect x="1195" y="270" width="5" height="5" fill="#2f873a"/><rect x="1200" y="270" width="5" height="5" fill="#318839"/><rect x="1205" y="270" width="5" height="5" fill="#328939"/><rect x="1210" y="270" width="5" height="5" fill="#348a38"/><rect x="1215" y="270" width="5" height="5" fill="#358b38"/><rect x="1220" y="270" width="5" height="5" fill="#368c37"/><rect x="1225" y="270" width="5" height="5" fill="#388c36"/><rect x="1230" y="270" width="5" height="5" fill="#398d36"/><rect x="1235" y="270" width="5" height="5" fill="#3e8f35"/><rect x="1240" y="270" width="5" height="5" fill="#479334"/><rect x="1245" y="270" width="5" height="5" fill="#509733"/><rect x="1250" y="270" width="5" height="5" fill="#5a9b32"/><rect x="1255" y="270" width="5" height="5" fill="#639f31"/><rect x="1260" y="270" width="5" height="5" fill="#6ca330"/><rect x="1265" y="270" width="5" height="5" fill="#75a72f"/><rect x="1270" y="270" width="5" height="5" fill="#7daa2f"/><rect x="1165" y="275" width="5" height="5" fill="#27803e"/><rect x="1170" y="275" width="5" height="5" fill="#28803c"/><rect x="1175" y="275" width="5" height="5" fill="#29823b"/><rect x="1180" y="275" width="5" height="5" fill="#2a833b"/><rect x="1185" y="275" width="5" height="5" fill="#2b843b"/><rect x="1190" y="275" width="5" height="5" fill="#2d863a"/><rect x="1195" y="275" width="5" height="5" fill="#2e873a"/><rect x="1200" y="275" width="5" height="5" fill="#30883a"/><rect x="1205" y="275" width="5" height="5" fill="#318939"/><rect x="1210" y="275" width="5" height="5" fill="#338a39"/><rect x="1215" y="275" width="5" height="5" fill="#348b38"/><rect x="1220" y="275" width="5" height="5" fill="#368c38"/><rect x="1225" y="275" width="5" height="5" fill="#378d37"/><rect x="1230" y="275" width="5" height="5" fill="#398d36"/><rect x="1235" y="275" width="5" height="5" fill="#3c8e35"/><rect x="1240" y="275" width="5" height="5" fill="#459334"/><rect x="1245" y="275" width="5" height="5" fill="#4f9733"/><rect x="1250" y="275" width="5" height="5" fill="#599b32"/><rect x="1255" y="275" width="5" height="5" fill="#63a031"/><rect x="1260" y="275" width="5" height="5" fill="#6ca430"/><rect x="1265" y="275" width="5" height="5" fill="#76a82f"/><rect x="1270" y="275" width="5" height="5" fill="#7fac2f"/><rect x="1275" y="275" width="5" height="5" fill="#86af2f"/><rect x="1165" y="280" width="5" height="5" fill="#278041"/><rect x="1170" y="280" width="5" height="5" fill="#28803e"/><rect x="1175" y="280" width="5" height="5" fill="#28813c"/><rect x="1180" y="280" width="5" height="5" fill="#29823b"/><rect x="1185" y="280" width="5" height="5" fill="#2a843b"/><rect x="1190" y="280" width="5" height="5" fill="#2c853b"/><rect x="1195" y="280" width="5" height="5" fill="#2d873b"/><rect x="1200" y="280" width="5" height="5" fill="#2f883a"/><rect x="1205" y="280" width="5" height="5" fill="#31893a"/><rect x="1210" y="280" width="5" height="5" fill="#328a39"/><rect x="1215" y="280" width="5" height="5" fill="#348c39"/><rect x="1220" y="280" width="5" height="5" fill="#358c38"/><rect x="1225" y="280" width="5" height="5" fill="#378d37"/><rect x="1230" y="280" width="5" height="5" fill="#398e37"/><rect x="1235" y="280" width="5" height="5" fill="#3a8e36"/><rect x="1240" y="280" width="5" height="5" fill="#439235"/><rect x="1245" y="280" width="5" height="5" fill="#4d9734"/><rect x="1250" y="280" width="5" height="5" fill="#589c33"/><rect x="1255" y="280" width="5" height="5" fill="#62a032"/><rect x="1260" y="280" width="5" height="5" fill="#6da531"/><rect x="1265" y="280" width="5" height="5" fill="#77a930"/><rect x="1270" y="280" width="5" height="5" fill="#80ad2f"/><rect x="1275" y="280" width="5" height="5" fill="#88b02f"/><rect x="1280" y="280" width="5" height="5" fill="#8fb32f"/><rect x="1285" y="280" width="5" height="5" fill="#97b62e"/><rect x="1165" y="285" width="5" height="5" fill="#278044"/><rect x="1170" y="285" width="5" height="5" fill="#288141"/><rect x="1175" y="285" width="5" height="5" fill="#28813f"/><rect x="1180" y="285" width="5" height="5" fill="#28823c"/><rect x="1185" y="285" width="5" height="5" fill="#29833b"/><rect x="1190" y="285" width="5" height="5" fill="#2b853b"/><rect x="1195" y="285" width="5" height="5" fill="#2c863b"/><rect x="1200" y="285" width="5" height="5" fill="#2e883b"/><rect x="1205" y="285" width="5" height="5" fill="#30893a"/><rect x="1210" y="285" width="5" height="5" fill="#318a3a"/><rect x="1215" y="285" width="5" height="5" fill="#338c39"/><rect x="1220" y="285" width="5" height="5" fill="#358d39"/><rect x="1225" y="285" width="5" height="5" fill="#378d38"/><rect x="1230" y="285" width="5" height="5" fill="#388e37"/><rect x="1235" y="285" width="5" height="5" fill="#3a8f36"/><rect x="1240" y="285" width="5" height="5" fill="#419235"/><rect x="1245" y="285" width="5" height="5" fill="#4c9734"/><rect x="1250" y="285" width="5" height="5" fill="#579c33"/><rect x="1255" y="285" width="5" height="5" fill="#62a132"/><rect x="1260" y="285" width="5" height="5" fill="#6da631"/><rect x="1265" y="285" width="5" height="5" fill="#78ab30"/><rect x="1270" y="285" width="5" height="5" fill="#81af2f"/><rect x="1275" y="285" width="5" height="5" fill="#8ab22f"/><rect x="1280" y="285" width="5" height="5" fill="#92b52f"/><rect x="1285" y="285" width="5" height="5" fill="#9ab82f"/><rect x="1290" y="285" width="5" height="5" fill="#a1bb2e"/><rect x="1165" y="290" width="5" height="5" fill="#278047"/><rect x="1170" y="290" width="5" height="5" fill="#288144"/><rect x="1175" y="290" width="5" height="5" fill="#288142"/><rect x="1180" y="290" width="5" height="5" fill="#28823f"/><rect x="1185" y="290" width="5" height="5" fill="#28833d"/><rect x="1190" y="290" width="5" height="5" fill="#2a843c"/><rect x="1195" y="290" width="5" height="5" fill="#2b863c"/><rect x="1200" y="290" width="5" height="5" fill="#2d873b"/><rect x="1205" y="290" width="5" height="5" fill="#2f893b"/><rect x="1210" y="290" width="5" height="5" fill="#308a3b"/><rect x="1215" y="290" width="5" height="5" fill="#328b3a"/><rect x="1220" y="290" width="5" height="5" fill="#348c39"/><rect x="1225" y="290" width="5" height="5" fill="#368d39"/><rect x="1230" y="290" width="5" height="5" fill="#388e38"/><rect x="1235" y="290" width="5" height="5" fill="#3a8f37"/><rect x="1240" y="290" width="5" height="5" fill="#3e9136"/><rect x="1245" y="290" width="5" height="5" fill="#499635"/><rect x="1250" y="290" width="5" height="5" fill="#559c34"/><rect x="1255" y="290" width="5" height="5" fill="#61a133"/><rect x="1260" y="290" width="5" height="5" fill="#6da632"/><rect x="1265" y="290" width="5" height="5" fill="#79ac30"/><rect x="1270" y="290" width="5" height="5" fill="#83b030"/><rect x="1275" y="290" width="5" height="5" fill="#8cb430"/><rect x="1280" y="290" width="5" height="5" fill="#95b72f"/><rect x="1285" y="290" width="5" height="5" fill="#9dba2f"/><rect x="1290" y="290" width="5" height="5" fill="#a5bd2f"/><rect x="1295" y="290" width="5" height="5" fill="#adc02e"/><rect x="1165" y="295" width="5" height="5" fill="#27804a"/><rect x="1170" y="295" width="5" height="5" fill="#288048"/><rect x="1175" y="295" width="5" height="5" fill="#288145"/><rect x="1180" y="295" width="5" height="5" fill="#288243"/><rect x="1185" y="295" width="5" height="5" fill="#288340"/><rect x="1190" y="295" width="5" height="5" fill="#29843d"/><rect x="1195" y="295" width="5" height="5" fill="#2a853c"/><rect x="1200" y="295" width="5" height="5" fill="#2c873c"/><rect x="1205" y="295" width="5" height="5" fill="#2e883c"/><rect x="1210" y="295" width="5" height="5" fill="#2f8a3b"/><rect x="1215" y="295" width="5" height="5" fill="#318b3b"/><rect x="1220" y="295" width="5" height="5" fill="#338c3a"/><rect x="1225" y="295" width="5" height="5" fill="#358d39"/><rect x="1230" y="295" width="5" height="5" fill="#378e38"/><rect x="1235" y="295" width="5" height="5" fill="#398f37"/><rect x="1240" y="295" width="5" height="5" fill="#3b9037"/><rect x="1245" y="295" width="5" height="5" fill="#479635"/><rect x="1250" y="295" width="5" height="5" fill="#549c34"/><rect x="1255" y="295" width="5" height="5" fill="#60a133"/><rect x="1260" y="295" width="5" height="5" fill="#6da732"/><rect x="1265" y="295" width="5" height="5" fill="#7aad31"/><rect x="1270" y="295" width="5" height="5" fill="#85b230"/><rect x="1275" y="295" width="5" height="5" fill="#8eb530"/><rect x="1280" y="295" width="5" height="5" fill="#98b930"/><rect x="1285" y="295" width="5" height="5" fill="#a1bd2f"/><rect x="1290" y="295" width="5" height="5" fill="#a9c02f"/><rect x="1295" y="295" width="5" height="5" fill="#b1c32f"/><rect x="1300" y="295" width="5" height="5" fill="#b9c62f"/><rect x="1165" y="300" width="5" height="5" fill="#27804d"/><rect x="1170" y="300" width="5" height="5" fill="#28804b"/><rect x="1175" y="300" width="5" height="5" fill="#288149"/><rect x="1180" y="300" width="5" height="5" fill="#288246"/><rect x="1185" y="300" width="5" height="5" fill="#288344"/><rect x="1190" y="300" width="5" height="5" fill="#298440"/><rect x="1195" y="300" width="5" height="5" fill="#29853d"/><rect x="1200" y="300" width="5" height="5" fill="#2a863c"/><rect x="1205" y="300" width="5" height="5" fill="#2c883c"/><rect x="1210" y="300" width="5" height="5" fill="#2e893c"/><rect x="1215" y="300" width="5" height="5" fill="#308a3b"/><rect x="1220" y="300" width="5" height="5" fill="#328b3a"/><rect x="1225" y="300" width="5" height="5" fill="#348c39"/><rect x="1230" y="300" width="5" height="5" fill="#368d39"/><rect x="1235" y="300" width="5" height="5" fill="#388f38"/><rect x="1240" y="300" width="5" height="5" fill="#3b9037"/><rect x="1245" y="300" width="5" height="5" fill="#449536"/><rect x="1250" y="300" width="5" height="5" fill="#529b35"/><rect x="1255" y="300" width="5" height="5" fill="#5fa234"/><rect x="1260" y="300" width="5" height="5" fill="#6da832"/><rect x="1265" y="300" width="5" height="5" fill="#7bae31"/><rect x="1270" y="300" width="5" height="5" fill="#86b330"/><rect x="1275" y="300" width="5" height="5" fill="#91b730"/><rect x="1280" y="300" width="5" height="5" fill="#9bbb30"/><rect x="1285" y="300" width="5" height="5" fill="#a4bf30"/><rect x="1290" y="300" width="5" height="5" fill="#aec32f"/><rect x="1295" y="300" width="5" height="5" fill="#b7c62f"/><rect x="1300" y="300" width="5" height="5" fill="#bfca2f"/><rect x="1305" y="300" width="5" height="5" fill="#c3ca2e"/><rect x="1165" y="305" width="5" height="5" fill="#278051"/><rect x="1170" y="305" width="5" height="5" fill="#28804f"/><rect x="1175" y="305" width="5" height="5" fill="#28814d"/><rect x="1180" y="305" width="5" height="5" fill="#28824a"/><rect x="1185" y="305" width="5" height="5" fill="#288347"/><rect x="1190" y="305" width="5" height="5" fill="#298444"/><rect x="1195" y="305" width="5" height="5" fill="#298541"/><rect x="1200" y="305" width="5" height="5" fill="#29853d"/><rect x="1205" y="305" width="5" height="5" fill="#2b873d"/><rect x="1210" y="305" width="5" height="5" fill="#2d883c"/><rect x="1215" y="305" width="5" height="5" fill="#2f893b"/><rect x="1220" y="305" width="5" height="5" fill="#318a3b"/><rect x="1225" y="305" width="5" height="5" fill="#338c3a"/><rect x="1230" y="305" width="5" height="5" fill="#358d39"/><rect x="1235" y="305" width="5" height="5" fill="#378e38"/><rect x="1240" y="305" width="5" height="5" fill="#3a9037"/><rect x="1245" y="305" width="5" height="5" fill="#409336"/><rect x="1250" y="305" width="5" height="5" fill="#4f9a35"/><rect x="1255" y="305" width="5" height="5" fill="#5ea234"/><rect x="1260" y="305" width="5" height="5" fill="#6da933"/><rect x="1265" y="305" width="5" height="5" fill="#7caf31"/><rect x="1270" y="305" width="5" height="5" fill="#88b531"/><rect x="1275" y="305" width="5" height="5" fill="#94b930"/><rect x="1280" y="305" width="5" height="5" fill="#9ebe30"/><rect x="1285" y="305" width="5" height="5" fill="#a9c230"/><rect x="1290" y="305" width="5" height="5" fill="#b3c630"/><rect x="1295" y="305" width="5" height="5" fill="#bcca2f"/><rect x="1300" y="305" width="5" height="5" fill="#c4cc2f"/><rect x="1305" y="305" width="5" height="5" fill="#c6cb2d"/><rect x="1310" y="305" width="5" height="5" fill="#c9ca2c"/><rect x="1165" y="310" width="5" height="5" fill="#278055"/><rect x="1170" y="310" width="5" height="5" fill="#288053"/><rect x="1175" y="310" width="5" height="5" fill="#288151"/><rect x="1180" y="310" width="5" height="5" fill="#28824e"/><rect x="1185" y="310" width="5" height="5" fill="#28834c"/><rect x="1190" y="310" width="5" height="5" fill="#298449"/><rect x="1195" y="310" width="5" height="5" fill="#298545"/><rect x="1200" y="310" width="5" height="5" fill="#298642"/><rect x="1205" y="310" width="5" height="5" fill="#29863e"/><rect x="1210" y="310" width="5" height="5" fill="#2b873d"/><rect x="1215" y="310" width="5" height="5" fill="#2d893c"/><rect x="1220" y="310" width="5" height="5" fill="#2f8a3b"/><rect x="1225" y="310" width="5" height="5" fill="#318b3a"/><rect x="1230" y="310" width="5" height="5" fill="#348c3a"/><rect x="1235" y="310" width="5" height="5" fill="#368e39"/><rect x="1240" y="310" width="5" height="5" fill="#398f38"/><rect x="1245" y="310" width="5" height="5" fill="#3b9037"/><rect x="1250" y="310" width="5" height="5" fill="#4c9935"/><rect x="1255" y="310" width="5" height="5" fill="#5ca134"/><rect x="1260" y="310" width="5" height="5" fill="#6da933"/><rect x="1265" y="310" width="5" height="5" fill="#7db132"/><rect x="1270" y="310" width="5" height="5" fill="#8ab731"/><rect x="1275" y="310" width="5" height="5" fill="#97bc31"/><rect x="1280" y="310" width="5" height="5" fill="#a3c130"/><rect x="1285" y="310" width="5" height="5" fill="#aec530"/><rect x="1290" y="310" width="5" height="5" fill="#b9ca30"/><rect x="1295" y="310" width="5" height="5" fill="#c3ce30"/><rect x="1300" y="310" width="5" height="5" fill="#c7ce2e"/><rect x="1305" y="310" width="5" height="5" fill="#cacc2d"/><rect x="1310" y="310" width="5" height="5" fill="#cccb2b"/><rect x="1315" y="310" width="5" height="5" fill="#cfca2a"/><rect x="1320" y="310" width="5" height="5" fill="#d1c929"/><rect x="1165" y="315" width="5" height="5" fill="#277f59"/><rect x="1170" y="315" width="5" height="5" fill="#288057"/><rect x="1175" y="315" width="5" height="5" fill="#288155"/><rect x="1180" y="315" width="5" height="5" fill="#288253"/><rect x="1185" y="315" width="5" height="5" fill="#288350"/><rect x="1190" y="315" width="5" height="5" fill="#29844d"/><rect x="1195" y="315" width="5" height="5" fill="#29854a"/><rect x="1200" y="315" width="5" height="5" fill="#298646"/><rect x="1205" y="315" width="5" height="5" fill="#298642"/><rect x="1210" y="315" width="5" height="5" fill="#2a873e"/><rect x="1215" y="315" width="5" height="5" fill="#2b883d"/><rect x="1220" y="315" width="5" height="5" fill="#2e893c"/><rect x="1225" y="315" width="5" height="5" fill="#308a3b"/><rect x="1230" y="315" width="5" height="5" fill="#328b3a"/><rect x="1235" y="315" width="5" height="5" fill="#358d39"/><rect x="1240" y="315" width="5" height="5" fill="#388e38"/><rect x="1245" y="315" width="5" height="5" fill="#3b9037"/><rect x="1250" y="315" width="5" height="5" fill="#489736"/><rect x="1255" y="315" width="5" height="5" fill="#599f34"/><rect x="1260" y="315" width="5" height="5" fill="#6ca933"/><rect x="1265" y="315" width="5" height="5" fill="#7eb232"/><rect x="1270" y="315" width="5" height="5" fill="#8db831"/><rect x="1275" y="315" width="5" height="5" fill="#9abe31"/><rect x="1280" y="315" width="5" height="5" fill="#a7c331"/><rect x="1285" y="315" width="5" height="5" fill="#b3c931"/><rect x="1290" y="315" width="5" height="5" fill="#bfcd30"/><rect x="1295" y="315" width="5" height="5" fill="#c8d030"/><rect x="1300" y="315" width="5" height="5" fill="#cbcf2e"/><rect x="1305" y="315" width="5" height="5" fill="#cece2c"/><rect x="1310" y="315" width="5" height="5" fill="#d1cd2b"/><rect x="1315" y="315" width="5" height="5" fill="#d3cb29"/><rect x="1320" y="315" width="5" height="5" fill="#d5ca28"/><rect x="1325" y="315" width="5" height="5" fill="#d7c927"/><rect x="1165" y="320" width="5" height="5" fill="#277f5d"/><rect x="1170" y="320" width="5" height="5" fill="#28805b"/><rect x="1175" y="320" width="5" height="5" fill="#288159"/><rect x="1180" y="320" width="5" height="5" fill="#288257"/><rect x="1185" y="320" width="5" height="5" fill="#288355"/><rect x="1190" y="320" width="5" height="5" fill="#298452"/><rect x="1195" y="320" width="5" height="5" fill="#29854f"/><rect x="1200" y="320" width="5" height="5" fill="#29864b"/><rect x="1205" y="320" width="5" height="5" fill="#298647"/><rect x="1210" y="320" width="5" height="5" fill="#2a8743"/><rect x="1215" y="320" width="5" height="5" fill="#2a873d"/><rect x="1220" y="320" width="5" height="5" fill="#2c883d"/><rect x="1225" y="320" width="5" height="5" fill="#2e893c"/><rect x="1230" y="320" width="5" height="5" fill="#318a3b"/><rect x="1235" y="320" width="5" height="5" fill="#338c3a"/><rect x="1240" y="320" width="5" height="5" fill="#368e38"/><rect x="1245" y="320" width="5" height="5" fill="#398f37"/><rect x="1250" y="320" width="5" height="5" fill="#439436"/><rect x="1255" y="320" width="5" height="5" fill="#569e35"/><rect x="1260" y="320" width="5" height="5" fill="#6aa833"/><rect x="1265" y="320" width="5" height="5" fill="#7fb232"/><rect x="1270" y="320" width="5" height="5" fill="#8fba32"/><rect x="1275" y="320" width="5" height="5" fill="#9ec131"/><rect x="1280" y="320" width="5" height="5" fill="#adc731"/><rect x="1285" y="320" width="5" height="5" fill="#bacc31"/><rect x="1290" y="320" width="5" height="5" fill="#c7d232"/><rect x="1295" y="320" width="5" height="5" fill="#ccd232"/><rect x="1300" y="320" width="5" height="5" fill="#d0d132"/><rect x="1305" y="320" width="5" height="5" fill="#d3d030"/><rect x="1310" y="320" width="5" height="5" fill="#d6cf2f"/><rect x="1315" y="320" width="5" height="5" fill="#d8cd2c"/><rect x="1320" y="320" width="5" height="5" fill="#dacc29"/><rect x="1325" y="320" width="5" height="5" fill="#dccb26"/><rect x="1330" y="320" width="5" height="5" fill="#dcc725"/><rect x="1165" y="325" width="5" height="5" fill="#288167"/><rect x="1170" y="325" width="5" height="5" fill="#288162"/><rect x="1175" y="325" width="5" height="5" fill="#28815e"/><rect x="1180" y="325" width="5" height="5" fill="#28825c"/><rect x="1185" y="325" width="5" height="5" fill="#28835a"/><rect x="1190" y="325" width="5" height="5" fill="#298457"/><rect x="1195" y="325" width="5" height="5" fill="#298554"/><rect x="1200" y="325" width="5" height="5" fill="#298551"/><rect x="1205" y="325" width="5" height="5" fill="#29864d"/><rect x="1210" y="325" width="5" height="5" fill="#2a8748"/><rect x="1215" y="325" width="5" height="5" fill="#2a8743"/><rect x="1220" y="325" width="5" height="5" fill="#2a873d"/><rect x="1225" y="325" width="5" height="5" fill="#2c883c"/><rect x="1230" y="325" width="5" height="5" fill="#2f893b"/><rect x="1235" y="325" width="5" height="5" fill="#328b3a"/><rect x="1240" y="325" width="5" height="5" fill="#358d39"/><rect x="1245" y="325" width="5" height="5" fill="#388f38"/><rect x="1250" y="325" width="5" height="5" fill="#3d9136"/><rect x="1255" y="325" width="5" height="5" fill="#539c35"/><rect x="1260" y="325" width="5" height="5" fill="#69a733"/><rect x="1265" y="325" width="5" height="5" fill="#7fb232"/><rect x="1270" y="325" width="5" height="5" fill="#91bb32"/><rect x="1275" y="325" width="5" height="5" fill="#a4c435"/><rect x="1280" y="325" width="5" height="5" fill="#b6cc39"/><rect x="1285" y="325" width="5" height="5" fill="#c5d33e"/><rect x="1290" y="325" width="5" height="5" fill="#d0d742"/><rect x="1295" y="325" width="5" height="5" fill="#d4d644"/><rect x="1300" y="325" width="5" height="5" fill="#d8d544"/><rect x="1305" y="325" width="5" height="5" fill="#dad442"/><rect x="1310" y="325" width="5" height="5" fill="#ddd33e"/><rect x="1315" y="325" width="5" height="5" fill="#ded139"/><rect x="1320" y="325" width="5" height="5" fill="#e0cf33"/><rect x="1325" y="325" width="5" height="5" fill="#e0c92c"/><rect x="1330" y="325" width="5" height="5" fill="#dfc126"/><rect x="1335" y="325" width="5" height="5" fill="#deba22"/><rect x="1165" y="330" width="5" height="5" fill="#298373"/><rect x="1170" y="330" width="5" height="5" fill="#29836e"/><rect x="1175" y="330" width="5" height="5" fill="#288369"/><rect x="1180" y="330" width="5" height="5" fill="#288263"/><rect x="1185" y="330" width="5" height="5" fill="#28835f"/><rect x="1190" y="330" width="5" height="5" fill="#29845d"/><rect x="1195" y="330" width="5" height="5" fill="#29855a"/><rect x="1200" y="330" width="5" height="5" fill="#298557"/><rect x="1205" y="330" width="5" height="5" fill="#298653"/><rect x="1210" y="330" width="5" height="5" fill="#2a874e"/><rect x="1215" y="330" width="5" height="5" fill="#2a8749"/><rect x="1220" y="330" width="5" height="5" fill="#2a8743"/><rect x="1225" y="330" width="5" height="5" fill="#2a873d"/><rect x="1230" y="330" width="5" height="5" fill="#2d883c"/><rect x="1235" y="330" width="5" height="5" fill="#308a3b"/><rect x="1240" y="330" width="5" height="5" fill="#338c3a"/><rect x="1245" y="330" width="5" height="5" fill="#378e38"/><rect x="1250" y="330" width="5" height="5" fill="#3b9037"/><rect x="1255" y="330" width="5" height="5" fill="#4e9a35"/><rect x="1260" y="330" width="5" height="5" fill="#67a634"/><rect x="1265" y="330" width="5" height="5" fill="#84b538"/><rect x="1270" y="330" width="5" height="5" fill="#9bc040"/><rect x="1275" y="330" width="5" height="5" fill="#b1cb49"/><rect x="1280" y="330" width="5" height="5" fill="#c4d552"/><rect x="1285" y="330" width="5" height="5" fill="#d4dc5a"/><rect x="1290" y="330" width="5" height="5" fill="#dadd5e"/><rect x="1295" y="330" width="5" height="5" fill="#dddc60"/><rect x="1300" y="330" width="5" height="5" fill="#e0db5f"/><rect x="1305" y="330" width="5" height="5" fill="#e2da5c"/><rect x="1310" y="330" width="5" height="5" fill="#e4d855"/><rect x="1315" y="330" width="5" height="5" fill="#e5d64d"/><rect x="1320" y="330" width="5" height="5" fill="#e4ce43"/><rect x="1325" y="330" width="5" height="5" fill="#e3c538"/><rect x="1330" y="330" width="5" height="5" fill="#e1bc2d"/><rect x="1335" y="330" width="5" height="5" fill="#e0b424"/><rect x="1340" y="330" width="5" height="5" fill="#dfad1f"/><rect x="1165" y="335" width="5" height="5" fill="#29857f"/><rect x="1170" y="335" width="5" height="5" fill="#29857b"/><rect x="1175" y="335" width="5" height="5" fill="#298576"/><rect x="1180" y="335" width="5" height="5" fill="#298571"/><rect x="1185" y="335" width="5" height="5" fill="#29856c"/><rect x="1190" y="335" width="5" height="5" fill="#298465"/><rect x="1195" y="335" width="5" height="5" fill="#298460"/><rect x="1200" y="335" width="5" height="5" fill="#29855d"/><rect x="1205" y="335" width="5" height="5" fill="#29865a"/><rect x="1210" y="335" width="5" height="5" fill="#2a8755"/><rect x="1215" y="335" width="5" height="5" fill="#2a8750"/><rect x="1220" y="335" width="5" height="5" fill="#2a874a"/><rect x="1225" y="335" width="5" height="5" fill="#2a8744"/><rect x="1230" y="335" width="5" height="5" fill="#2a873d"/><rect x="1235" y="335" width="5" height="5" fill="#2d893c"/><rect x="1240" y="335" width="5" height="5" fill="#318b3b"/><rect x="1245" y="335" width="5" height="5" fill="#358d39"/><rect x="1250" y="335" width="5" height="5" fill="#3a8f38"/><rect x="1255" y="335" width="5" height="5" fill="#4e9a3c"/><rect x="1260" y="335" width="5" height="5" fill="#71ac45"/><rect x="1265" y="335" width="5" height="5" fill="#93be50"/><rect x="1270" y="335" width="5" height="5" fill="#adcb5d"/><rect x="1275" y="335" width="5" height="5" fill="#c3d66a"/><rect x="1280" y="335" width="5" height="5" fill="#d4de76"/><rect x="1285" y="335" width="5" height="5" fill="#dfe37e"/><rect x="1290" y="335" width="5" height="5" fill="#e4e482"/><rect x="1295" y="335" width="5" height="5" fill="#e7e382"/><rect x="1300" y="335" width="5" height="5" fill="#e8e27f"/><rect x="1305" y="335" width="5" height="5" fill="#eae079"/><rect x="1310" y="335" width="5" height="5" fill="#eadd6f"/><rect x="1315" y="335" width="5" height="5" fill="#e9d463"/><rect x="1320" y="335" width="5" height="5" fill="#e7cb54"/><rect x="1325" y="335" width="5" height="5" fill="#e6c145"/><rect x="1330" y="335" width="5" height="5" fill="#e4b735"/><rect x="1335" y="335" width="5" height="5" fill="#e3ad28"/><rect x="1340" y="335" width="5" height="5" fill="#e2a61f"/><rect x="1345" y="335" width="5" height="5" fill="#e1a01d"/><rect x="1165" y="340" width="5" height="5" fill="#2a878b"/><rect x="1170" y="340" width="5" height="5" fill="#2a8788"/><rect x="1175" y="340" width="5" height="5" fill="#2a8784"/><rect x="1180" y="340" width="5" height="5" fill="#2a8780"/><rect x="1185" y="340" width="5" height="5" fill="#2a877b"/><rect x="1190" y="340" width="5" height="5" fill="#2a8775"/><rect x="1195" y="340" width="5" height="5" fill="#2a876f"/><rect x="1200" y="340" width="5" height="5" fill="#298667"/><rect x="1205" y="340" width="5" height="5" fill="#298661"/><rect x="1210" y="340" width="5" height="5" fill="#2a875d"/><rect x="1215" y="340" width="5" height="5" fill="#2a8758"/><rect x="1220" y="340" width="5" height="5" fill="#2a8752"/><rect x="1225" y="340" width="5" height="5" fill="#2a874c"/><rect x="1230" y="340" width="5" height="5" fill="#2a8744"/><rect x="1235" y="340" width="5" height="5" fill="#2a873d"/><rect x="1240" y="340" width="5" height="5" fill="#2e893c"/><rect x="1245" y="340" width="5" height="5" fill="#378e3e"/><rect x="1250" y="340" width="5" height="5" fill="#469647"/><rect x="1255" y="340" width="5" height="5" fill="#5da354"/><rect x="1260" y="340" width="5" height="5" fill="#86b864"/><rect x="1265" y="340" width="5" height="5" fill="#a9ca73"/><rect x="1270" y="340" width="5" height="5" fill="#c2d784"/><rect x="1275" y="340" width="5" height="5" fill="#d5e191"/><rect x="1280" y="340" width="5" height="5" fill="#e3e89c"/><rect x="1285" y="340" width="5" height="5" fill="#e9e9a2"/><rect x="1290" y="340" width="5" height="5" fill="#eceaa5"/><rect x="1295" y="340" width="5" height="5" fill="#efeaa4"/><rect x="1300" y="340" width="5" height="5" fill="#f0e89e"/><rect x="1305" y="340" width="5" height="5" fill="#efe495"/><rect x="1310" y="340" width="5" height="5" fill="#eedc88"/><rect x="1315" y="340" width="5" height="5" fill="#ecd378"/><rect x="1320" y="340" width="5" height="5" fill="#eac865"/><rect x="1325" y="340" width="5" height="5" fill="#e9bd51"/><rect x="1330" y="340" width="5" height="5" fill="#e7b23d"/><rect x="1335" y="340" width="5" height="5" fill="#e6a72c"/><rect x="1340" y="340" width="5" height="5" fill="#e49e20"/><rect x="1345" y="340" width="5" height="5" fill="#e2931c"/><rect x="1350" y="340" width="5" height="5" fill="#e08a1d"/><rect x="1170" y="345" width="5" height="5" fill="#2b8996"/><rect x="1175" y="345" width="5" height="5" fill="#2b8a93"/><rect x="1180" y="345" width="5" height="5" fill="#2b8a8f"/><rect x="1185" y="345" width="5" height="5" fill="#2b8a8b"/><rect x="1190" y="345" width="5" height="5" fill="#2b8a86"/><rect x="1195" y="345" width="5" height="5" fill="#2b8a80"/><rect x="1200" y="345" width="5" height="5" fill="#2b897a"/><rect x="1205" y="345" width="5" height="5" fill="#2a8972"/><rect x="1210" y="345" width="5" height="5" fill="#2a8768"/><rect x="1215" y="345" width="5" height="5" fill="#2a8761"/><rect x="1220" y="345" width="5" height="5" fill="#2a875b"/><rect x="1225" y="345" width="5" height="5" fill="#2a8755"/><rect x="1230" y="345" width="5" height="5" fill="#2a874e"/><rect x="1235" y="345" width="5" height="5" fill="#2b8746"/><rect x="1240" y="345" width="5" height="5" fill="#358d46"/><rect x="1245" y="345" width="5" height="5" fill="#499853"/><rect x="1250" y="345" width="5" height="5" fill="#61a564"/><rect x="1255" y="345" width="5" height="5" fill="#7ab377"/><rect x="1260" y="345" width="5" height="5" fill="#a0c78a"/><rect x="1265" y="345" width="5" height="5" fill="#c1d89b"/><rect x="1270" y="345" width="5" height="5" fill="#d6e3ab"/><rect x="1275" y="345" width="5" height="5" fill="#e5ebb7"/><rect x="1280" y="345" width="5" height="5" fill="#edeebe"/><rect x="1285" y="345" width="5" height="5" fill="#f0efc2"/><rect x="1290" y="345" width="5" height="5" fill="#f2efc2"/><rect x="1295" y="345" width="5" height="5" fill="#f3efbf"/><rect x="1300" y="345" width="5" height="5" fill="#f4ebb8"/><rect x="1305" y="345" width="5" height="5" fill="#f3e5ad"/><rect x="1310" y="345" width="5" height="5" fill="#f1dc9d"/><rect x="1315" y="345" width="5" height="5" fill="#efd289"/><rect x="1320" y="345" width="5" height="5" fill="#edc672"/><rect x="1325" y="345" width="5" height="5" fill="#ecb95a"/><rect x="1330" y="345" width="5" height="5" fill="#e9aa44"/><rect x="1335" y="345" width="5" height="5" fill="#e69830"/><rect x="1340" y="345" width="5" height="5" fill="#e48923"/><rect x="1345" y="345" width="5" height="5" fill="#e17e1e"/><rect x="1350" y="345" width="5" height="5" fill="#e0771e"/><rect x="1355" y="345" width="5" height="5" fill="#de701e"/><rect x="1360" y="345" width="5" height="5" fill="#dc6a1e"/><rect x="1170" y="350" width="5" height="5" fill="#2c8ca4"/><rect x="1175" y="350" width="5" height="5" fill="#2c8ca2"/><rect x="1180" y="350" width="5" height="5" fill="#2c8c9f"/><rect x="1185" y="350" width="5" height="5" fill="#2c8d9c"/><rect x="1190" y="350" width="5" height="5" fill="#2c8d98"/><rect x="1195" y="350" width="5" height="5" fill="#2c8d93"/><rect x="1200" y="350" width="5" height="5" fill="#2c8d8e"/><rect x="1205" y="350" width="5" height="5" fill="#2c8c88"/><rect x="1210" y="350" width="5" height="5" fill="#2b8b7f"/><rect x="1215" y="350" width="5" height="5" fill="#2b8a75"/><rect x="1220" y="350" width="5" height="5" fill="#2a8869"/><rect x="1225" y="350" width="5" height="5" fill="#2a8760"/><rect x="1230" y="350" width="5" height="5" fill="#2d885b"/><rect x="1235" y="350" width="5" height="5" fill="#398f5e"/><rect x="1240" y="350" width="5" height="5" fill="#4d9a65"/><rect x="1245" y="350" width="5" height="5" fill="#66a873"/><rect x="1250" y="350" width="5" height="5" fill="#83b889"/><rect x="1255" y="350" width="5" height="5" fill="#9dc69d"/><rect x="1260" y="350" width="5" height="5" fill="#bcd6b0"/><rect x="1265" y="350" width="5" height="5" fill="#d7e5bf"/><rect x="1270" y="350" width="5" height="5" fill="#e6edcb"/><rect x="1275" y="350" width="5" height="5" fill="#f0f1d3"/><rect x="1280" y="350" width="5" height="5" fill="#f2f2d6"/><rect x="1285" y="350" width="5" height="5" fill="#f4f2d7"/><rect x="1290" y="350" width="5" height="5" fill="#f5f2d6"/><rect x="1295" y="350" width="5" height="5" fill="#f5efd2"/><rect x="1300" y="350" width="5" height="5" fill="#f5ebca"/><rect x="1305" y="350" width="5" height="5" fill="#f5e5be"/><rect x="1310" y="350" width="5" height="5" fill="#f4ddac"/><rect x="1315" y="350" width="5" height="5" fill="#f2d195"/><rect x="1320" y="350" width="5" height="5" fill="#efbf7c"/><rect x="1325" y="350" width="5" height="5" fill="#ecab62"/><rect x="1330" y="350" width="5" height="5" fill="#e99749"/><rect x="1335" y="350" width="5" height="5" fill="#e68333"/><rect x="1340" y="350" width="5" height="5" fill="#e37224"/><rect x="1345" y="350" width="5" height="5" fill="#e1681f"/><rect x="1350" y="350" width="5" height="5" fill="#df6220"/><rect x="1355" y="350" width="5" height="5" fill="#dd5c20"/><rect x="1360" y="350" width="5" height="5" fill="#dc5720"/><rect x="1365" y="350" width="5" height="5" fill="#da5320"/><rect x="1170" y="355" width="5" height="5" fill="#2d8db0"/><rect x="1175" y="355" width="5" height="5" fill="#2d8eb0"/><rect x="1180" y="355" width="5" height="5" fill="#2d8fb0"/><rect x="1185" y="355" width="5" height="5" fill="#2e90ad"/><rect x="1190" y="355" width="5" height="5" fill="#2e90ab"/><rect x="1195" y="355" width="5" height="5" fill="#2e90a7"/><rect x="1200" y="355" width="5" height="5" fill="#2e90a3"/><rect x="1205" y="355" width="5" height="5" fill="#2d909f"/><rect x="1210" y="355" width="5" height="5" fill="#2d9098"/><rect x="1215" y="355" width="5" height="5" fill="#2d8e90"/><rect x="1220" y="355" width="5" height="5" fill="#2c8d86"/><rect x="1225" y="355" width="5" height="5" fill="#308d7d"/><rect x="1230" y="355" width="5" height="5" fill="#3e9379"/><rect x="1235" y="355" width="5" height="5" fill="#559e7f"/><rect x="1240" y="355" width="5" height="5" fill="#70ad8c"/><rect x="1245" y="355" width="5" height="5" fill="#8bbc9b"/><rect x="1250" y="355" width="5" height="5" fill="#a6cbad"/><rect x="1255" y="355" width="5" height="5" fill="#bfd8c0"/><rect x="1260" y="355" width="5" height="5" fill="#d3e3cf"/><rect x="1265" y="355" width="5" height="5" fill="#e6edd8"/><rect x="1270" y="355" width="5" height="5" fill="#eff2de"/><rect x="1275" y="355" width="5" height="5" fill="#f3f4df"/><rect x="1280" y="355" width="5" height="5" fill="#f5f4df"/><rect x="1285" y="355" width="5" height="5" fill="#f6f3de"/><rect x="1290" y="355" width="5" height="5" fill="#f6f1de"/><rect x="1295" y="355" width="5" height="5" fill="#f6efdb"/><rect x="1300" y="355" width="5" height="5" fill="#f6ebd4"/><rect x="1305" y="355" width="5" height="5" fill="#f6e4c8"/><rect x="1310" y="355" width="5" height="5" fill="#f4d8b6"/><rect x="1315" y="355" width="5" height="5" fill="#f2c69e"/><rect x="1320" y="355" width="5" height="5" fill="#efb082"/><rect x="1325" y="355" width="5" height="5" fill="#eb9865"/><rect x="1330" y="355" width="5" height="5" fill="#e8804a"/><rect x="1335" y="355" width="5" height="5" fill="#e56a33"/><rect x="1340" y="355" width="5" height="5" fill="#e25925"/><rect x="1345" y="355" width="5" height="5" fill="#e05121"/><rect x="1350" y="355" width="5" height="5" fill="#de4c21"/><rect x="1355" y="355" width="5" height="5" fill="#dd4a21"/><rect x="1360" y="355" width="5" height="5" fill="#db4921"/><rect x="1365" y="355" width="5" height="5" fill="#da4721"/><rect x="1370" y="355" width="5" height="5" fill="#d94620"/><rect x="1170" y="360" width="5" height="5" fill="#2e8ab7"/><rect x="1175" y="360" width="5" height="5" fill="#2e8bb7"/><rect x="1180" y="360" width="5" height="5" fill="#2e8db8"/><rect x="1185" y="360" width="5" height="5" fill="#2e8eb8"/><rect x="1190" y="360" width="5" height="5" fill="#2f8fb8"/><rect x="1195" y="360" width="5" height="5" fill="#2f91b8"/><rect x="1200" y="360" width="5" height="5" fill="#2f93b8"/><rect x="1205" y="360" width="5" height="5" fill="#2f94b7"/><rect x="1210" y="360" width="5" height="5" fill="#2f95b3"/><rect x="1215" y="360" width="5" height="5" fill="#2f93ad"/><rect x="1220" y="360" width="5" height="5" fill="#3495a8"/><rect x="1225" y="360" width="5" height="5" fill="#449ca6"/><rect x="1230" y="360" width="5" height="5" fill="#5ca7a8"/><rect x="1235" y="360" width="5" height="5" fill="#78b4ad"/><rect x="1240" y="360" width="5" height="5" fill="#94c2b5"/><rect x="1245" y="360" width="5" height="5" fill="#b0d0c1"/><rect x="1250" y="360" width="5" height="5" fill="#c6dcce"/><rect x="1255" y="360" width="5" height="5" fill="#d6e5d9"/><rect x="1260" y="360" width="5" height="5" fill="#e0ebdf"/><rect x="1265" y="360" width="5" height="5" fill="#ebf0e0"/><rect x="1270" y="360" width="5" height="5" fill="#f3f4e0"/><rect x="1275" y="360" width="5" height="5" fill="#f5f4df"/><rect x="1280" y="360" width="5" height="5" fill="#f6f2de"/><rect x="1285" y="360" width="5" height="5" fill="#f6f0de"/><rect x="1290" y="360" width="5" height="5" fill="#f7eedd"/><rect x="1295" y="360" width="5" height="5" fill="#f6ebdd"/><rect x="1300" y="360" width="5" height="5" fill="#f6e7da"/><rect x="1305" y="360" width="5" height="5" fill="#f5ddce"/><rect x="1310" y="360" width="5" height="5" fill="#f3cdba"/><rect x="1315" y="360" width="5" height="5" fill="#f1b7a0"/><rect x="1320" y="360" width="5" height="5" fill="#ef9d82"/><rect x="1325" y="360" width="5" height="5" fill="#eb8163"/><rect x="1330" y="360" width="5" height="5" fill="#e76946"/><rect x="1335" y="360" width="5" height="5" fill="#e45530"/><rect x="1340" y="360" width="5" height="5" fill="#e14923"/><rect x="1345" y="360" width="5" height="5" fill="#e04622"/><rect x="1350" y="360" width="5" height="5" fill="#de4521"/><rect x="1355" y="360" width="5" height="5" fill="#dd4321"/><rect x="1360" y="360" width="5" height="5" fill="#dc4221"/><rect x="1365" y="360" width="5" height="5" fill="#da4121"/><rect x="1370" y="360" width="5" height="5" fill="#d94021"/><rect x="1375" y="360" width="5" height="5" fill="#d83f20"/><rect x="1170" y="365" width="5" height="5" fill="#2e87bd"/><rect x="1175" y="365" width="5" height="5" fill="#2e88be"/><rect x="1180" y="365" width="5" height="5" fill="#2f89bf"/><rect x="1185" y="365" width="5" height="5" fill="#2f8ac0"/><rect x="1190" y="365" width="5" height="5" fill="#2f8cc1"/><rect x="1195" y="365" width="5" height="5" fill="#2f8dc1"/><rect x="1200" y="365" width="5" height="5" fill="#308ec2"/><rect x="1205" y="365" width="5" height="5" fill="#3090c2"/><rect x="1210" y="365" width="5" height="5" fill="#3091c2"/><rect x="1215" y="365" width="5" height="5" fill="#3695c2"/><rect x="1220" y="365" width="5" height="5" fill="#479ec5"/><rect x="1225" y="365" width="5" height="5" fill="#60accb"/><rect x="1230" y="365" width="5" height="5" fill="#7dbbd1"/><rect x="1235" y="365" width="5" height="5" fill="#9bcad7"/><rect x="1240" y="365" width="5" height="5" fill="#b6d7dd"/><rect x="1245" y="365" width="5" height="5" fill="#cde1e2"/><rect x="1250" y="365" width="5" height="5" fill="#dbe8e5"/><rect x="1255" y="365" width="5" height="5" fill="#dfeae4"/><rect x="1260" y="365" width="5" height="5" fill="#e0ebe1"/><rect x="1265" y="365" width="5" height="5" fill="#edf1e0"/><rect x="1270" y="365" width="5" height="5" fill="#f5f4df"/><rect x="1275" y="365" width="5" height="5" fill="#f6f0de"/><rect x="1280" y="365" width="5" height="5" fill="#f6ecdd"/><rect x="1285" y="365" width="5" height="5" fill="#f6e8de"/><rect x="1290" y="365" width="5" height="5" fill="#f6e5de"/><rect x="1295" y="365" width="5" height="5" fill="#f6e4de"/><rect x="1300" y="365" width="5" height="5" fill="#f5e1db"/><rect x="1305" y="365" width="5" height="5" fill="#f4d5ce"/><rect x="1310" y="365" width="5" height="5" fill="#f2c2b7"/><rect x="1315" y="365" width="5" height="5" fill="#f0aa9b"/><rect x="1320" y="365" width="5" height="5" fill="#ed8e7a"/><rect x="1325" y="365" width="5" height="5" fill="#ea735b"/><rect x="1330" y="365" width="5" height="5" fill="#e65a3f"/><rect x="1335" y="365" width="5" height="5" fill="#e3472a"/><rect x="1340" y="365" width="5" height="5" fill="#e13f22"/><rect x="1345" y="365" width="5" height="5" fill="#e03e22"/><rect x="1350" y="365" width="5" height="5" fill="#df3d22"/><rect x="1355" y="365" width="5" height="5" fill="#dd3c21"/><rect x="1360" y="365" width="5" height="5" fill="#dc3b21"/><rect x="1365" y="365" width="5" height="5" fill="#db3b21"/><rect x="1370" y="365" width="5" height="5" fill="#d93a21"/><rect x="1375" y="365" width="5" height="5" fill="#d83921"/><rect x="1380" y="365" width="5" height="5" fill="#d73920"/><rect x="1170" y="370" width="5" height="5" fill="#2e84c4"/><rect x="1175" y="370" width="5" height="5" fill="#2f85c5"/><rect x="1180" y="370" width="5" height="5" fill="#2f86c7"/><rect x="1185" y="370" width="5" height="5" fill="#2f87c8"/><rect x="1190" y="370" width="5" height="5" fill="#3088c9"/><rect x="1195" y="370" width="5" height="5" fill="#3089cb"/><rect x="1200" y="370" width="5" height="5" fill="#308acc"/><rect x="1205" y="370" width="5" height="5" fill="#318bcd"/><rect x="1210" y="370" width="5" height="5" fill="#358ecf"/><rect x="1215" y="370" width="5" height="5" fill="#4698d3"/><rect x="1220" y="370" width="5" height="5" fill="#5fa5d8"/><rect x="1225" y="370" width="5" height="5" fill="#7cb5de"/><rect x="1230" y="370" width="5" height="5" fill="#9bc6e4"/><rect x="1235" y="370" width="5" height="5" fill="#b8d6ea"/><rect x="1240" y="370" width="5" height="5" fill="#cfe2ef"/><rect x="1245" y="370" width="5" height="5" fill="#dde9f1"/><rect x="1250" y="370" width="5" height="5" fill="#e0ebf2"/><rect x="1255" y="370" width="5" height="5" fill="#e0ebf1"/><rect x="1260" y="370" width="5" height="5" fill="#dfebed"/><rect x="1265" y="370" width="5" height="5" fill="#f6f3df"/><rect x="1270" y="370" width="5" height="5" fill="#f6e3de"/><rect x="1275" y="370" width="5" height="5" fill="#f5e2de"/><rect x="1280" y="370" width="5" height="5" fill="#f5e1de"/><rect x="1285" y="370" width="5" height="5" fill="#f5e1de"/><rect x="1290" y="370" width="5" height="5" fill="#f5e1de"/><rect x="1295" y="370" width="5" height="5" fill="#f5e1de"/><rect x="1300" y="370" width="5" height="5" fill="#f5dcd9"/><rect x="1305" y="370" width="5" height="5" fill="#f3cdc8"/><rect x="1310" y="370" width="5" height="5" fill="#f1b6ae"/><rect x="1315" y="370" width="5" height="5" fill="#ee998f"/><rect x="1320" y="370" width="5" height="5" fill="#eb7b6d"/><rect x="1325" y="370" width="5" height="5" fill="#e85e4e"/><rect x="1330" y="370" width="5" height="5" fill="#e54735"/><rect x="1335" y="370" width="5" height="5" fill="#e33925"/><rect x="1340" y="370" width="5" height="5" fill="#e13622"/><rect x="1345" y="370" width="5" height="5" fill="#e03522"/><rect x="1350" y="370" width="5" height="5" fill="#df3522"/><rect x="1355" y="370" width="5" height="5" fill="#dd3522"/><rect x="1360" y="370" width="5" height="5" fill="#dc3421"/><rect x="1365" y="370" width="5" height="5" fill="#db3421"/><rect x="1370" y="370" width="5" height="5" fill="#da3421"/><rect x="1375" y="370" width="5" height="5" fill="#d93321"/><rect x="1380" y="370" width="5" height="5" fill="#d73321"/><rect x="1385" y="370" width="5" height="5" fill="#d63320"/><rect x="1175" y="375" width="5" height="5" fill="#307fc4"/><rect x="1180" y="375" width="5" height="5" fill="#3080c6"/><rect x="1185" y="375" width="5" height="5" fill="#3081c7"/><rect x="1190" y="375" width="5" height="5" fill="#3181c8"/><rect x="1195" y="375" width="5" height="5" fill="#3182ca"/><rect x="1200" y="375" width="5" height="5" fill="#3282cb"/><rect x="1205" y="375" width="5" height="5" fill="#3484cd"/><rect x="1210" y="375" width="5" height="5" fill="#438cd1"/><rect x="1215" y="375" width="5" height="5" fill="#5b9ad6"/><rect x="1220" y="375" width="5" height="5" fill="#78abdc"/><rect x="1225" y="375" width="5" height="5" fill="#98bde3"/><rect x="1230" y="375" width="5" height="5" fill="#b5cfe9"/><rect x="1235" y="375" width="5" height="5" fill="#ceddee"/><rect x="1240" y="375" width="5" height="5" fill="#dde6f1"/><rect x="1245" y="375" width="5" height="5" fill="#e0e8f2"/><rect x="1250" y="375" width="5" height="5" fill="#e0e7f1"/><rect x="1255" y="375" width="5" height="5" fill="#e1e5f1"/><rect x="1260" y="375" width="5" height="5" fill="#e3e0ee"/><rect x="1265" y="375" width="5" height="5" fill="#f2dde3"/><rect x="1270" y="375" width="5" height="5" fill="#f4dedf"/><rect x="1275" y="375" width="5" height="5" fill="#f4dede"/><rect x="1280" y="375" width="5" height="5" fill="#f4dede"/><rect x="1285" y="375" width="5" height="5" fill="#f5dede"/><rect x="1290" y="375" width="5" height="5" fill="#f5dede"/><rect x="1295" y="375" width="5" height="5" fill="#f5dede"/><rect x="1300" y="375" width="5" height="5" fill="#f4d3d3"/><rect x="1305" y="375" width="5" height="5" fill="#f1bebd"/><rect x="1310" y="375" width="5" height="5" fill="#eea19f"/><rect x="1315" y="375" width="5" height="5" fill="#eb817e"/><rect x="1320" y="375" width="5" height="5" fill="#e8625c"/><rect x="1325" y="375" width="5" height="5" fill="#e5473f"/><rect x="1330" y="375" width="5" height="5" fill="#e3342b"/><rect x="1335" y="375" width="5" height="5" fill="#e22c23"/><rect x="1340" y="375" width="5" height="5" fill="#e12d22"/><rect x="1345" y="375" width="5" height="5" fill="#e02d22"/><rect x="1350" y="375" width="5" height="5" fill="#df2d22"/><rect x="1355" y="375" width="5" height="5" fill="#de2d22"/><rect x="1360" y="375" width="5" height="5" fill="#dc2d22"/><rect x="1365" y="375" width="5" height="5" fill="#db2d21"/><rect x="1370" y="375" width="5" height="5" fill="#da2d21"/><rect x="1375" y="375" width="5" height="5" fill="#d92d21"/><rect x="1380" y="375" width="5" height="5" fill="#d82d21"/><rect x="1385" y="375" width="5" height="5" fill="#d72d21"/><rect x="1390" y="375" width="5" height="5" fill="#d52d20"/><rect x="1175" y="380" width="5" height="5" fill="#3179c2"/><rect x="1180" y="380" width="5" height="5" fill="#3179c3"/><rect x="1185" y="380" width="5" height="5" fill="#327ac4"/><rect x="1190" y="380" width="5" height="5" fill="#327ac5"/><rect x="1195" y="380" width="5" height="5" fill="#337ac6"/><rect x="1200" y="380" width="5" height="5" fill="#347ac7"/><rect x="1205" y="380" width="5" height="5" fill="#3e80ca"/><rect x="1210" y="380" width="5" height="5" fill="#548dd0"/><rect x="1215" y="380" width="5" height="5" fill="#719fd7"/><rect x="1220" y="380" width="5" height="5" fill="#90b2de"/><rect x="1225" y="380" width="5" height="5" fill="#aec5e5"/><rect x="1230" y="380" width="5" height="5" fill="#c8d6eb"/><rect x="1235" y="380" width="5" height="5" fill="#dae2f0"/><rect x="1240" y="380" width="5" height="5" fill="#e1e6f1"/><rect x="1245" y="380" width="5" height="5" fill="#e1e5f0"/><rect x="1250" y="380" width="5" height="5" fill="#e1e3f0"/><rect x="1255" y="380" width="5" height="5" fill="#e3e1ee"/><rect x="1260" y="380" width="5" height="5" fill="#e9deea"/><rect x="1265" y="380" width="5" height="5" fill="#f1dde3"/><rect x="1270" y="380" width="5" height="5" fill="#f2dde1"/><rect x="1275" y="380" width="5" height="5" fill="#f3dee0"/><rect x="1280" y="380" width="5" height="5" fill="#f4dedf"/><rect x="1285" y="380" width="5" height="5" fill="#f4dedf"/><rect x="1290" y="380" width="5" height="5" fill="#f4dede"/><rect x="1295" y="380" width="5" height="5" fill="#f4d9d9"/><rect x="1300" y="380" width="5" height="5" fill="#f2c6c7"/><rect x="1305" y="380" width="5" height="5" fill="#efabab"/><rect x="1310" y="380" width="5" height="5" fill="#eb8a8b"/><rect x="1315" y="380" width="5" height="5" fill="#e76869"/><rect x="1320" y="380" width="5" height="5" fill="#e44949"/><rect x="1325" y="380" width="5" height="5" fill="#e23131"/><rect x="1330" y="380" width="5" height="5" fill="#e02424"/><rect x="1335" y="380" width="5" height="5" fill="#e02323"/><rect x="1340" y="380" width="5" height="5" fill="#e12323"/><rect x="1345" y="380" width="5" height="5" fill="#e02422"/><rect x="1350" y="380" width="5" height="5" fill="#df2522"/><rect x="1355" y="380" width="5" height="5" fill="#de2622"/><rect x="1360" y="380" width="5" height="5" fill="#dd2622"/><rect x="1365" y="380" width="5" height="5" fill="#dc2622"/><rect x="1370" y="380" width="5" height="5" fill="#da2721"/><rect x="1375" y="380" width="5" height="5" fill="#d92721"/><rect x="1380" y="380" width="5" height="5" fill="#d82721"/><rect x="1385" y="380" width="5" height="5" fill="#d72821"/><rect x="1390" y="380" width="5" height="5" fill="#d62821"/><rect x="1395" y="380" width="5" height="5" fill="#d52820"/><rect x="1400" y="380" width="5" height="5" fill="#d42820"/><rect x="1175" y="385" width="5" height="5" fill="#3173bf"/><rect x="1180" y="385" width="5" height="5" fill="#3273c0"/><rect x="1185" y="385" width="5" height="5" fill="#3373c1"/><rect x="1190" y="385" width="5" height="5" fill="#3372c2"/><rect x="1195" y="385" width="5" height="5" fill="#3472c2"/><rect x="1200" y="385" width="5" height="5" fill="#3a74c4"/><rect x="1205" y="385" width="5" height="5" fill="#4b7fc9"/><rect x="1210" y="385" width="5" height="5" fill="#6590d0"/><rect x="1215" y="385" width="5" height="5" fill="#84a4d9"/><rect x="1220" y="385" width="5" height="5" fill="#a3b9e0"/><rect x="1225" y="385" width="5" height="5" fill="#becce7"/><rect x="1230" y="385" width="5" height="5" fill="#d4dbed"/><rect x="1235" y="385" width="5" height="5" fill="#e0e4f0"/><rect x="1240" y="385" width="5" height="5" fill="#e1e4f0"/><rect x="1245" y="385" width="5" height="5" fill="#e2e2ef"/><rect x="1250" y="385" width="5" height="5" fill="#e3e1ee"/><rect x="1255" y="385" width="5" height="5" fill="#e6dfec"/><rect x="1260" y="385" width="5" height="5" fill="#ecdee8"/><rect x="1265" y="385" width="5" height="5" fill="#f1dde4"/><rect x="1270" y="385" width="5" height="5" fill="#f2dde2"/><rect x="1275" y="385" width="5" height="5" fill="#f3dde1"/><rect x="1280" y="385" width="5" height="5" fill="#f3dee0"/><rect x="1285" y="385" width="5" height="5" fill="#f4dedf"/><rect x="1290" y="385" width="5" height="5" fill="#f3dbdc"/><rect x="1295" y="385" width="5" height="5" fill="#f1cbcc"/><rect x="1300" y="385" width="5" height="5" fill="#eeb2b3"/><rect x="1305" y="385" width="5" height="5" fill="#eb9294"/><rect x="1310" y="385" width="5" height="5" fill="#e77072"/><rect x="1315" y="385" width="5" height="5" fill="#e35052"/><rect x="1320" y="385" width="5" height="5" fill="#e03638"/><rect x="1325" y="385" width="5" height="5" fill="#df2628"/><rect x="1330" y="385" width="5" height="5" fill="#df2324"/><rect x="1335" y="385" width="5" height="5" fill="#df2224"/><rect x="1340" y="385" width="5" height="5" fill="#de2224"/><rect x="1345" y="385" width="5" height="5" fill="#de2223"/><rect x="1350" y="385" width="5" height="5" fill="#dd2223"/><rect x="1355" y="385" width="5" height="5" fill="#dd2223"/><rect x="1360" y="385" width="5" height="5" fill="#dc2222"/><rect x="1365" y="385" width="5" height="5" fill="#dc2222"/><rect x="1370" y="385" width="5" height="5" fill="#db2222"/><rect x="1375" y="385" width="5" height="5" fill="#da2122"/><rect x="1380" y="385" width="5" height="5" fill="#d92221"/><rect x="1385" y="385" width="5" height="5" fill="#d82221"/><rect x="1390" y="385" width="5" height="5" fill="#d62321"/><rect x="1395" y="385" width="5" height="5" fill="#d52321"/><rect x="1175" y="390" width="5" height="5" fill="#326dbc"/><rect x="1180" y="390" width="5" height="5" fill="#336dbd"/><rect x="1185" y="390" width="5" height="5" fill="#336cbe"/><rect x="1190" y="390" width="5" height="5" fill="#346bbe"/><rect x="1195" y="390" width="5" height="5" fill="#366bbf"/><rect x="1200" y="390" width="5" height="5" fill="#4272c3"/><rect x="1205" y="390" width="5" height="5" fill="#5880c9"/><rect x="1210" y="390" width="5" height="5" fill="#7493d1"/><rect x="1215" y="390" width="5" height="5" fill="#92a9da"/><rect x="1220" y="390" width="5" height="5" fill="#b0bee2"/><rect x="1225" y="390" width="5" height="5" fill="#c8d0e9"/><rect x="1230" y="390" width="5" height="5" fill="#daddee"/><rect x="1235" y="390" width="5" height="5" fill="#e1e3f0"/><rect x="1240" y="390" width="5" height="5" fill="#e2e2ef"/><rect x="1245" y="390" width="5" height="5" fill="#e3e1ee"/><rect x="1250" y="390" width="5" height="5" fill="#e5dfed"/><rect x="1255" y="390" width="5" height="5" fill="#e8dfeb"/><rect x="1260" y="390" width="5" height="5" fill="#eddee7"/><rect x="1265" y="390" width="5" height="5" fill="#f1dde4"/><rect x="1270" y="390" width="5" height="5" fill="#f2dde3"/><rect x="1275" y="390" width="5" height="5" fill="#f2dde2"/><rect x="1280" y="390" width="5" height="5" fill="#f3dde1"/><rect x="1285" y="390" width="5" height="5" fill="#f3dadd"/><rect x="1290" y="390" width="5" height="5" fill="#f0cbcf"/><rect x="1295" y="390" width="5" height="5" fill="#edb3b7"/><rect x="1300" y="390" width="5" height="5" fill="#e99599"/><rect x="1305" y="390" width="5" height="5" fill="#e57478"/><rect x="1310" y="390" width="5" height="5" fill="#e25459"/><rect x="1315" y="390" width="5" height="5" fill="#df3a3e"/><rect x="1320" y="390" width="5" height="5" fill="#dd282c"/><rect x="1325" y="390" width="5" height="5" fill="#dc2226"/><rect x="1330" y="390" width="5" height="5" fill="#dc2226"/><rect x="1335" y="390" width="5" height="5" fill="#dc2225"/><rect x="1340" y="390" width="5" height="5" fill="#db2225"/><rect x="1345" y="390" width="5" height="5" fill="#db2224"/><rect x="1350" y="390" width="5" height="5" fill="#da2224"/><rect x="1355" y="390" width="5" height="5" fill="#da2223"/><rect x="1360" y="390" width="5" height="5" fill="#d92223"/><rect x="1365" y="390" width="5" height="5" fill="#d92123"/><rect x="1370" y="390" width="5" height="5" fill="#d82122"/><rect x="1375" y="390" width="5" height="5" fill="#d72122"/><rect x="1380" y="390" width="5" height="5" fill="#d72122"/><rect x="1385" y="390" width="5" height="5" fill="#d62122"/><rect x="1390" y="390" width="5" height="5" fill="#d62121"/><rect x="1395" y="390" width="5" height="5" fill="#d52121"/><rect x="1180" y="395" width="5" height="5" fill="#3467ba"/><rect x="1185" y="395" width="5" height="5" fill="#3466bb"/><rect x="1190" y="395" width="5" height="5" fill="#3564bb"/><rect x="1195" y="395" width="5" height="5" fill="#3a66bd"/><rect x="1200" y="395" width="5" height="5" fill="#4b70c2"/><rect x="1205" y="395" width="5" height="5" fill="#6281c9"/><rect x="1210" y="395" width="5" height="5" fill="#7f95d1"/><rect x="1215" y="395" width="5" height="5" fill="#9cabda"/><rect x="1220" y="395" width="5" height="5" fill="#b7c0e3"/><rect x="1225" y="395" width="5" height="5" fill="#cdd1e9"/><rect x="1230" y="395" width="5" height="5" fill="#dcdded"/><rect x="1235" y="395" width="5" height="5" fill="#e2e2ef"/><rect x="1240" y="395" width="5" height="5" fill="#e3e1ee"/><rect x="1245" y="395" width="5" height="5" fill="#e4e0ed"/><rect x="1250" y="395" width="5" height="5" fill="#e7dfec"/><rect x="1255" y="395" width="5" height="5" fill="#eadeea"/><rect x="1260" y="395" width="5" height="5" fill="#eedee6"/><rect x="1265" y="395" width="5" height="5" fill="#f1dde4"/><rect x="1270" y="395" width="5" height="5" fill="#f2dde3"/><rect x="1275" y="395" width="5" height="5" fill="#f2dde2"/><rect x="1280" y="395" width="5" height="5" fill="#f1d7dc"/><rect x="1285" y="395" width="5" height="5" fill="#efc8ce"/><rect x="1290" y="395" width="5" height="5" fill="#ebb0b7"/><rect x="1295" y="395" width="5" height="5" fill="#e7939b"/><rect x="1300" y="395" width="5" height="5" fill="#e3737c"/><rect x="1305" y="395" width="5" height="5" fill="#df555d"/><rect x="1310" y="395" width="5" height="5" fill="#dd3b41"/><rect x="1315" y="395" width="5" height="5" fill="#da292f"/><rect x="1320" y="395" width="5" height="5" fill="#d92228"/><rect x="1325" y="395" width="5" height="5" fill="#d92227"/><rect x="1330" y="395" width="5" height="5" fill="#d92227"/><rect x="1335" y="395" width="5" height="5" fill="#d92226"/><rect x="1340" y="395" width="5" height="5" fill="#d82225"/><rect x="1345" y="395" width="5" height="5" fill="#d82225"/><rect x="1350" y="395" width="5" height="5" fill="#d72225"/><rect x="1355" y="395" width="5" height="5" fill="#d72124"/><rect x="1360" y="395" width="5" height="5" fill="#d62124"/><rect x="1365" y="395" width="5" height="5" fill="#d62123"/><rect x="1370" y="395" width="5" height="5" fill="#d52123"/><rect x="1375" y="395" width="5" height="5" fill="#d52123"/><rect x="1380" y="395" width="5" height="5" fill="#d42122"/><rect x="1385" y="395" width="5" height="5" fill="#d42122"/><rect x="1390" y="395" width="5" height="5" fill="#d32122"/><rect x="1395" y="395" width="5" height="5" fill="#d22022"/><rect x="1400" y="395" width="5" height="5" fill="#d22021"/><rect x="1180" y="400" width="5" height="5" fill="#3561b7"/><rect x="1185" y="400" width="5" height="5" fill="#3560b8"/><rect x="1190" y="400" width="5" height="5" fill="#365eb8"/><rect x="1195" y="400" width="5" height="5" fill="#3f63bb"/><rect x="1200" y="400" width="5" height="5" fill="#516fc0"/><rect x="1205" y="400" width="5" height="5" fill="#6980c8"/><rect x="1210" y="400" width="5" height="5" fill="#8494d0"/><rect x="1215" y="400" width="5" height="5" fill="#a0aad9"/><rect x="1220" y="400" width="5" height="5" fill="#b9bee2"/><rect x="1225" y="400" width="5" height="5" fill="#cdcee8"/><rect x="1230" y="400" width="5" height="5" fill="#dbdaec"/><rect x="1235" y="400" width="5" height="5" fill="#e2dfee"/><rect x="1240" y="400" width="5" height="5" fill="#e4e0ee"/><rect x="1245" y="400" width="5" height="5" fill="#e6dfed"/><rect x="1250" y="400" width="5" height="5" fill="#e8dfeb"/><rect x="1255" y="400" width="5" height="5" fill="#ebdee9"/><rect x="1260" y="400" width="5" height="5" fill="#efdee6"/><rect x="1265" y="400" width="5" height="5" fill="#f1dde4"/><rect x="1270" y="400" width="5" height="5" fill="#f1dae1"/><rect x="1275" y="400" width="5" height="5" fill="#efd0d8"/><rect x="1280" y="400" width="5" height="5" fill="#ecbfc9"/><rect x="1285" y="400" width="5" height="5" fill="#e8a8b4"/><rect x="1290" y="400" width="5" height="5" fill="#e48c99"/><rect x="1295" y="400" width="5" height="5" fill="#e06e7c"/><rect x="1300" y="400" width="5" height="5" fill="#dc515f"/><rect x="1305" y="400" width="5" height="5" fill="#d83845"/><rect x="1310" y="400" width="5" height="5" fill="#d62733"/><rect x="1315" y="400" width="5" height="5" fill="#d6222b"/><rect x="1320" y="400" width="5" height="5" fill="#d62229"/><rect x="1325" y="400" width="5" height="5" fill="#d62228"/><rect x="1330" y="400" width="5" height="5" fill="#d62227"/><rect x="1335" y="400" width="5" height="5" fill="#d62227"/><rect x="1340" y="400" width="5" height="5" fill="#d52126"/><rect x="1345" y="400" width="5" height="5" fill="#d52126"/><rect x="1350" y="400" width="5" height="5" fill="#d42125"/><rect x="1355" y="400" width="5" height="5" fill="#d42125"/><rect x="1360" y="400" width="5" height="5" fill="#d42124"/><rect x="1365" y="400" width="5" height="5" fill="#d32124"/><rect x="1370" y="400" width="5" height="5" fill="#d32124"/><rect x="1375" y="400" width="5" height="5" fill="#d22123"/><rect x="1380" y="400" width="5" height="5" fill="#d12123"/><rect x="1385" y="400" width="5" height="5" fill="#d12023"/><rect x="1390" y="400" width="5" height="5" fill="#d02022"/><rect x="1180" y="405" width="5" height="5" fill="#355bb5"/><rect x="1185" y="405" width="5" height="5" fill="#365ab5"/><rect x="1190" y="405" width="5" height="5" fill="#3859b6"/><rect x="1195" y="405" width="5" height="5" fill="#435fb9"/><rect x="1200" y="405" width="5" height="5" fill="#556bbf"/><rect x="1205" y="405" width="5" height="5" fill="#6c7cc6"/><rect x="1210" y="405" width="5" height="5" fill="#8690ce"/><rect x="1215" y="405" width="5" height="5" fill="#a0a5d6"/><rect x="1220" y="405" width="5" height="5" fill="#b7b8de"/><rect x="1225" y="405" width="5" height="5" fill="#c9c7e4"/><rect x="1230" y="405" width="5" height="5" fill="#d6d2e8"/><rect x="1235" y="405" width="5" height="5" fill="#ded9eb"/><rect x="1240" y="405" width="5" height="5" fill="#e3dcec"/><rect x="1245" y="405" width="5" height="5" fill="#e6deeb"/><rect x="1250" y="405" width="5" height="5" fill="#e9ddea"/><rect x="1255" y="405" width="5" height="5" fill="#ebdce7"/><rect x="1260" y="405" width="5" height="5" fill="#edd8e2"/><rect x="1265" y="405" width="5" height="5" fill="#eed0da"/><rect x="1270" y="405" width="5" height="5" fill="#ecc4d0"/><rect x="1275" y="405" width="5" height="5" fill="#e8b2c0"/><rect x="1280" y="405" width="5" height="5" fill="#e49bac"/><rect x="1285" y="405" width="5" height="5" fill="#e08094"/><rect x="1290" y="405" width="5" height="5" fill="#db6479"/><rect x="1295" y="405" width="5" height="5" fill="#d7495e"/><rect x="1300" y="405" width="5" height="5" fill="#d33347"/><rect x="1305" y="405" width="5" height="5" fill="#d22437"/><rect x="1310" y="405" width="5" height="5" fill="#d22030"/><rect x="1315" y="405" width="5" height="5" fill="#d2212e"/><rect x="1320" y="405" width="5" height="5" fill="#d2212c"/><rect x="1325" y="405" width="5" height="5" fill="#d3212a"/><rect x="1330" y="405" width="5" height="5" fill="#d32128"/><rect x="1335" y="405" width="5" height="5" fill="#d32128"/><rect x="1340" y="405" width="5" height="5" fill="#d22127"/><rect x="1345" y="405" width="5" height="5" fill="#d22126"/><rect x="1350" y="405" width="5" height="5" fill="#d22126"/><rect x="1355" y="405" width="5" height="5" fill="#d12125"/><rect x="1360" y="405" width="5" height="5" fill="#d12125"/><rect x="1365" y="405" width="5" height="5" fill="#d02124"/><rect x="1370" y="405" width="5" height="5" fill="#d02024"/><rect x="1375" y="405" width="5" height="5" fill="#cf2024"/><rect x="1180" y="410" width="5" height="5" fill="#3656b2"/><rect x="1185" y="410" width="5" height="5" fill="#3754b2"/><rect x="1190" y="410" width="5" height="5" fill="#3954b3"/><rect x="1195" y="410" width="5" height="5" fill="#445ab6"/><rect x="1200" y="410" width="5" height="5" fill="#5566bc"/><rect x="1205" y="410" width="5" height="5" fill="#6c76c2"/><rect x="1210" y="410" width="5" height="5" fill="#8488ca"/><rect x="1215" y="410" width="5" height="5" fill="#9b9bd1"/><rect x="1220" y="410" width="5" height="5" fill="#afacd8"/><rect x="1225" y="410" width="5" height="5" fill="#c0badf"/><rect x="1230" y="410" width="5" height="5" fill="#ccc4e2"/><rect x="1235" y="410" width="5" height="5" fill="#d5cbe4"/><rect x="1240" y="410" width="5" height="5" fill="#dbcfe5"/><rect x="1245" y="410" width="5" height="5" fill="#dfd0e4"/><rect x="1250" y="410" width="5" height="5" fill="#e1cee0"/><rect x="1255" y="410" width="5" height="5" fill="#e3c8da"/><rect x="1260" y="410" width="5" height="5" fill="#e5bfd0"/><rect x="1265" y="410" width="5" height="5" fill="#e7b1c3"/><rect x="1270" y="410" width="5" height="5" fill="#e39fb3"/><rect x="1275" y="410" width="5" height="5" fill="#df89a0"/><rect x="1280" y="410" width="5" height="5" fill="#da708a"/><rect x="1285" y="410" width="5" height="5" fill="#d55772"/><rect x="1290" y="410" width="5" height="5" fill="#d13f5b"/><rect x="1295" y="410" width="5" height="5" fill="#ce2c48"/><rect x="1300" y="410" width="5" height="5" fill="#cd213a"/><rect x="1305" y="410" width="5" height="5" fill="#ce1f35"/><rect x="1310" y="410" width="5" height="5" fill="#ce1f33"/><rect x="1315" y="410" width="5" height="5" fill="#cf2030"/><rect x="1320" y="410" width="5" height="5" fill="#cf202e"/><rect x="1325" y="410" width="5" height="5" fill="#cf202c"/><rect x="1330" y="410" width="5" height="5" fill="#cf212b"/><rect x="1335" y="410" width="5" height="5" fill="#cf2129"/><rect x="1340" y="410" width="5" height="5" fill="#cf2128"/><rect x="1345" y="410" width="5" height="5" fill="#cf2127"/><rect x="1350" y="410" width="5" height="5" fill="#cf2126"/><rect x="1355" y="410" width="5" height="5" fill="#cf2126"/><rect x="1360" y="410" width="5" height="5" fill="#ce2025"/><rect x="1365" y="410" width="5" height="5" fill="#ce2025"/><rect x="1185" y="415" width="5" height="5" fill="#384fb0"/><rect x="1190" y="415" width="5" height="5" fill="#3a4eb1"/><rect x="1195" y="415" width="5" height="5" fill="#4554b3"/><rect x="1200" y="415" width="5" height="5" fill="#555fb8"/><rect x="1205" y="415" width="5" height="5" fill="#696dbd"/><rect x="1210" y="415" width="5" height="5" fill="#7e7cc4"/><rect x="1215" y="415" width="5" height="5" fill="#918cca"/><rect x="1220" y="415" width="5" height="5" fill="#a39ad0"/><rect x="1225" y="415" width="5" height="5" fill="#b2a6d5"/><rect x="1230" y="415" width="5" height="5" fill="#bdafd9"/><rect x="1235" y="415" width="5" height="5" fill="#c6b5d9"/><rect x="1240" y="415" width="5" height="5" fill="#ccb7d9"/><rect x="1245" y="415" width="5" height="5" fill="#d0b5d5"/><rect x="1250" y="415" width="5" height="5" fill="#d4b0ce"/><rect x="1255" y="415" width="5" height="5" fill="#d7a7c4"/><rect x="1260" y="415" width="5" height="5" fill="#da99b5"/><rect x="1265" y="415" width="5" height="5" fill="#dc87a3"/><rect x="1270" y="415" width="5" height="5" fill="#d87391"/><rect x="1275" y="415" width="5" height="5" fill="#d35d7e"/><rect x="1280" y="415" width="5" height="5" fill="#cf486a"/><rect x="1285" y="415" width="5" height="5" fill="#cc3457"/><rect x="1290" y="415" width="5" height="5" fill="#c92547"/><rect x="1295" y="415" width="5" height="5" fill="#c91e3e"/><rect x="1300" y="415" width="5" height="5" fill="#c91e3a"/><rect x="1305" y="415" width="5" height="5" fill="#ca1e38"/><rect x="1310" y="415" width="5" height="5" fill="#cb1f35"/><rect x="1315" y="415" width="5" height="5" fill="#cb1f33"/><rect x="1320" y="415" width="5" height="5" fill="#cc1f30"/><rect x="1325" y="415" width="5" height="5" fill="#cc1f2e"/><rect x="1330" y="415" width="5" height="5" fill="#cc202d"/><rect x="1335" y="415" width="5" height="5" fill="#cc202b"/><rect x="1340" y="415" width="5" height="5" fill="#cc202a"/><rect x="1345" y="415" width="5" height="5" fill="#cc2028"/><rect x="1350" y="415" width="5" height="5" fill="#cc2027"/><rect x="1185" y="420" width="5" height="5" fill="#394aad"/><rect x="1190" y="420" width="5" height="5" fill="#3c49ad"/><rect x="1195" y="420" width="5" height="5" fill="#454daf"/><rect x="1200" y="420" width="5" height="5" fill="#5355b2"/><rect x="1205" y="420" width="5" height="5" fill="#6360b7"/><rect x="1210" y="420" width="5" height="5" fill="#746cbc"/><rect x="1215" y="420" width="5" height="5" fill="#8579c1"/><rect x="1220" y="420" width="5" height="5" fill="#9384c6"/><rect x="1225" y="420" width="5" height="5" fill="#a08cc9"/><rect x="1230" y="420" width="5" height="5" fill="#ac93cb"/><rect x="1235" y="420" width="5" height="5" fill="#b496ca"/><rect x="1240" y="420" width="5" height="5" fill="#ba95c7"/><rect x="1245" y="420" width="5" height="5" fill="#bf91c0"/><rect x="1250" y="420" width="5" height="5" fill="#c389b6"/><rect x="1255" y="420" width="5" height="5" fill="#c77da7"/><rect x="1260" y="420" width="5" height="5" fill="#cc6d95"/><rect x="1265" y="420" width="5" height="5" fill="#d05b81"/><rect x="1270" y="420" width="5" height="5" fill="#cc4971"/><rect x="1275" y="420" width="5" height="5" fill="#c93861"/><rect x="1280" y="420" width="5" height="5" fill="#c62952"/><rect x="1285" y="420" width="5" height="5" fill="#c51f47"/><rect x="1290" y="420" width="5" height="5" fill="#c51d42"/><rect x="1295" y="420" width="5" height="5" fill="#c61d3f"/><rect x="1300" y="420" width="5" height="5" fill="#c71d3c"/><rect x="1305" y="420" width="5" height="5" fill="#c71d39"/><rect x="1310" y="420" width="5" height="5" fill="#c81e37"/><rect x="1315" y="420" width="5" height="5" fill="#c81e34"/><rect x="1320" y="420" width="5" height="5" fill="#c91e32"/><rect x="1325" y="420" width="5" height="5" fill="#c91f30"/><rect x="1330" y="420" width="5" height="5" fill="#c91f2f"/><rect x="1335" y="420" width="5" height="5" fill="#c91f2d"/><rect x="1340" y="420" width="5" height="5" fill="#c91f2b"/><rect x="1190" y="425" width="5" height="5" fill="#3e44aa"/><rect x="1195" y="425" width="5" height="5" fill="#4445ab"/><rect x="1200" y="425" width="5" height="5" fill="#4f4aad"/><rect x="1205" y="425" width="5" height="5" fill="#5b52b0"/><rect x="1210" y="425" width="5" height="5" fill="#695ab3"/><rect x="1215" y="425" width="5" height="5" fill="#7662b7"/><rect x="1220" y="425" width="5" height="5" fill="#8169ba"/><rect x="1225" y="425" width="5" height="5" fill="#8e70bb"/><rect x="1230" y="425" width="5" height="5" fill="#9873ba"/><rect x="1235" y="425" width="5" height="5" fill="#a073b8"/><rect x="1240" y="425" width="5" height="5" fill="#a670b2"/><rect x="1245" y="425" width="5" height="5" fill="#ac69a8"/><rect x="1250" y="425" width="5" height="5" fill="#b25f9a"/><rect x="1255" y="425" width="5" height="5" fill="#b8538a"/><rect x="1260" y="425" width="5" height="5" fill="#bf4577"/><rect x="1265" y="425" width="5" height="5" fill="#c53665"/><rect x="1270" y="425" width="5" height="5" fill="#c32a59"/><rect x="1275" y="425" width="5" height="5" fill="#c2214f"/><rect x="1280" y="425" width="5" height="5" fill="#c11d48"/><rect x="1285" y="425" width="5" height="5" fill="#c21d45"/><rect x="1290" y="425" width="5" height="5" fill="#c31c43"/><rect x="1295" y="425" width="5" height="5" fill="#c31c40"/><rect x="1300" y="425" width="5" height="5" fill="#c41c3d"/><rect x="1305" y="425" width="5" height="5" fill="#c41d3b"/><rect x="1310" y="425" width="5" height="5" fill="#c51d38"/><rect x="1315" y="425" width="5" height="5" fill="#c51d36"/><rect x="1320" y="425" width="5" height="5" fill="#c61e34"/><rect x="1325" y="425" width="5" height="5" fill="#c61e32"/><rect x="1190" y="430" width="5" height="5" fill="#4140a7"/><rect x="1195" y="430" width="5" height="5" fill="#443fa7"/><rect x="1200" y="430" width="5" height="5" fill="#4b40a7"/><rect x="1205" y="430" width="5" height="5" fill="#5443a9"/><rect x="1210" y="430" width="5" height="5" fill="#5e48aa"/><rect x="1215" y="430" width="5" height="5" fill="#674cac"/><rect x="1220" y="430" width="5" height="5" fill="#7250ac"/><rect x="1225" y="430" width="5" height="5" fill="#7d53ab"/><rect x="1230" y="430" width="5" height="5" fill="#8653a9"/><rect x="1235" y="430" width="5" height="5" fill="#8d51a5"/><rect x="1240" y="430" width="5" height="5" fill="#944c9c"/><rect x="1245" y="430" width="5" height="5" fill="#9c4590"/><rect x="1250" y="430" width="5" height="5" fill="#a43c82"/><rect x="1255" y="430" width="5" height="5" fill="#ac3272"/><rect x="1260" y="430" width="5" height="5" fill="#b62862"/><rect x="1265" y="430" width="5" height="5" fill="#be2054"/><rect x="1270" y="430" width="5" height="5" fill="#be1d4e"/><rect x="1275" y="430" width="5" height="5" fill="#bf1c4b"/><rect x="1280" y="430" width="5" height="5" fill="#bf1c49"/><rect x="1285" y="430" width="5" height="5" fill="#c01c46"/><rect x="1290" y="430" width="5" height="5" fill="#c01c43"/><rect x="1295" y="430" width="5" height="5" fill="#c11c41"/><rect x="1300" y="430" width="5" height="5" fill="#c11c3e"/><rect x="1305" y="430" width="5" height="5" fill="#c21c3c"/><rect x="1310" y="430" width="5" height="5" fill="#c21c39"/><rect x="1315" y="430" width="5" height="5" fill="#c31d37"/><rect x="1190" y="435" width="5" height="5" fill="#433da4"/><rect x="1195" y="435" width="5" height="5" fill="#463ba4"/><rect x="1200" y="435" width="5" height="5" fill="#4a38a3"/><rect x="1205" y="435" width="5" height="5" fill="#4f37a3"/><rect x="1210" y="435" width="5" height="5" fill="#5538a3"/><rect x="1215" y="435" width="5" height="5" fill="#5d39a2"/><rect x="1220" y="435" width="5" height="5" fill="#673aa0"/><rect x="1225" y="435" width="5" height="5" fill="#703a9d"/><rect x="1230" y="435" width="5" height="5" fill="#78389a"/><rect x="1235" y="435" width="5" height="5" fill="#803594"/><rect x="1240" y="435" width="5" height="5" fill="#893089"/><rect x="1245" y="435" width="5" height="5" fill="#922b7d"/><rect x="1250" y="435" width="5" height="5" fill="#9c2571"/><rect x="1255" y="435" width="5" height="5" fill="#a72064"/><rect x="1260" y="435" width="5" height="5" fill="#b31e59"/><rect x="1265" y="435" width="5" height="5" fill="#bc1c51"/><rect x="1270" y="435" width="5" height="5" fill="#bc1c4e"/><rect x="1275" y="435" width="5" height="5" fill="#bd1c4b"/><rect x="1280" y="435" width="5" height="5" fill="#bd1c49"/><rect x="1285" y="435" width="5" height="5" fill="#be1c46"/><rect x="1290" y="435" width="5" height="5" fill="#be1c43"/><rect x="1295" y="435" width="5" height="5" fill="#bf1c41"/><rect x="1300" y="435" width="5" height="5" fill="#bf1c3f"/><rect x="1195" y="440" width="5" height="5" fill="#4937a1"/><rect x="1200" y="440" width="5" height="5" fill="#4c35a0"/><rect x="1205" y="440" width="5" height="5" fill="#4f329f"/><rect x="1210" y="440" width="5" height="5" fill="#532f9d"/><rect x="1215" y="440" width="5" height="5" fill="#5b2e9a"/><rect x="1220" y="440" width="5" height="5" fill="#632d97"/><rect x="1225" y="440" width="5" height="5" fill="#6b2b94"/><rect x="1230" y="440" width="5" height="5" fill="#732990"/><rect x="1235" y="440" width="5" height="5" fill="#7b2688"/><rect x="1240" y="440" width="5" height="5" fill="#86247f"/><rect x="1245" y="440" width="5" height="5" fill="#902275"/><rect x="1250" y="440" width="5" height="5" fill="#9b216c"/><rect x="1255" y="440" width="5" height="5" fill="#a61f62"/><rect x="1260" y="440" width="5" height="5" fill="#b21d58"/><rect x="1265" y="440" width="5" height="5" fill="#ba1c50"/><rect x="1270" y="440" width="5" height="5" fill="#bb1c4d"/><rect x="1275" y="440" width="5" height="5" fill="#bb1c4b"/><rect x="1280" y="440" width="5" height="5" fill="#bb1c48"/><rect x="1285" y="440" width="5" height="5" fill="#bc1c46"/><rect x="1290" y="440" width="5" height="5" fill="#bc1c44"/><rect x="1195" y="445" width="5" height="5" fill="#4b349f"/><rect x="1200" y="445" width="5" height="5" fill="#4e329e"/><rect x="1205" y="445" width="5" height="5" fill="#512f9c"/><rect x="1210" y="445" width="5" height="5" fill="#582e9a"/><rect x="1215" y="445" width="5" height="5" fill="#5e2c97"/><rect x="1220" y="445" width="5" height="5" fill="#662a94"/><rect x="1225" y="445" width="5" height="5" fill="#6d2890"/><rect x="1230" y="445" width="5" height="5" fill="#75268c"/><rect x="1235" y="445" width="5" height="5" fill="#7e2583"/><rect x="1240" y="445" width="5" height="5" fill="#88237b"/><rect x="1245" y="445" width="5" height="5" fill="#922272"/><rect x="1250" y="445" width="5" height="5" fill="#9c2069"/><rect x="1255" y="445" width="5" height="5" fill="#a61f60"/><rect x="1260" y="445" width="5" height="5" fill="#b11d57"/><rect x="1265" y="445" width="5" height="5" fill="#b81c4f"/><rect x="1270" y="445" width="5" height="5" fill="#b91c4d"/><rect x="1275" y="445" width="5" height="5" fill="#b91c4b"/><rect x="1200" y="450" width="5" height="5" fill="#4f2f9b"/><rect x="1205" y="450" width="5" height="5" fill="#552e99"/><rect x="1210" y="450" width="5" height="5" fill="#5b2c97"/><rect x="1215" y="450" width="5" height="5" fill="#622b94"/><rect x="1220" y="450" width="5" height="5" fill="#692991"/><rect x="1225" y="450" width="5" height="5" fill="#70278d"/><rect x="1230" y="450" width="5" height="5" fill="#782587"/><rect x="1235" y="450" width="5" height="5" fill="#81247f"/><rect x="1240" y="450" width="5" height="5" fill="#8a2377"/><rect x="1245" y="450" width="5" height="5" fill="#93216f"/><rect x="1250" y="450" width="5" height="5" fill="#9d2066"/><rect x="1255" y="450" width="5" height="5" fill="#a61e5e"/><rect x="1260" y="450" width="5" height="5" fill="#b01d56"/><rect x="1265" y="450" width="5" height="5" fill="#b71c4f"/><rect x="1205" y="455" width="5" height="5" fill="#592c96"/><rect x="1210" y="455" width="5" height="5" fill="#5f2b94"/><rect x="1215" y="455" width="5" height="5" fill="#652991"/><rect x="1220" y="455" width="5" height="5" fill="#6c288e"/><rect x="1225" y="455" width="5" height="5" fill="#72268a"/><rect x="1230" y="455" width="5" height="5" fill="#7b2583"/><rect x="1235" y="455" width="5" height="5" fill="#83237b"/><rect x="1240" y="455" width="5" height="5" fill="#8b2274"/><rect x="1245" y="455" width="5" height="5" fill="#94216c"/><rect x="1250" y="455" width="5" height="5" fill="#9d1f64"/><rect x="1255" y="455" width="5" height="5" fill="#a61e5c"/><rect x="1205" y="460" width="5" height="5" fill="#5c2b94"/><rect x="1210" y="460" width="5" height="5" fill="#622a91"/><rect x="1215" y="460" width="5" height="5" fill="#68288e"/><rect x="1220" y="460" width="5" height="5" fill="#6f278b"/><rect x="1225" y="460" width="5" height="5" fill="#752586"/><rect x="1230" y="460" width="5" height="5" fill="#7d247f"/><rect x="1235" y="460" width="5" height="5" fill="#852378"/><rect x="1240" y="460" width="5" height="5" fill="#8d2171"/><rect x="1215" y="465" width="5" height="5" fill="#6b278c"/><rect x="1220" y="465" width="5" height="5" fill="#702589"/><rect x="1225" y="465" width="5" height="5" fill="#772482"/><rect x="1230" y="465" width="5" height="5" fill="#7f237c"/></g></g><path d="M1157 217.5 H1416 M1157 475.5 H1416" stroke="#b8b8a8" stroke-width="1.6" stroke-dasharray="1 2.14"/><path d="M1158.5 216 V477 M1414.5 216 V477" stroke="#b8b8a8" stroke-width="1.6" stroke-dasharray="1 2.75"/><g fill="none" stroke="#202020" stroke-width="0.6" opacity="0.55"><ellipse cx="1277.9" cy="373.2" rx="50" ry="26" transform="rotate(-28 1277.9 373.2)"/><polyline points="1177.4,340.2 1215.1,354.0 1252.8,365.0"/><polyline points="1196.3,249.5 1221.4,299.0 1252.8,345.8"/><polyline points="1262.2,282.5 1262.2,326.5 1259.1,351.2"/><polyline points="1293.6,301.8 1287.3,340.2"/><polyline points="1186.8,414.5 1224.5,403.5 1243.4,389.8"/><polyline points="1212.0,442.0 1237.1,420.0 1252.8,400.8"/><polyline points="1227.7,458.5 1246.5,431.0 1255.9,403.5"/><polyline points="1271.6,381.5 1281.0,409.0 1287.3,447.5"/><polyline points="1309.3,378.8 1325.0,359.5 1340.7,343.0"/><polyline points="1293.6,365.0 1325.0,362.2 1362.7,362.2"/><polyline points="1281.0,400.8 1325.0,387.0 1387.8,387.0"/><polyline points="1315.6,411.8 1331.3,428.2"/><polyline points="1259.1,376.0 1281.0,367.8 1303.0,354.0 1325.0,351.2"/></g><rect x="1300.5" y="350.8" width="16" height="2.6" fill="#000"/><rect x="1307.3" y="344.0" width="2.6" height="16" fill="#000"/><text x="1266" y="240" font-family="Liberation Sans" font-size="13.5" font-weight="bold" fill="#ffffff" letter-spacing="0.4">x = 0.4475 y = 0.4074</text><text x="1322" y="259" font-family="Liberation Sans" font-size="13.5" font-weight="bold" fill="#ffffff" letter-spacing="0.2">Tc = 2856K</text><g font-family="Liberation Sans" font-size="6.5" font-weight="bold" fill="#505858"><text x="1168.0" y="214" text-anchor="middle">.0</text><text x="1168.0" y="485" text-anchor="middle">.0</text><text x="1199.4" y="214" text-anchor="middle">.1</text><text x="1199.4" y="485" text-anchor="middle">.1</text><text x="1230.8" y="214" text-anchor="middle">.2</text><text x="1230.8" y="485" text-anchor="middle">.2</text><text x="1262.2" y="214" text-anchor="middle">.3</text><text x="1262.2" y="485" text-anchor="middle">.3</text><text x="1293.6" y="214" text-anchor="middle">.4</text><text x="1293.6" y="485" text-anchor="middle">.4</text><text x="1325.0" y="214" text-anchor="middle">.5</text><text x="1325.0" y="485" text-anchor="middle">.5</text><text x="1356.4" y="214" text-anchor="middle">.6</text><text x="1356.4" y="485" text-anchor="middle">.6</text><text x="1387.8" y="214" text-anchor="middle">.7</text><text x="1387.8" y="485" text-anchor="middle">.7</text><text x="1419.2" y="214" text-anchor="middle">.8</text><text x="1419.2" y="485" text-anchor="middle">.8</text><text x="1152" y="466.0" text-anchor="middle">.0</text><text x="1423" y="466.0" text-anchor="middle">.0</text><text x="1152" y="438.5" text-anchor="middle">.1</text><text x="1423" y="438.5" text-anchor="middle">.1</text><text x="1152" y="411.0" text-anchor="middle">.2</text><text x="1423" y="411.0" text-anchor="middle">.2</text><text x="1152" y="383.5" text-anchor="middle">.3</text><text x="1423" y="383.5" text-anchor="middle">.3</text><text x="1152" y="356.0" text-anchor="middle">.4</text><text x="1423" y="356.0" text-anchor="middle">.4</text><text x="1152" y="328.5" text-anchor="middle">.5</text><text x="1423" y="328.5" text-anchor="middle">.5</text><text x="1152" y="301.0" text-anchor="middle">.6</text><text x="1423" y="301.0" text-anchor="middle">.6</text><text x="1152" y="273.5" text-anchor="middle">.7</text><text x="1423" y="273.5" text-anchor="middle">.7</text><text x="1152" y="246.0" text-anchor="middle">.8</text><text x="1423" y="246.0" text-anchor="middle">.8</text><text x="1152" y="218.5" text-anchor="middle">.9</text><text x="1423" y="218.5" text-anchor="middle">.9</text></g></svg>
<div class="ab" style="left:207px;top:499px;width:1232px;height:342px;border-top:1px solid #a0a0a0;border-left:1px solid #a0a0a0;border-bottom:1px solid #fdfdfd"></div>
<div class="ab" style="left:208px;top:500px;width:1231px;height:340px;border-top:1px solid #696969;border-left:1px solid #696969;border-bottom:1px solid #e3e3e3"></div>
<div class="ab" style="left:209px;top:502px;width:1229px;height:321px;background:#e1fefe"></div>
<div class="ab" style="left:209px;top:502px;width:1229px;height:21px;background:linear-gradient(#ffffff 0%,#ffffff 42%,#f4f5f7 48%,#eff0f2 100%)"></div>
<div class="ab" style="left:209px;top:523px;width:1229px;height:1px;background:#d5d5d5"></div>
<div class="ab" style="left:263px;top:502px;width:1px;height:21px;background:#dcdcdc"></div>
<div class="ab" style="left:264px;top:502px;width:1px;height:21px;background:#ffffff"></div>
<div class="ab" style="left:384px;top:502px;width:1px;height:21px;background:#dcdcdc"></div>
<div class="ab" style="left:385px;top:502px;width:1px;height:21px;background:#ffffff"></div>
<div class="ab" style="left:504px;top:502px;width:1px;height:21px;background:#dcdcdc"></div>
<div class="ab" style="left:505px;top:502px;width:1px;height:21px;background:#ffffff"></div>
<div class="ab" style="left:624px;top:502px;width:1px;height:21px;background:#dcdcdc"></div>
<div class="ab" style="left:625px;top:502px;width:1px;height:21px;background:#ffffff"></div>
<div class="ab" style="left:704px;top:502px;width:1px;height:21px;background:#dcdcdc"></div>
<div class="ab" style="left:705px;top:502px;width:1px;height:21px;background:#ffffff"></div>
<div class="ab" style="left:784px;top:502px;width:1px;height:21px;background:#dcdcdc"></div>
<div class="ab" style="left:785px;top:502px;width:1px;height:21px;background:#ffffff"></div>
<div class="ab" style="left:864px;top:502px;width:1px;height:21px;background:#dcdcdc"></div>
<div class="ab" style="left:865px;top:502px;width:1px;height:21px;background:#ffffff"></div>
<div class="ab" style="left:964px;top:502px;width:1px;height:21px;background:#dcdcdc"></div>
<div class="ab" style="left:965px;top:502px;width:1px;height:21px;background:#ffffff"></div>
<div class="ab" style="left:1064px;top:502px;width:1px;height:21px;background:#dcdcdc"></div>
<div class="ab" style="left:1065px;top:502px;width:1px;height:21px;background:#ffffff"></div>
<div class="ab" style="left:1124px;top:502px;width:1px;height:21px;background:#dcdcdc"></div>
<div class="ab" style="left:1125px;top:502px;width:1px;height:21px;background:#ffffff"></div>
<div class="ab" style="left:1204px;top:502px;width:1px;height:21px;background:#dcdcdc"></div>
<div class="ab" style="left:1205px;top:502px;width:1px;height:21px;background:#ffffff"></div>
<div class="ab" style="left:1284px;top:502px;width:1px;height:21px;background:#dcdcdc"></div>
<div class="ab" style="left:1285px;top:502px;width:1px;height:21px;background:#ffffff"></div>
<div class="ab" style="left:1364px;top:502px;width:1px;height:21px;background:#dcdcdc"></div>
<div class="ab" style="left:1365px;top:502px;width:1px;height:21px;background:#ffffff"></div>
<div class="t" style="left:215px;top:507px;font-size:12.5px;color:#101010">SN.</div>
<div class="t" style="left:274px;top:507px;font-size:12.5px;color:#101010">Model</div>
<div class="t" style="left:394px;top:507px;font-size:12.5px;color:#101010">Number</div>
<div class="t" style="left:514px;top:507px;font-size:12.5px;color:#101010">White</div>
<div class="t" style="left:630px;top:507px;font-size:12.5px;color:#101010">Flux(lm)</div>
<div class="t" style="left:711px;top:507px;font-size:12.5px;color:#101010">Fe(W)</div>
<div class="t" style="left:790px;top:507px;font-size:12.5px;color:#101010">Eff.(lm/W)</div>
<div class="t" style="left:870px;top:507px;font-size:12.5px;color:#101010">x,y</div>
<div class="t" style="left:970px;top:507px;font-size:12.5px;color:#101010">Dx,Dy</div>
<div class="t" style="left:1071px;top:507px;font-size:12.5px;color:#101010">Tc(K)</div>
<div class="t" style="left:1131px;top:507px;font-size:12.5px;color:#101010">Ld(nm)</div>
<div class="t" style="left:1211px;top:507px;font-size:12.5px;color:#101010">Pur(%)</div>
<div class="t" style="left:1290px;top:507px;font-size:12.5px;color:#101010">Lp(nm)</div>
<div class="t" style="left:1371px;top:507px;font-size:12.5px;color:#101010">HW(nm)</div>
<div class="ab" style="left:229px;top:524px;width:1209px;height:21px;background:#f0f0f0"></div>
<div class="ab" style="left:213px;top:529px;width:13px;height:13px;border:1px solid #8f8f8f;background:linear-gradient(135deg,#dcdcdc,#f8f8f8)"></div>
<div class="ab" style="left:214px;top:530px;width:11px;height:11px;border:1px solid #f4f4f4;"></div>
<div class="t" style="left:231px;top:530px;font-size:12.5px;color:#101010">0001</div>
<div class="t" style="left:270px;top:530px;font-size:12.5px;color:#101010">LIGHT</div>
<div class="t" style="left:390px;top:530px;font-size:12.5px;color:#101010">N-00001</div>
<div class="t" style="left:510px;top:530px;font-size:12.5px;color:#101010">ANSI_2700K</div>
<div class="t" style="left:630px;top:530px;font-size:12.5px;color:#101010">1000.0</div>
<div class="t" style="left:710px;top:530px;font-size:12.5px;color:#101010">7.1574</div>
<div class="t" style="left:790px;top:530px;font-size:12.5px;color:#101010">59.52</div>
<div class="t" style="left:870px;top:530px;font-size:12.5px;color:#101010">0.4475 0.4074</div>
<div class="t" style="left:970px;top:530px;font-size:12.5px;color:#101010">-0.0000 -0.00...</div>
<div class="t" style="left:1078px;top:530px;font-size:12.5px;color:#101010">2856</div>
<div class="t" style="left:1131px;top:530px;font-size:12.5px;color:#101010">583.5</div>
<div class="t" style="left:1214px;top:530px;font-size:12.5px;color:#101010">56.6</div>
<div class="t" style="left:1290px;top:530px;font-size:12.5px;color:#101010">800.0</div>
<div class="t" style="left:1371px;top:530px;font-size:12.5px;color:#101010">205.4</div>
<svg style="left:209px;top:545px" width="1229" height="278" viewBox="209 545 1229 278" shape-rendering="crispEdges"><rect x="209" y="545" width="1229" height="1" fill="#ebecec"/><rect x="209" y="566" width="1229" height="1" fill="#ebecec"/><rect x="209" y="587" width="1229" height="1" fill="#ebecec"/><rect x="209" y="608" width="1229" height="1" fill="#ebecec"/><rect x="209" y="629" width="1229" height="1" fill="#ebecec"/><rect x="209" y="650" width="1229" height="1" fill="#ebecec"/><rect x="209" y="671" width="1229" height="1" fill="#ebecec"/><rect x="209" y="692" width="1229" height="1" fill="#ebecec"/><rect x="209" y="713" width="1229" height="1" fill="#ebecec"/><rect x="209" y="734" width="1229" height="1" fill="#ebecec"/><rect x="209" y="755" width="1229" height="1" fill="#ebecec"/><rect x="209" y="776" width="1229" height="1" fill="#ebecec"/><rect x="209" y="797" width="1229" height="1" fill="#ebecec"/><rect x="209" y="818" width="1229" height="1" fill="#ebecec"/><rect x="264" y="545" width="1" height="278" fill="#ebecec"/><rect x="385" y="545" width="1" height="278" fill="#ebecec"/><rect x="505" y="545" width="1" height="278" fill="#ebecec"/><rect x="625" y="545" width="1" height="278" fill="#ebecec"/><rect x="705" y="545" width="1" height="278" fill="#ebecec"/><rect x="785" y="545" width="1" height="278" fill="#ebecec"/><rect x="865" y="545" width="1" height="278" fill="#ebecec"/><rect x="965" y="545" width="1" height="278" fill="#ebecec"/><rect x="1065" y="545" width="1" height="278" fill="#ebecec"/><rect x="1125" y="545" width="1" height="278" fill="#ebecec"/><rect x="1205" y="545" width="1" height="278" fill="#ebecec"/><rect x="1285" y="545" width="1" height="278" fill="#ebecec"/><rect x="1365" y="545" width="1" height="278" fill="#ebecec"/></svg>
<div class="ab" style="left:209px;top:823px;width:1229px;height:16px;background:linear-gradient(90deg,#e8e8e8,#f0f0f0 2%,#f0f0f0 98%,#e8e8e8)"></div>
<svg style="left:215px;top:827px" width="4" height="7" viewBox="0 0 4 7"><path d="M4 0 L0 3.5 L4 7 Z" fill="#4a4a4a"/></svg>
<svg style="left:1428px;top:827px" width="4" height="7" viewBox="0 0 4 7"><path d="M0 0 L4 3.5 L0 7 Z" fill="#4a4a4a"/></svg>
<div class="ab" style="left:227px;top:823px;width:627px;height:15px;border:1px solid #8c8c8c;border-radius:2px;background:linear-gradient(#f7f7f7 0%,#ececec 45%,#dcdcdc 50%,#cfcfcf 100%)"></div>
<div class="ab" style="left:536px;top:827px;width:7px;height:8px;background:repeating-linear-gradient(90deg,#505050 0 1px,#e8e8e8 1px 3px)"></div>
<div class="ab" style="left:0;top:841px;width:1439px;height:1px;background:#a0a0a0"></div>
<div class="ab" style="left:0;top:842px;width:1439px;height:1px;background:#fdfdfd"></div>
<div class="ab" style="left:0;top:843px;width:1439px;height:17px;background:#f0eded"></div>
<div class="ab" style="left:0;top:860px;width:1439px;height:1px;background:#46484c"></div>
<div class="ab" style="left:0;top:861px;width:1439px;height:1px;background:#c9d6e6"></div>
<div class="t" style="left:2px;top:845px;font-size:15px;font-weight:bold;font-style:italic;color:#ffff00">EVERFINE</div>
<div class="t" style="left:3px;top:844px;font-size:15px;font-weight:bold;font-style:italic;color:#0000ff">EVERFINE</div>
<div class="t" style="left:90px;top:846px;font-size:12.5px;color:#101010">Ready</div>
<div class="t" style="left:1147px;top:846px;font-size:12.4px;color:#101010">PMS-80_V1[SN:1007081aaa]</div>
<div class="t" style="left:1368px;top:846px;font-size:12.5px;color:#101010">NUM</div>
<div class="ab" style="left:1325px;top:843px;width:1px;height:16px;background:#d7d4d4"></div>
<div class="ab" style="left:1363px;top:843px;width:1px;height:16px;background:#d7d4d4"></div>
<div class="ab" style="left:1402px;top:843px;width:1px;height:16px;background:#d7d4d4"></div>
</body></html>
